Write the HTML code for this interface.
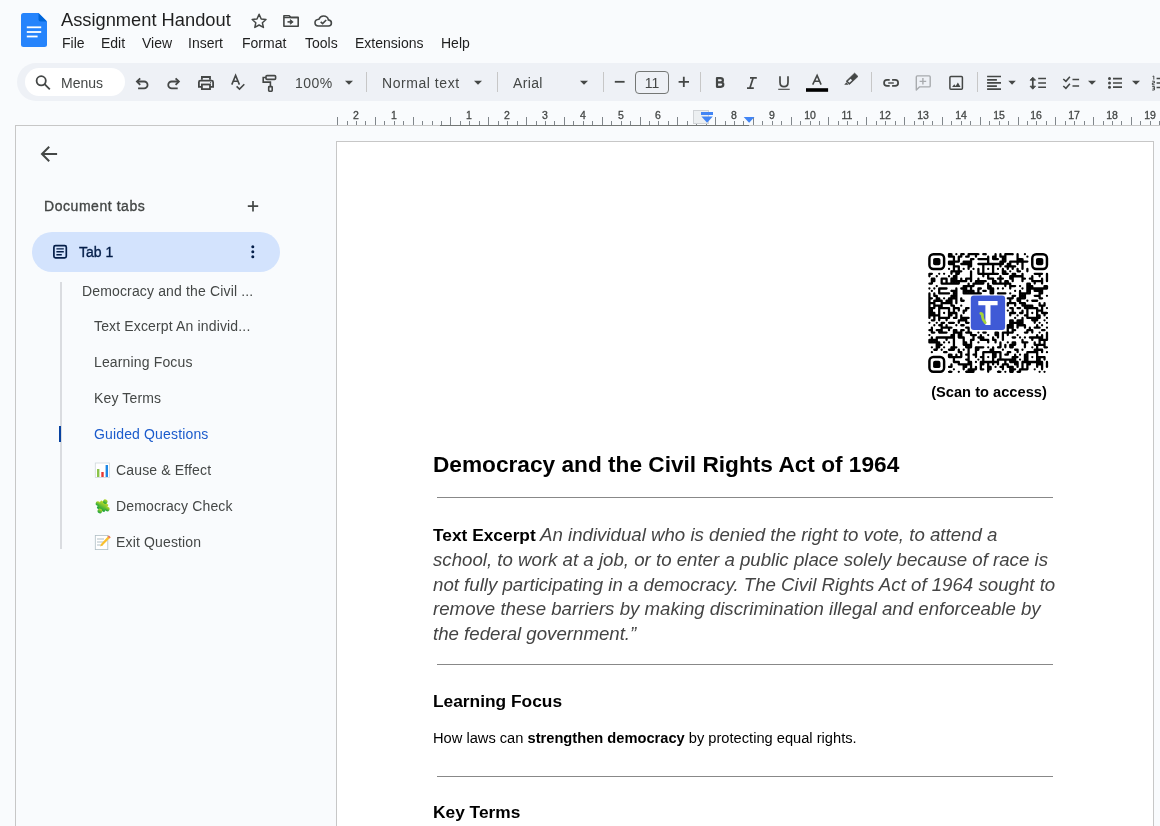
<!DOCTYPE html><html><head><meta charset="utf-8"><style>
*{box-sizing:border-box;margin:0;padding:0}
html,body{width:1160px;height:826px;overflow:hidden;background:#f9fbfd;font-family:"Liberation Sans",sans-serif;position:relative}
.t{position:absolute;white-space:nowrap;will-change:transform}
.a{position:absolute}
svg{position:absolute;overflow:visible}
.ic{fill:none;stroke:#444746;stroke-width:1.8}
</style></head><body><svg style="left:21px;top:13px" width="26" height="34" viewBox="0 0 26 34">
<path d="M2.5 0H17.5L26 8.5V31.5Q26 34 23.5 34H2.5Q0 34 0 31.5V2.5Q0 0 2.5 0Z" fill="#2684fc"/>
<path d="M17.5 0L26 8.5H19.5Q17.5 8.5 17.5 6.5Z" fill="#0066da"/>
<rect x="5.8" y="13.4" width="14.4" height="1.8" fill="#fff"/>
<rect x="5.8" y="18.1" width="14.4" height="1.8" fill="#fff"/>
<rect x="5.8" y="22.6" width="10.8" height="1.8" fill="#fff"/>
</svg><div class="t " style="left:61.3px;top:11.01px;font-size:18.3px;line-height:18.3px;color:#1f1f1f;">Assignment Handout</div>
<div class="t " style="left:62px;top:35.75px;font-size:14px;line-height:14px;color:#1f1f1f;">File</div>
<div class="t " style="left:101px;top:35.75px;font-size:14px;line-height:14px;color:#1f1f1f;">Edit</div>
<div class="t " style="left:142px;top:35.75px;font-size:14px;line-height:14px;color:#1f1f1f;">View</div>
<div class="t " style="left:188px;top:35.75px;font-size:14px;line-height:14px;color:#1f1f1f;">Insert</div>
<div class="t " style="left:242px;top:35.75px;font-size:14px;line-height:14px;color:#1f1f1f;">Format</div>
<div class="t " style="left:305px;top:35.75px;font-size:14px;line-height:14px;color:#1f1f1f;">Tools</div>
<div class="t " style="left:355px;top:35.75px;font-size:14px;line-height:14px;color:#1f1f1f;">Extensions</div>
<div class="t " style="left:441px;top:35.75px;font-size:14px;line-height:14px;color:#1f1f1f;">Help</div>
<div class="a" style="left:17px;top:63px;width:1200px;height:38px;border-radius:19px;background:#eef1f6"></div><div class="a" style="left:25px;top:68px;width:100px;height:28px;border-radius:14px;background:#fff"></div><div class="t " style="left:61px;top:75.55px;font-size:14px;line-height:14px;color:#444746;">Menus</div>
<div class="t " style="left:294.6px;top:75.55px;font-size:14px;line-height:14px;color:#444746;letter-spacing:0.5px;">100%</div>
<div class="t " style="left:381.6px;top:75.55px;font-size:14px;line-height:14px;color:#444746;letter-spacing:0.55px;">Normal text</div>
<div class="t " style="left:513px;top:75.55px;font-size:14px;line-height:14px;color:#444746;letter-spacing:0.35px;">Arial</div>
<div class="a" style="left:635px;top:70.5px;width:34px;height:23px;border:1px solid #747775;border-radius:4px"></div><div class="t" style="left:552px;width:200px;text-align:center;top:75.55px;font-size:14px;line-height:14px;color:#444746;">11</div>
<div class="a" style="left:366.0px;top:72px;width:1px;height:20px;background:#c7c7c7"></div><div class="a" style="left:496.5px;top:72px;width:1px;height:20px;background:#c7c7c7"></div><div class="a" style="left:603.0px;top:72px;width:1px;height:20px;background:#c7c7c7"></div><div class="a" style="left:700.0px;top:72px;width:1px;height:20px;background:#c7c7c7"></div><div class="a" style="left:871.0px;top:72px;width:1px;height:20px;background:#c7c7c7"></div><div class="a" style="left:976.5px;top:72px;width:1px;height:20px;background:#c7c7c7"></div><div class="a" style="left:15px;top:125px;width:1145px;height:1px;background:#c7c7c7"></div><div class="a" style="left:440px;top:125px;width:309px;height:1px;background:#747775"></div><div class="a" style="left:15px;top:125px;width:1px;height:701px;background:#c7c7c7"></div><div class="a" style="left:337px;top:117px;width:1px;height:8px;background:#80868b"></div><div class="a" style="left:347px;top:121px;width:1px;height:4px;background:#80868b"></div><div class="a" style="left:356px;top:121px;width:1px;height:4px;background:#80868b"></div><div class="a" style="left:365px;top:121px;width:1px;height:4px;background:#80868b"></div><div class="a" style="left:375px;top:117px;width:1px;height:8px;background:#80868b"></div><div class="a" style="left:384px;top:121px;width:1px;height:4px;background:#80868b"></div><div class="a" style="left:394px;top:121px;width:1px;height:4px;background:#80868b"></div><div class="a" style="left:403px;top:121px;width:1px;height:4px;background:#80868b"></div><div class="a" style="left:413px;top:117px;width:1px;height:8px;background:#80868b"></div><div class="a" style="left:422px;top:121px;width:1px;height:4px;background:#80868b"></div><div class="a" style="left:432px;top:121px;width:1px;height:4px;background:#80868b"></div><div class="a" style="left:441px;top:121px;width:1px;height:4px;background:#80868b"></div><div class="a" style="left:450px;top:117px;width:1px;height:8px;background:#80868b"></div><div class="a" style="left:460px;top:121px;width:1px;height:4px;background:#80868b"></div><div class="a" style="left:469px;top:121px;width:1px;height:4px;background:#80868b"></div><div class="a" style="left:479px;top:121px;width:1px;height:4px;background:#80868b"></div><div class="a" style="left:488px;top:117px;width:1px;height:8px;background:#80868b"></div><div class="a" style="left:498px;top:121px;width:1px;height:4px;background:#80868b"></div><div class="a" style="left:507px;top:121px;width:1px;height:4px;background:#80868b"></div><div class="a" style="left:517px;top:121px;width:1px;height:4px;background:#80868b"></div><div class="a" style="left:526px;top:117px;width:1px;height:8px;background:#80868b"></div><div class="a" style="left:536px;top:121px;width:1px;height:4px;background:#80868b"></div><div class="a" style="left:545px;top:121px;width:1px;height:4px;background:#80868b"></div><div class="a" style="left:554px;top:121px;width:1px;height:4px;background:#80868b"></div><div class="a" style="left:564px;top:117px;width:1px;height:8px;background:#80868b"></div><div class="a" style="left:573px;top:121px;width:1px;height:4px;background:#80868b"></div><div class="a" style="left:583px;top:121px;width:1px;height:4px;background:#80868b"></div><div class="a" style="left:592px;top:121px;width:1px;height:4px;background:#80868b"></div><div class="a" style="left:602px;top:117px;width:1px;height:8px;background:#80868b"></div><div class="a" style="left:611px;top:121px;width:1px;height:4px;background:#80868b"></div><div class="a" style="left:621px;top:121px;width:1px;height:4px;background:#80868b"></div><div class="a" style="left:630px;top:121px;width:1px;height:4px;background:#80868b"></div><div class="a" style="left:640px;top:117px;width:1px;height:8px;background:#80868b"></div><div class="a" style="left:649px;top:121px;width:1px;height:4px;background:#80868b"></div><div class="a" style="left:658px;top:121px;width:1px;height:4px;background:#80868b"></div><div class="a" style="left:668px;top:121px;width:1px;height:4px;background:#80868b"></div><div class="a" style="left:677px;top:117px;width:1px;height:8px;background:#80868b"></div><div class="a" style="left:687px;top:121px;width:1px;height:4px;background:#80868b"></div><div class="a" style="left:696px;top:121px;width:1px;height:4px;background:#80868b"></div><div class="a" style="left:706px;top:121px;width:1px;height:4px;background:#80868b"></div><div class="a" style="left:715px;top:117px;width:1px;height:8px;background:#80868b"></div><div class="a" style="left:725px;top:121px;width:1px;height:4px;background:#80868b"></div><div class="a" style="left:734px;top:121px;width:1px;height:4px;background:#80868b"></div><div class="a" style="left:743px;top:121px;width:1px;height:4px;background:#80868b"></div><div class="a" style="left:753px;top:117px;width:1px;height:8px;background:#80868b"></div><div class="a" style="left:762px;top:121px;width:1px;height:4px;background:#80868b"></div><div class="a" style="left:772px;top:121px;width:1px;height:4px;background:#80868b"></div><div class="a" style="left:781px;top:121px;width:1px;height:4px;background:#80868b"></div><div class="a" style="left:791px;top:117px;width:1px;height:8px;background:#80868b"></div><div class="a" style="left:800px;top:121px;width:1px;height:4px;background:#80868b"></div><div class="a" style="left:810px;top:121px;width:1px;height:4px;background:#80868b"></div><div class="a" style="left:819px;top:121px;width:1px;height:4px;background:#80868b"></div><div class="a" style="left:828px;top:117px;width:1px;height:8px;background:#80868b"></div><div class="a" style="left:838px;top:121px;width:1px;height:4px;background:#80868b"></div><div class="a" style="left:847px;top:121px;width:1px;height:4px;background:#80868b"></div><div class="a" style="left:857px;top:121px;width:1px;height:4px;background:#80868b"></div><div class="a" style="left:866px;top:117px;width:1px;height:8px;background:#80868b"></div><div class="a" style="left:876px;top:121px;width:1px;height:4px;background:#80868b"></div><div class="a" style="left:885px;top:121px;width:1px;height:4px;background:#80868b"></div><div class="a" style="left:895px;top:121px;width:1px;height:4px;background:#80868b"></div><div class="a" style="left:904px;top:117px;width:1px;height:8px;background:#80868b"></div><div class="a" style="left:914px;top:121px;width:1px;height:4px;background:#80868b"></div><div class="a" style="left:923px;top:121px;width:1px;height:4px;background:#80868b"></div><div class="a" style="left:932px;top:121px;width:1px;height:4px;background:#80868b"></div><div class="a" style="left:942px;top:117px;width:1px;height:8px;background:#80868b"></div><div class="a" style="left:951px;top:121px;width:1px;height:4px;background:#80868b"></div><div class="a" style="left:961px;top:121px;width:1px;height:4px;background:#80868b"></div><div class="a" style="left:970px;top:121px;width:1px;height:4px;background:#80868b"></div><div class="a" style="left:980px;top:117px;width:1px;height:8px;background:#80868b"></div><div class="a" style="left:989px;top:121px;width:1px;height:4px;background:#80868b"></div><div class="a" style="left:999px;top:121px;width:1px;height:4px;background:#80868b"></div><div class="a" style="left:1008px;top:121px;width:1px;height:4px;background:#80868b"></div><div class="a" style="left:1018px;top:117px;width:1px;height:8px;background:#80868b"></div><div class="a" style="left:1027px;top:121px;width:1px;height:4px;background:#80868b"></div><div class="a" style="left:1036px;top:121px;width:1px;height:4px;background:#80868b"></div><div class="a" style="left:1046px;top:121px;width:1px;height:4px;background:#80868b"></div><div class="a" style="left:1055px;top:117px;width:1px;height:8px;background:#80868b"></div><div class="a" style="left:1065px;top:121px;width:1px;height:4px;background:#80868b"></div><div class="a" style="left:1074px;top:121px;width:1px;height:4px;background:#80868b"></div><div class="a" style="left:1084px;top:121px;width:1px;height:4px;background:#80868b"></div><div class="a" style="left:1093px;top:117px;width:1px;height:8px;background:#80868b"></div><div class="a" style="left:1103px;top:121px;width:1px;height:4px;background:#80868b"></div><div class="a" style="left:1112px;top:121px;width:1px;height:4px;background:#80868b"></div><div class="a" style="left:1121px;top:121px;width:1px;height:4px;background:#80868b"></div><div class="a" style="left:1131px;top:117px;width:1px;height:8px;background:#80868b"></div><div class="a" style="left:1140px;top:121px;width:1px;height:4px;background:#80868b"></div><div class="a" style="left:1150px;top:121px;width:1px;height:4px;background:#80868b"></div><div class="a" style="left:1159px;top:121px;width:1px;height:4px;background:#80868b"></div><div class="t" style="left:256.0px;width:200px;text-align:center;top:110.11px;font-size:10.5px;line-height:10.5px;color:#444746;-webkit-text-stroke:0.3px #444746;">2</div>
<div class="t" style="left:293.8px;width:200px;text-align:center;top:110.11px;font-size:10.5px;line-height:10.5px;color:#444746;-webkit-text-stroke:0.3px #444746;">1</div>
<div class="t" style="left:369.40000000000003px;width:200px;text-align:center;top:110.11px;font-size:10.5px;line-height:10.5px;color:#444746;-webkit-text-stroke:0.3px #444746;">1</div>
<div class="t" style="left:407.20000000000005px;width:200px;text-align:center;top:110.11px;font-size:10.5px;line-height:10.5px;color:#444746;-webkit-text-stroke:0.3px #444746;">2</div>
<div class="t" style="left:445.0px;width:200px;text-align:center;top:110.11px;font-size:10.5px;line-height:10.5px;color:#444746;-webkit-text-stroke:0.3px #444746;">3</div>
<div class="t" style="left:482.79999999999995px;width:200px;text-align:center;top:110.11px;font-size:10.5px;line-height:10.5px;color:#444746;-webkit-text-stroke:0.3px #444746;">4</div>
<div class="t" style="left:520.6px;width:200px;text-align:center;top:110.11px;font-size:10.5px;line-height:10.5px;color:#444746;-webkit-text-stroke:0.3px #444746;">5</div>
<div class="t" style="left:558.4px;width:200px;text-align:center;top:110.11px;font-size:10.5px;line-height:10.5px;color:#444746;-webkit-text-stroke:0.3px #444746;">6</div>
<div class="t" style="left:596.2px;width:200px;text-align:center;top:110.11px;font-size:10.5px;line-height:10.5px;color:#444746;-webkit-text-stroke:0.3px #444746;">7</div>
<div class="t" style="left:634.0px;width:200px;text-align:center;top:110.11px;font-size:10.5px;line-height:10.5px;color:#444746;-webkit-text-stroke:0.3px #444746;">8</div>
<div class="t" style="left:671.8px;width:200px;text-align:center;top:110.11px;font-size:10.5px;line-height:10.5px;color:#444746;-webkit-text-stroke:0.3px #444746;">9</div>
<div class="t" style="left:709.6px;width:200px;text-align:center;top:110.11px;font-size:10.5px;line-height:10.5px;color:#444746;-webkit-text-stroke:0.3px #444746;">10</div>
<div class="t" style="left:747.4px;width:200px;text-align:center;top:110.11px;font-size:10.5px;line-height:10.5px;color:#444746;-webkit-text-stroke:0.3px #444746;">11</div>
<div class="t" style="left:785.2px;width:200px;text-align:center;top:110.11px;font-size:10.5px;line-height:10.5px;color:#444746;-webkit-text-stroke:0.3px #444746;">12</div>
<div class="t" style="left:823.0px;width:200px;text-align:center;top:110.11px;font-size:10.5px;line-height:10.5px;color:#444746;-webkit-text-stroke:0.3px #444746;">13</div>
<div class="t" style="left:860.8px;width:200px;text-align:center;top:110.11px;font-size:10.5px;line-height:10.5px;color:#444746;-webkit-text-stroke:0.3px #444746;">14</div>
<div class="t" style="left:898.6px;width:200px;text-align:center;top:110.11px;font-size:10.5px;line-height:10.5px;color:#444746;-webkit-text-stroke:0.3px #444746;">15</div>
<div class="t" style="left:936.4000000000001px;width:200px;text-align:center;top:110.11px;font-size:10.5px;line-height:10.5px;color:#444746;-webkit-text-stroke:0.3px #444746;">16</div>
<div class="t" style="left:974.1999999999998px;width:200px;text-align:center;top:110.11px;font-size:10.5px;line-height:10.5px;color:#444746;-webkit-text-stroke:0.3px #444746;">17</div>
<div class="t" style="left:1012.0px;width:200px;text-align:center;top:110.11px;font-size:10.5px;line-height:10.5px;color:#444746;-webkit-text-stroke:0.3px #444746;">18</div>
<div class="t" style="left:1049.8px;width:200px;text-align:center;top:110.11px;font-size:10.5px;line-height:10.5px;color:#444746;-webkit-text-stroke:0.3px #444746;">19</div>
<div class="a" style="left:693px;top:110px;width:16px;height:14px;background:#eceff1;border:1px solid #d0d3d6"></div><div class="a" style="left:701.4px;top:112px;width:11.4px;height:3.4px;background:#4285f4"></div><svg style="left:0;top:0" width="1160" height="826"><path d="M701.4 116.6H712.8L707.1 122.8Z" fill="#4285f4"/><path d="M743.7 117H754.5L749.1 122.8Z" fill="#4285f4"/></svg><div class="t " style="left:44.4px;top:199.45px;font-size:14px;line-height:14px;color:#444746;-webkit-text-stroke:0.35px #444746;letter-spacing:0.55px;">Document tabs</div>
<div class="a" style="left:32px;top:232px;width:248px;height:40px;border-radius:20px;background:#d3e3fd"></div><div class="t " style="left:79.4px;top:245.15px;font-size:14px;line-height:14px;color:#041e49;-webkit-text-stroke:0.35px #041e49;">Tab 1</div>
<div class="a" style="left:60px;top:282px;width:1.5px;height:267px;background:#dadce0"></div><div class="a" style="left:59px;top:426px;width:2px;height:16px;background:#0842a0"></div><div class="t " style="left:82.1px;top:283.65px;font-size:14px;line-height:14px;color:#444746;letter-spacing:0.15px;">Democracy and the Civil ...</div>
<div class="t " style="left:94.4px;top:319.45px;font-size:14px;line-height:14px;color:#444746;letter-spacing:0.15px;">Text Excerpt An individ...</div>
<div class="t " style="left:94.4px;top:355.15px;font-size:14px;line-height:14px;color:#444746;letter-spacing:0.15px;">Learning Focus</div>
<div class="t " style="left:94.4px;top:390.95px;font-size:14px;line-height:14px;color:#444746;letter-spacing:0.15px;">Key Terms</div>
<div class="t " style="left:94.4px;top:426.65px;font-size:14px;line-height:14px;color:#1b5bcc;letter-spacing:0.15px;">Guided Questions</div>
<div class="t " style="left:115.6px;top:462.95px;font-size:14px;line-height:14px;color:#444746;letter-spacing:0.15px;">Cause &amp; Effect</div>
<div class="t " style="left:115.6px;top:498.85px;font-size:14px;line-height:14px;color:#444746;letter-spacing:0.15px;">Democracy Check</div>
<div class="t " style="left:115.6px;top:534.65px;font-size:14px;line-height:14px;color:#444746;letter-spacing:0.15px;">Exit Question</div>
<div class="a" style="left:336px;top:141px;width:818px;height:700px;background:#fff;border:1px solid #c7c7c7"></div><div class="t " style="left:433.4px;top:452.81px;font-size:22.67px;line-height:22.67px;color:#000;font-weight:bold;">Democracy and the Civil Rights Act of 1964</div>
<div class="a" style="left:437px;top:497px;width:616px;height:1px;background:#888"></div><div class="t " style="left:433.4px;top:527.03px;font-size:17.33px;line-height:17.33px;color:#000;font-weight:bold;">Text Excerpt</div>
<div class="t " style="left:540.4px;top:525.90px;font-size:18.67px;line-height:18.67px;color:#444;font-style:italic;">An individual who is denied the right to vote, to attend a</div>
<div class="t " style="left:433.4px;top:550.50px;font-size:18.67px;line-height:18.67px;color:#444;font-style:italic;">school, to work at a job, or to enter a public place solely because of race is</div>
<div class="t " style="left:433.4px;top:576.20px;font-size:18.67px;line-height:18.67px;color:#444;font-style:italic;">not fully participating in a democracy. The Civil Rights Act of 1964 sought to</div>
<div class="t " style="left:433.4px;top:599.90px;font-size:18.67px;line-height:18.67px;color:#444;font-style:italic;">remove these barriers by making discrimination illegal and enforceable by</div>
<div class="t " style="left:433.4px;top:625.00px;font-size:18.67px;line-height:18.67px;color:#444;font-style:italic;">the federal government.”</div>
<div class="a" style="left:437px;top:663.5px;width:616px;height:1px;background:#888"></div><div class="t " style="left:433.4px;top:692.53px;font-size:17.33px;line-height:17.33px;color:#000;font-weight:bold;">Learning Focus</div>
<div class="t " style="left:433.4px;top:731.38px;font-size:14.67px;line-height:14.67px;color:#000;">How laws can <b>strengthen democracy</b> by protecting equal rights.</div>
<div class="a" style="left:437px;top:776px;width:616px;height:1px;background:#888"></div><div class="t " style="left:433.4px;top:804.43px;font-size:17.33px;line-height:17.33px;color:#000;font-weight:bold;">Key Terms</div>
<div class="t" style="left:889px;width:200px;text-align:center;top:385.38px;font-size:14.67px;line-height:14.67px;color:#000;font-weight:bold;">(Scan to access)</div>
<svg style="left:0;top:0" width="1160" height="826"><path d="M947.87 254.22a1.15 1.15 0 1 1 2.30 0a1.15 1.15 0 1 1 -2.30 0zM949.02 253.07h2.45v2.30h-2.45zM950.17 254.22v2.45h-2.30v-2.45zM950.31 254.22a1.15 1.15 0 1 1 2.30 0a1.15 1.15 0 1 1 -2.30 0zM952.62 254.22v2.45h-2.30v-2.45zM955.21 254.22a1.15 1.15 0 1 1 2.30 0a1.15 1.15 0 1 1 -2.30 0zM960.11 254.22a1.15 1.15 0 1 1 2.30 0a1.15 1.15 0 1 1 -2.30 0zM961.26 253.07h2.45v2.30h-2.45zM962.41 254.22v2.45h-2.30v-2.45zM962.56 254.22a1.15 1.15 0 1 1 2.30 0a1.15 1.15 0 1 1 -2.30 0zM967.46 254.22a1.15 1.15 0 1 1 2.30 0a1.15 1.15 0 1 1 -2.30 0zM968.61 253.07h2.45v2.30h-2.45zM969.76 254.22v2.45h-2.30v-2.45zM969.91 254.22a1.15 1.15 0 1 1 2.30 0a1.15 1.15 0 1 1 -2.30 0zM971.06 253.07h2.45v2.30h-2.45zM972.36 254.22a1.15 1.15 0 1 1 2.30 0a1.15 1.15 0 1 1 -2.30 0zM973.51 253.07h2.45v2.30h-2.45zM974.80 254.22a1.15 1.15 0 1 1 2.30 0a1.15 1.15 0 1 1 -2.30 0zM975.96 253.07h2.45v2.30h-2.45zM977.11 254.22v2.45h-2.30v-2.45zM977.25 254.22a1.15 1.15 0 1 1 2.30 0a1.15 1.15 0 1 1 -2.30 0zM982.15 254.22a1.15 1.15 0 1 1 2.30 0a1.15 1.15 0 1 1 -2.30 0zM983.30 253.07h2.45v2.30h-2.45zM984.60 254.22a1.15 1.15 0 1 1 2.30 0a1.15 1.15 0 1 1 -2.30 0zM994.40 254.22a1.15 1.15 0 1 1 2.30 0a1.15 1.15 0 1 1 -2.30 0zM996.70 254.22v2.45h-2.30v-2.45zM999.29 254.22a1.15 1.15 0 1 1 2.30 0a1.15 1.15 0 1 1 -2.30 0zM1001.60 254.22v2.45h-2.30v-2.45zM1004.19 254.22a1.15 1.15 0 1 1 2.30 0a1.15 1.15 0 1 1 -2.30 0zM1005.34 253.07h2.45v2.30h-2.45zM1006.49 254.22v2.45h-2.30v-2.45zM1006.64 254.22a1.15 1.15 0 1 1 2.30 0a1.15 1.15 0 1 1 -2.30 0zM1007.79 253.07h2.45v2.30h-2.45zM1009.09 254.22a1.15 1.15 0 1 1 2.30 0a1.15 1.15 0 1 1 -2.30 0zM1010.24 253.07h2.45v2.30h-2.45zM1011.54 254.22a1.15 1.15 0 1 1 2.30 0a1.15 1.15 0 1 1 -2.30 0zM1016.44 254.22a1.15 1.15 0 1 1 2.30 0a1.15 1.15 0 1 1 -2.30 0zM1018.74 254.22v2.45h-2.30v-2.45zM1023.78 254.22a1.15 1.15 0 1 1 2.30 0a1.15 1.15 0 1 1 -2.30 0zM947.87 256.67a1.15 1.15 0 1 1 2.30 0a1.15 1.15 0 1 1 -2.30 0zM949.02 255.52h2.45v2.30h-2.45zM950.31 256.67a1.15 1.15 0 1 1 2.30 0a1.15 1.15 0 1 1 -2.30 0zM951.47 255.52h2.45v2.30h-2.45zM952.76 256.67a1.15 1.15 0 1 1 2.30 0a1.15 1.15 0 1 1 -2.30 0zM955.07 256.67v2.45h-2.30v-2.45zM957.66 256.67a1.15 1.15 0 1 1 2.30 0a1.15 1.15 0 1 1 -2.30 0zM958.81 255.52h2.45v2.30h-2.45zM959.96 256.67v2.45h-2.30v-2.45zM960.11 256.67a1.15 1.15 0 1 1 2.30 0a1.15 1.15 0 1 1 -2.30 0zM965.01 256.67a1.15 1.15 0 1 1 2.30 0a1.15 1.15 0 1 1 -2.30 0zM966.16 255.52h2.45v2.30h-2.45zM967.46 256.67a1.15 1.15 0 1 1 2.30 0a1.15 1.15 0 1 1 -2.30 0zM974.80 256.67a1.15 1.15 0 1 1 2.30 0a1.15 1.15 0 1 1 -2.30 0zM987.05 256.67a1.15 1.15 0 1 1 2.30 0a1.15 1.15 0 1 1 -2.30 0zM989.35 256.67v2.45h-2.30v-2.45zM991.95 256.67a1.15 1.15 0 1 1 2.30 0a1.15 1.15 0 1 1 -2.30 0zM993.10 255.52h2.45v2.30h-2.45zM994.25 256.67v2.45h-2.30v-2.45zM994.40 256.67a1.15 1.15 0 1 1 2.30 0a1.15 1.15 0 1 1 -2.30 0zM996.70 256.67v2.45h-2.30v-2.45zM999.29 256.67a1.15 1.15 0 1 1 2.30 0a1.15 1.15 0 1 1 -2.30 0zM1000.44 255.52h2.45v2.30h-2.45zM1001.74 256.67a1.15 1.15 0 1 1 2.30 0a1.15 1.15 0 1 1 -2.30 0zM1002.89 255.52h2.45v2.30h-2.45zM1004.04 256.67v2.45h-2.30v-2.45zM1004.19 256.67a1.15 1.15 0 1 1 2.30 0a1.15 1.15 0 1 1 -2.30 0zM1006.49 256.67v2.45h-2.30v-2.45zM1016.44 256.67a1.15 1.15 0 1 1 2.30 0a1.15 1.15 0 1 1 -2.30 0zM1018.74 256.67v2.45h-2.30v-2.45zM1026.23 256.67a1.15 1.15 0 1 1 2.30 0a1.15 1.15 0 1 1 -2.30 0zM952.76 259.12a1.15 1.15 0 1 1 2.30 0a1.15 1.15 0 1 1 -2.30 0zM955.07 259.12v2.45h-2.30v-2.45zM957.66 259.12a1.15 1.15 0 1 1 2.30 0a1.15 1.15 0 1 1 -2.30 0zM959.96 259.12v2.45h-2.30v-2.45zM969.91 259.12a1.15 1.15 0 1 1 2.30 0a1.15 1.15 0 1 1 -2.30 0zM971.06 257.97h2.45v2.30h-2.45zM972.21 259.12v2.45h-2.30v-2.45zM972.36 259.12a1.15 1.15 0 1 1 2.30 0a1.15 1.15 0 1 1 -2.30 0zM977.25 259.12a1.15 1.15 0 1 1 2.30 0a1.15 1.15 0 1 1 -2.30 0zM978.40 257.97h2.45v2.30h-2.45zM979.70 259.12a1.15 1.15 0 1 1 2.30 0a1.15 1.15 0 1 1 -2.30 0zM980.85 257.97h2.45v2.30h-2.45zM982.15 259.12a1.15 1.15 0 1 1 2.30 0a1.15 1.15 0 1 1 -2.30 0zM983.30 257.97h2.45v2.30h-2.45zM984.60 259.12a1.15 1.15 0 1 1 2.30 0a1.15 1.15 0 1 1 -2.30 0zM985.75 257.97h2.45v2.30h-2.45zM987.05 259.12a1.15 1.15 0 1 1 2.30 0a1.15 1.15 0 1 1 -2.30 0zM989.35 259.12v2.45h-2.30v-2.45zM991.95 259.12a1.15 1.15 0 1 1 2.30 0a1.15 1.15 0 1 1 -2.30 0zM993.10 257.97h2.45v2.30h-2.45zM994.40 259.12a1.15 1.15 0 1 1 2.30 0a1.15 1.15 0 1 1 -2.30 0zM995.55 257.97h2.45v2.30h-2.45zM996.84 259.12a1.15 1.15 0 1 1 2.30 0a1.15 1.15 0 1 1 -2.30 0zM1001.74 259.12a1.15 1.15 0 1 1 2.30 0a1.15 1.15 0 1 1 -2.30 0zM1002.89 257.97h2.45v2.30h-2.45zM1004.04 259.12v2.45h-2.30v-2.45zM1004.19 259.12a1.15 1.15 0 1 1 2.30 0a1.15 1.15 0 1 1 -2.30 0zM1006.49 259.12v2.45h-2.30v-2.45zM1016.44 259.12a1.15 1.15 0 1 1 2.30 0a1.15 1.15 0 1 1 -2.30 0zM1017.59 257.97h2.45v2.30h-2.45zM1018.74 259.12v2.45h-2.30v-2.45zM1018.89 259.12a1.15 1.15 0 1 1 2.30 0a1.15 1.15 0 1 1 -2.30 0zM1020.04 257.97h2.45v2.30h-2.45zM1021.19 259.12v2.45h-2.30v-2.45zM1021.33 259.12a1.15 1.15 0 1 1 2.30 0a1.15 1.15 0 1 1 -2.30 0zM1023.64 259.12v2.45h-2.30v-2.45zM947.87 261.57a1.15 1.15 0 1 1 2.30 0a1.15 1.15 0 1 1 -2.30 0zM949.02 260.42h2.45v2.30h-2.45zM950.17 261.57v2.45h-2.30v-2.45zM950.31 261.57a1.15 1.15 0 1 1 2.30 0a1.15 1.15 0 1 1 -2.30 0zM951.47 260.42h2.45v2.30h-2.45zM952.62 261.57v2.45h-2.30v-2.45zM952.76 261.57a1.15 1.15 0 1 1 2.30 0a1.15 1.15 0 1 1 -2.30 0zM953.91 260.42h2.45v2.30h-2.45zM955.07 261.57v2.45h-2.30v-2.45zM955.21 261.57a1.15 1.15 0 1 1 2.30 0a1.15 1.15 0 1 1 -2.30 0zM956.36 260.42h2.45v2.30h-2.45zM957.66 261.57a1.15 1.15 0 1 1 2.30 0a1.15 1.15 0 1 1 -2.30 0zM962.56 261.57a1.15 1.15 0 1 1 2.30 0a1.15 1.15 0 1 1 -2.30 0zM963.71 260.42h2.45v2.30h-2.45zM964.86 261.57v2.45h-2.30v-2.45zM965.01 261.57a1.15 1.15 0 1 1 2.30 0a1.15 1.15 0 1 1 -2.30 0zM966.16 260.42h2.45v2.30h-2.45zM967.31 261.57v2.45h-2.30v-2.45zM967.46 261.57a1.15 1.15 0 1 1 2.30 0a1.15 1.15 0 1 1 -2.30 0zM968.61 260.42h2.45v2.30h-2.45zM969.76 261.57v2.45h-2.30v-2.45zM969.91 261.57a1.15 1.15 0 1 1 2.30 0a1.15 1.15 0 1 1 -2.30 0zM972.21 261.57v2.45h-2.30v-2.45zM987.05 261.57a1.15 1.15 0 1 1 2.30 0a1.15 1.15 0 1 1 -2.30 0zM989.35 261.57v2.45h-2.30v-2.45zM999.29 261.57a1.15 1.15 0 1 1 2.30 0a1.15 1.15 0 1 1 -2.30 0zM1000.44 260.42h2.45v2.30h-2.45zM1001.60 261.57v2.45h-2.30v-2.45zM1001.74 261.57a1.15 1.15 0 1 1 2.30 0a1.15 1.15 0 1 1 -2.30 0zM1002.89 260.42h2.45v2.30h-2.45zM1004.04 261.57v2.45h-2.30v-2.45zM1004.19 261.57a1.15 1.15 0 1 1 2.30 0a1.15 1.15 0 1 1 -2.30 0zM1009.09 261.57a1.15 1.15 0 1 1 2.30 0a1.15 1.15 0 1 1 -2.30 0zM1010.24 260.42h2.45v2.30h-2.45zM1011.39 261.57v2.45h-2.30v-2.45zM1011.54 261.57a1.15 1.15 0 1 1 2.30 0a1.15 1.15 0 1 1 -2.30 0zM1012.69 260.42h2.45v2.30h-2.45zM1013.99 261.57a1.15 1.15 0 1 1 2.30 0a1.15 1.15 0 1 1 -2.30 0zM1015.14 260.42h2.45v2.30h-2.45zM1016.44 261.57a1.15 1.15 0 1 1 2.30 0a1.15 1.15 0 1 1 -2.30 0zM1017.59 260.42h2.45v2.30h-2.45zM1018.74 261.57v2.45h-2.30v-2.45zM1018.89 261.57a1.15 1.15 0 1 1 2.30 0a1.15 1.15 0 1 1 -2.30 0zM1020.04 260.42h2.45v2.30h-2.45zM1021.33 261.57a1.15 1.15 0 1 1 2.30 0a1.15 1.15 0 1 1 -2.30 0zM1022.49 260.42h2.45v2.30h-2.45zM1023.64 261.57v2.45h-2.30v-2.45zM1023.78 261.57a1.15 1.15 0 1 1 2.30 0a1.15 1.15 0 1 1 -2.30 0zM1024.93 260.42h2.45v2.30h-2.45zM1026.23 261.57a1.15 1.15 0 1 1 2.30 0a1.15 1.15 0 1 1 -2.30 0zM947.87 264.02a1.15 1.15 0 1 1 2.30 0a1.15 1.15 0 1 1 -2.30 0zM949.02 262.87h2.45v2.30h-2.45zM950.31 264.02a1.15 1.15 0 1 1 2.30 0a1.15 1.15 0 1 1 -2.30 0zM951.47 262.87h2.45v2.30h-2.45zM952.76 264.02a1.15 1.15 0 1 1 2.30 0a1.15 1.15 0 1 1 -2.30 0zM955.07 264.02v2.45h-2.30v-2.45zM960.11 264.02a1.15 1.15 0 1 1 2.30 0a1.15 1.15 0 1 1 -2.30 0zM961.26 262.87h2.45v2.30h-2.45zM962.56 264.02a1.15 1.15 0 1 1 2.30 0a1.15 1.15 0 1 1 -2.30 0zM963.71 262.87h2.45v2.30h-2.45zM965.01 264.02a1.15 1.15 0 1 1 2.30 0a1.15 1.15 0 1 1 -2.30 0zM966.16 262.87h2.45v2.30h-2.45zM967.46 264.02a1.15 1.15 0 1 1 2.30 0a1.15 1.15 0 1 1 -2.30 0zM968.61 262.87h2.45v2.30h-2.45zM969.76 264.02v2.45h-2.30v-2.45zM969.91 264.02a1.15 1.15 0 1 1 2.30 0a1.15 1.15 0 1 1 -2.30 0zM972.21 264.02v2.45h-2.30v-2.45zM977.25 264.02a1.15 1.15 0 1 1 2.30 0a1.15 1.15 0 1 1 -2.30 0zM978.40 262.87h2.45v2.30h-2.45zM979.70 264.02a1.15 1.15 0 1 1 2.30 0a1.15 1.15 0 1 1 -2.30 0zM980.85 262.87h2.45v2.30h-2.45zM982.15 264.02a1.15 1.15 0 1 1 2.30 0a1.15 1.15 0 1 1 -2.30 0zM983.30 262.87h2.45v2.30h-2.45zM984.45 264.02v2.45h-2.30v-2.45zM984.60 264.02a1.15 1.15 0 1 1 2.30 0a1.15 1.15 0 1 1 -2.30 0zM985.75 262.87h2.45v2.30h-2.45zM987.05 264.02a1.15 1.15 0 1 1 2.30 0a1.15 1.15 0 1 1 -2.30 0zM988.20 262.87h2.45v2.30h-2.45zM989.50 264.02a1.15 1.15 0 1 1 2.30 0a1.15 1.15 0 1 1 -2.30 0zM990.65 262.87h2.45v2.30h-2.45zM991.95 264.02a1.15 1.15 0 1 1 2.30 0a1.15 1.15 0 1 1 -2.30 0zM993.10 262.87h2.45v2.30h-2.45zM994.25 264.02v2.45h-2.30v-2.45zM994.40 264.02a1.15 1.15 0 1 1 2.30 0a1.15 1.15 0 1 1 -2.30 0zM995.55 262.87h2.45v2.30h-2.45zM996.84 264.02a1.15 1.15 0 1 1 2.30 0a1.15 1.15 0 1 1 -2.30 0zM998.00 262.87h2.45v2.30h-2.45zM999.29 264.02a1.15 1.15 0 1 1 2.30 0a1.15 1.15 0 1 1 -2.30 0zM1000.44 262.87h2.45v2.30h-2.45zM1001.60 264.02v2.45h-2.30v-2.45zM1001.74 264.02a1.15 1.15 0 1 1 2.30 0a1.15 1.15 0 1 1 -2.30 0zM1006.64 264.02a1.15 1.15 0 1 1 2.30 0a1.15 1.15 0 1 1 -2.30 0zM1007.79 262.87h2.45v2.30h-2.45zM1008.94 264.02v2.45h-2.30v-2.45zM1009.09 264.02a1.15 1.15 0 1 1 2.30 0a1.15 1.15 0 1 1 -2.30 0zM1011.39 264.02v2.45h-2.30v-2.45zM1016.44 264.02a1.15 1.15 0 1 1 2.30 0a1.15 1.15 0 1 1 -2.30 0zM1021.33 264.02a1.15 1.15 0 1 1 2.30 0a1.15 1.15 0 1 1 -2.30 0zM1023.64 264.02v2.45h-2.30v-2.45zM952.76 266.47a1.15 1.15 0 1 1 2.30 0a1.15 1.15 0 1 1 -2.30 0zM953.91 265.32h2.45v2.30h-2.45zM955.07 266.47v2.45h-2.30v-2.45zM955.21 266.47a1.15 1.15 0 1 1 2.30 0a1.15 1.15 0 1 1 -2.30 0zM956.36 265.32h2.45v2.30h-2.45zM957.66 266.47a1.15 1.15 0 1 1 2.30 0a1.15 1.15 0 1 1 -2.30 0zM959.96 266.47v2.45h-2.30v-2.45zM967.46 266.47a1.15 1.15 0 1 1 2.30 0a1.15 1.15 0 1 1 -2.30 0zM968.61 265.32h2.45v2.30h-2.45zM969.76 266.47v2.45h-2.30v-2.45zM969.91 266.47a1.15 1.15 0 1 1 2.30 0a1.15 1.15 0 1 1 -2.30 0zM982.15 266.47a1.15 1.15 0 1 1 2.30 0a1.15 1.15 0 1 1 -2.30 0zM984.45 266.47v2.45h-2.30v-2.45zM991.95 266.47a1.15 1.15 0 1 1 2.30 0a1.15 1.15 0 1 1 -2.30 0zM994.25 266.47v2.45h-2.30v-2.45zM999.29 266.47a1.15 1.15 0 1 1 2.30 0a1.15 1.15 0 1 1 -2.30 0zM1004.19 266.47a1.15 1.15 0 1 1 2.30 0a1.15 1.15 0 1 1 -2.30 0zM1005.34 265.32h2.45v2.30h-2.45zM1006.64 266.47a1.15 1.15 0 1 1 2.30 0a1.15 1.15 0 1 1 -2.30 0zM1007.79 265.32h2.45v2.30h-2.45zM1008.94 266.47v2.45h-2.30v-2.45zM1009.09 266.47a1.15 1.15 0 1 1 2.30 0a1.15 1.15 0 1 1 -2.30 0zM1010.24 265.32h2.45v2.30h-2.45zM1011.54 266.47a1.15 1.15 0 1 1 2.30 0a1.15 1.15 0 1 1 -2.30 0zM1012.69 265.32h2.45v2.30h-2.45zM1013.84 266.47v2.45h-2.30v-2.45zM1013.99 266.47a1.15 1.15 0 1 1 2.30 0a1.15 1.15 0 1 1 -2.30 0zM1021.33 266.47a1.15 1.15 0 1 1 2.30 0a1.15 1.15 0 1 1 -2.30 0zM1023.64 266.47v2.45h-2.30v-2.45zM947.87 268.92a1.15 1.15 0 1 1 2.30 0a1.15 1.15 0 1 1 -2.30 0zM952.76 268.92a1.15 1.15 0 1 1 2.30 0a1.15 1.15 0 1 1 -2.30 0zM955.07 268.92v2.45h-2.30v-2.45zM957.66 268.92a1.15 1.15 0 1 1 2.30 0a1.15 1.15 0 1 1 -2.30 0zM959.96 268.92v2.45h-2.30v-2.45zM962.56 268.92a1.15 1.15 0 1 1 2.30 0a1.15 1.15 0 1 1 -2.30 0zM967.46 268.92a1.15 1.15 0 1 1 2.30 0a1.15 1.15 0 1 1 -2.30 0zM972.36 268.92a1.15 1.15 0 1 1 2.30 0a1.15 1.15 0 1 1 -2.30 0zM977.25 268.92a1.15 1.15 0 1 1 2.30 0a1.15 1.15 0 1 1 -2.30 0zM979.56 268.92v2.45h-2.30v-2.45zM982.15 268.92a1.15 1.15 0 1 1 2.30 0a1.15 1.15 0 1 1 -2.30 0zM984.45 268.92v2.45h-2.30v-2.45zM987.05 268.92a1.15 1.15 0 1 1 2.30 0a1.15 1.15 0 1 1 -2.30 0zM991.95 268.92a1.15 1.15 0 1 1 2.30 0a1.15 1.15 0 1 1 -2.30 0zM994.25 268.92v2.45h-2.30v-2.45zM996.84 268.92a1.15 1.15 0 1 1 2.30 0a1.15 1.15 0 1 1 -2.30 0zM1001.74 268.92a1.15 1.15 0 1 1 2.30 0a1.15 1.15 0 1 1 -2.30 0zM1004.04 268.92v2.45h-2.30v-2.45zM1006.64 268.92a1.15 1.15 0 1 1 2.30 0a1.15 1.15 0 1 1 -2.30 0zM1011.54 268.92a1.15 1.15 0 1 1 2.30 0a1.15 1.15 0 1 1 -2.30 0zM1016.44 268.92a1.15 1.15 0 1 1 2.30 0a1.15 1.15 0 1 1 -2.30 0zM1018.74 268.92v2.45h-2.30v-2.45zM1021.33 268.92a1.15 1.15 0 1 1 2.30 0a1.15 1.15 0 1 1 -2.30 0zM1026.23 268.92a1.15 1.15 0 1 1 2.30 0a1.15 1.15 0 1 1 -2.30 0zM1028.53 268.92v2.45h-2.30v-2.45zM950.31 271.37a1.15 1.15 0 1 1 2.30 0a1.15 1.15 0 1 1 -2.30 0zM951.47 270.22h2.45v2.30h-2.45zM952.62 271.37v2.45h-2.30v-2.45zM952.76 271.37a1.15 1.15 0 1 1 2.30 0a1.15 1.15 0 1 1 -2.30 0zM953.91 270.22h2.45v2.30h-2.45zM955.21 271.37a1.15 1.15 0 1 1 2.30 0a1.15 1.15 0 1 1 -2.30 0zM956.36 270.22h2.45v2.30h-2.45zM957.51 271.37v2.45h-2.30v-2.45zM957.66 271.37a1.15 1.15 0 1 1 2.30 0a1.15 1.15 0 1 1 -2.30 0zM958.81 270.22h2.45v2.30h-2.45zM959.96 271.37v2.45h-2.30v-2.45zM960.11 271.37a1.15 1.15 0 1 1 2.30 0a1.15 1.15 0 1 1 -2.30 0zM969.91 271.37a1.15 1.15 0 1 1 2.30 0a1.15 1.15 0 1 1 -2.30 0zM972.21 271.37v2.45h-2.30v-2.45zM977.25 271.37a1.15 1.15 0 1 1 2.30 0a1.15 1.15 0 1 1 -2.30 0zM979.56 271.37v2.45h-2.30v-2.45zM982.15 271.37a1.15 1.15 0 1 1 2.30 0a1.15 1.15 0 1 1 -2.30 0zM984.45 271.37v2.45h-2.30v-2.45zM991.95 271.37a1.15 1.15 0 1 1 2.30 0a1.15 1.15 0 1 1 -2.30 0zM994.25 271.37v2.45h-2.30v-2.45zM1001.74 271.37a1.15 1.15 0 1 1 2.30 0a1.15 1.15 0 1 1 -2.30 0zM1002.89 270.22h2.45v2.30h-2.45zM1004.04 271.37v2.45h-2.30v-2.45zM1004.19 271.37a1.15 1.15 0 1 1 2.30 0a1.15 1.15 0 1 1 -2.30 0zM1006.49 271.37v2.45h-2.30v-2.45zM1009.09 271.37a1.15 1.15 0 1 1 2.30 0a1.15 1.15 0 1 1 -2.30 0zM1016.44 271.37a1.15 1.15 0 1 1 2.30 0a1.15 1.15 0 1 1 -2.30 0zM1017.59 270.22h2.45v2.30h-2.45zM1018.89 271.37a1.15 1.15 0 1 1 2.30 0a1.15 1.15 0 1 1 -2.30 0zM1026.23 271.37a1.15 1.15 0 1 1 2.30 0a1.15 1.15 0 1 1 -2.30 0zM928.27 273.82a1.15 1.15 0 1 1 2.30 0a1.15 1.15 0 1 1 -2.30 0zM929.42 272.67h2.45v2.30h-2.45zM930.58 273.82v2.45h-2.30v-2.45zM930.72 273.82a1.15 1.15 0 1 1 2.30 0a1.15 1.15 0 1 1 -2.30 0zM938.07 273.82a1.15 1.15 0 1 1 2.30 0a1.15 1.15 0 1 1 -2.30 0zM942.97 273.82a1.15 1.15 0 1 1 2.30 0a1.15 1.15 0 1 1 -2.30 0zM950.31 273.82a1.15 1.15 0 1 1 2.30 0a1.15 1.15 0 1 1 -2.30 0zM955.21 273.82a1.15 1.15 0 1 1 2.30 0a1.15 1.15 0 1 1 -2.30 0zM956.36 272.67h2.45v2.30h-2.45zM957.51 273.82v2.45h-2.30v-2.45zM957.66 273.82a1.15 1.15 0 1 1 2.30 0a1.15 1.15 0 1 1 -2.30 0zM969.91 273.82a1.15 1.15 0 1 1 2.30 0a1.15 1.15 0 1 1 -2.30 0zM972.21 273.82v2.45h-2.30v-2.45zM977.25 273.82a1.15 1.15 0 1 1 2.30 0a1.15 1.15 0 1 1 -2.30 0zM978.40 272.67h2.45v2.30h-2.45zM979.70 273.82a1.15 1.15 0 1 1 2.30 0a1.15 1.15 0 1 1 -2.30 0zM980.85 272.67h2.45v2.30h-2.45zM982.15 273.82a1.15 1.15 0 1 1 2.30 0a1.15 1.15 0 1 1 -2.30 0zM983.30 272.67h2.45v2.30h-2.45zM984.45 273.82v2.45h-2.30v-2.45zM984.60 273.82a1.15 1.15 0 1 1 2.30 0a1.15 1.15 0 1 1 -2.30 0zM985.75 272.67h2.45v2.30h-2.45zM987.05 273.82a1.15 1.15 0 1 1 2.30 0a1.15 1.15 0 1 1 -2.30 0zM988.20 272.67h2.45v2.30h-2.45zM989.35 273.82v2.45h-2.30v-2.45zM989.50 273.82a1.15 1.15 0 1 1 2.30 0a1.15 1.15 0 1 1 -2.30 0zM990.65 272.67h2.45v2.30h-2.45zM991.95 273.82a1.15 1.15 0 1 1 2.30 0a1.15 1.15 0 1 1 -2.30 0zM993.10 272.67h2.45v2.30h-2.45zM994.40 273.82a1.15 1.15 0 1 1 2.30 0a1.15 1.15 0 1 1 -2.30 0zM995.55 272.67h2.45v2.30h-2.45zM996.84 273.82a1.15 1.15 0 1 1 2.30 0a1.15 1.15 0 1 1 -2.30 0zM1001.74 273.82a1.15 1.15 0 1 1 2.30 0a1.15 1.15 0 1 1 -2.30 0zM1002.89 272.67h2.45v2.30h-2.45zM1004.19 273.82a1.15 1.15 0 1 1 2.30 0a1.15 1.15 0 1 1 -2.30 0zM1005.34 272.67h2.45v2.30h-2.45zM1006.64 273.82a1.15 1.15 0 1 1 2.30 0a1.15 1.15 0 1 1 -2.30 0zM1011.54 273.82a1.15 1.15 0 1 1 2.30 0a1.15 1.15 0 1 1 -2.30 0zM1012.69 272.67h2.45v2.30h-2.45zM1013.84 273.82v2.45h-2.30v-2.45zM1013.99 273.82a1.15 1.15 0 1 1 2.30 0a1.15 1.15 0 1 1 -2.30 0zM1016.29 273.82v2.45h-2.30v-2.45zM1021.33 273.82a1.15 1.15 0 1 1 2.30 0a1.15 1.15 0 1 1 -2.30 0zM1023.64 273.82v2.45h-2.30v-2.45zM1033.58 273.82a1.15 1.15 0 1 1 2.30 0a1.15 1.15 0 1 1 -2.30 0zM1034.73 272.67h2.45v2.30h-2.45zM1036.03 273.82a1.15 1.15 0 1 1 2.30 0a1.15 1.15 0 1 1 -2.30 0zM1037.18 272.67h2.45v2.30h-2.45zM1038.48 273.82a1.15 1.15 0 1 1 2.30 0a1.15 1.15 0 1 1 -2.30 0zM1039.63 272.67h2.45v2.30h-2.45zM1040.78 273.82v2.45h-2.30v-2.45zM1040.93 273.82a1.15 1.15 0 1 1 2.30 0a1.15 1.15 0 1 1 -2.30 0zM1045.82 273.82a1.15 1.15 0 1 1 2.30 0a1.15 1.15 0 1 1 -2.30 0zM1048.13 273.82v2.45h-2.30v-2.45zM928.27 276.27a1.15 1.15 0 1 1 2.30 0a1.15 1.15 0 1 1 -2.30 0zM935.62 276.27a1.15 1.15 0 1 1 2.30 0a1.15 1.15 0 1 1 -2.30 0zM947.87 276.27a1.15 1.15 0 1 1 2.30 0a1.15 1.15 0 1 1 -2.30 0zM952.76 276.27a1.15 1.15 0 1 1 2.30 0a1.15 1.15 0 1 1 -2.30 0zM953.91 275.11h2.45v2.30h-2.45zM955.07 276.27v2.45h-2.30v-2.45zM955.21 276.27a1.15 1.15 0 1 1 2.30 0a1.15 1.15 0 1 1 -2.30 0zM957.51 276.27v2.45h-2.30v-2.45zM969.91 276.27a1.15 1.15 0 1 1 2.30 0a1.15 1.15 0 1 1 -2.30 0zM972.21 276.27v2.45h-2.30v-2.45zM982.15 276.27a1.15 1.15 0 1 1 2.30 0a1.15 1.15 0 1 1 -2.30 0zM987.05 276.27a1.15 1.15 0 1 1 2.30 0a1.15 1.15 0 1 1 -2.30 0zM989.35 276.27v2.45h-2.30v-2.45zM999.29 276.27a1.15 1.15 0 1 1 2.30 0a1.15 1.15 0 1 1 -2.30 0zM1001.60 276.27v2.45h-2.30v-2.45zM1009.09 276.27a1.15 1.15 0 1 1 2.30 0a1.15 1.15 0 1 1 -2.30 0zM1010.24 275.11h2.45v2.30h-2.45zM1011.39 276.27v2.45h-2.30v-2.45zM1011.54 276.27a1.15 1.15 0 1 1 2.30 0a1.15 1.15 0 1 1 -2.30 0zM1012.69 275.11h2.45v2.30h-2.45zM1013.84 276.27v2.45h-2.30v-2.45zM1013.99 276.27a1.15 1.15 0 1 1 2.30 0a1.15 1.15 0 1 1 -2.30 0zM1015.14 275.11h2.45v2.30h-2.45zM1016.44 276.27a1.15 1.15 0 1 1 2.30 0a1.15 1.15 0 1 1 -2.30 0zM1017.59 275.11h2.45v2.30h-2.45zM1018.89 276.27a1.15 1.15 0 1 1 2.30 0a1.15 1.15 0 1 1 -2.30 0zM1020.04 275.11h2.45v2.30h-2.45zM1021.33 276.27a1.15 1.15 0 1 1 2.30 0a1.15 1.15 0 1 1 -2.30 0zM1023.64 276.27v2.45h-2.30v-2.45zM1031.13 276.27a1.15 1.15 0 1 1 2.30 0a1.15 1.15 0 1 1 -2.30 0zM1033.43 276.27v2.45h-2.30v-2.45zM1038.48 276.27a1.15 1.15 0 1 1 2.30 0a1.15 1.15 0 1 1 -2.30 0zM1045.82 276.27a1.15 1.15 0 1 1 2.30 0a1.15 1.15 0 1 1 -2.30 0zM1048.13 276.27v2.45h-2.30v-2.45zM930.72 278.71a1.15 1.15 0 1 1 2.30 0a1.15 1.15 0 1 1 -2.30 0zM931.87 277.56h2.45v2.30h-2.45zM933.02 278.71v2.45h-2.30v-2.45zM933.17 278.71a1.15 1.15 0 1 1 2.30 0a1.15 1.15 0 1 1 -2.30 0zM935.47 278.71v2.45h-2.30v-2.45zM940.52 278.71a1.15 1.15 0 1 1 2.30 0a1.15 1.15 0 1 1 -2.30 0zM941.67 277.56h2.45v2.30h-2.45zM942.82 278.71v2.45h-2.30v-2.45zM942.97 278.71a1.15 1.15 0 1 1 2.30 0a1.15 1.15 0 1 1 -2.30 0zM944.12 277.56h2.45v2.30h-2.45zM945.42 278.71a1.15 1.15 0 1 1 2.30 0a1.15 1.15 0 1 1 -2.30 0zM947.72 278.71v2.45h-2.30v-2.45zM950.31 278.71a1.15 1.15 0 1 1 2.30 0a1.15 1.15 0 1 1 -2.30 0zM951.47 277.56h2.45v2.30h-2.45zM952.62 278.71v2.45h-2.30v-2.45zM952.76 278.71a1.15 1.15 0 1 1 2.30 0a1.15 1.15 0 1 1 -2.30 0zM953.91 277.56h2.45v2.30h-2.45zM955.07 278.71v2.45h-2.30v-2.45zM955.21 278.71a1.15 1.15 0 1 1 2.30 0a1.15 1.15 0 1 1 -2.30 0zM957.51 278.71v2.45h-2.30v-2.45zM960.11 278.71a1.15 1.15 0 1 1 2.30 0a1.15 1.15 0 1 1 -2.30 0zM962.41 278.71v2.45h-2.30v-2.45zM965.01 278.71a1.15 1.15 0 1 1 2.30 0a1.15 1.15 0 1 1 -2.30 0zM966.16 277.56h2.45v2.30h-2.45zM967.31 278.71v2.45h-2.30v-2.45zM967.46 278.71a1.15 1.15 0 1 1 2.30 0a1.15 1.15 0 1 1 -2.30 0zM968.61 277.56h2.45v2.30h-2.45zM969.91 278.71a1.15 1.15 0 1 1 2.30 0a1.15 1.15 0 1 1 -2.30 0zM972.21 278.71v2.45h-2.30v-2.45zM977.25 278.71a1.15 1.15 0 1 1 2.30 0a1.15 1.15 0 1 1 -2.30 0zM979.56 278.71v2.45h-2.30v-2.45zM987.05 278.71a1.15 1.15 0 1 1 2.30 0a1.15 1.15 0 1 1 -2.30 0zM988.20 277.56h2.45v2.30h-2.45zM989.50 278.71a1.15 1.15 0 1 1 2.30 0a1.15 1.15 0 1 1 -2.30 0zM990.65 277.56h2.45v2.30h-2.45zM991.95 278.71a1.15 1.15 0 1 1 2.30 0a1.15 1.15 0 1 1 -2.30 0zM994.25 278.71v2.45h-2.30v-2.45zM996.84 278.71a1.15 1.15 0 1 1 2.30 0a1.15 1.15 0 1 1 -2.30 0zM998.00 277.56h2.45v2.30h-2.45zM999.29 278.71a1.15 1.15 0 1 1 2.30 0a1.15 1.15 0 1 1 -2.30 0zM1000.44 277.56h2.45v2.30h-2.45zM1001.60 278.71v2.45h-2.30v-2.45zM1001.74 278.71a1.15 1.15 0 1 1 2.30 0a1.15 1.15 0 1 1 -2.30 0zM1009.09 278.71a1.15 1.15 0 1 1 2.30 0a1.15 1.15 0 1 1 -2.30 0zM1010.24 277.56h2.45v2.30h-2.45zM1011.54 278.71a1.15 1.15 0 1 1 2.30 0a1.15 1.15 0 1 1 -2.30 0zM1013.84 278.71v2.45h-2.30v-2.45zM1021.33 278.71a1.15 1.15 0 1 1 2.30 0a1.15 1.15 0 1 1 -2.30 0zM1022.49 277.56h2.45v2.30h-2.45zM1023.64 278.71v2.45h-2.30v-2.45zM1023.78 278.71a1.15 1.15 0 1 1 2.30 0a1.15 1.15 0 1 1 -2.30 0zM1028.68 278.71a1.15 1.15 0 1 1 2.30 0a1.15 1.15 0 1 1 -2.30 0zM1029.83 277.56h2.45v2.30h-2.45zM1031.13 278.71a1.15 1.15 0 1 1 2.30 0a1.15 1.15 0 1 1 -2.30 0zM1033.43 278.71v2.45h-2.30v-2.45zM1040.93 278.71a1.15 1.15 0 1 1 2.30 0a1.15 1.15 0 1 1 -2.30 0zM1043.23 278.71v2.45h-2.30v-2.45zM1045.82 278.71a1.15 1.15 0 1 1 2.30 0a1.15 1.15 0 1 1 -2.30 0zM1048.13 278.71v2.45h-2.30v-2.45zM930.72 281.16a1.15 1.15 0 1 1 2.30 0a1.15 1.15 0 1 1 -2.30 0zM931.87 280.01h2.45v2.30h-2.45zM933.02 281.16v2.45h-2.30v-2.45zM933.17 281.16a1.15 1.15 0 1 1 2.30 0a1.15 1.15 0 1 1 -2.30 0zM940.52 281.16a1.15 1.15 0 1 1 2.30 0a1.15 1.15 0 1 1 -2.30 0zM942.82 281.16v2.45h-2.30v-2.45zM945.42 281.16a1.15 1.15 0 1 1 2.30 0a1.15 1.15 0 1 1 -2.30 0zM947.72 281.16v2.45h-2.30v-2.45zM950.31 281.16a1.15 1.15 0 1 1 2.30 0a1.15 1.15 0 1 1 -2.30 0zM951.47 280.01h2.45v2.30h-2.45zM952.62 281.16v2.45h-2.30v-2.45zM952.76 281.16a1.15 1.15 0 1 1 2.30 0a1.15 1.15 0 1 1 -2.30 0zM953.91 280.01h2.45v2.30h-2.45zM955.07 281.16v2.45h-2.30v-2.45zM955.21 281.16a1.15 1.15 0 1 1 2.30 0a1.15 1.15 0 1 1 -2.30 0zM956.36 280.01h2.45v2.30h-2.45zM957.51 281.16v2.45h-2.30v-2.45zM957.66 281.16a1.15 1.15 0 1 1 2.30 0a1.15 1.15 0 1 1 -2.30 0zM958.81 280.01h2.45v2.30h-2.45zM959.96 281.16v2.45h-2.30v-2.45zM960.11 281.16a1.15 1.15 0 1 1 2.30 0a1.15 1.15 0 1 1 -2.30 0zM961.26 280.01h2.45v2.30h-2.45zM962.56 281.16a1.15 1.15 0 1 1 2.30 0a1.15 1.15 0 1 1 -2.30 0zM963.71 280.01h2.45v2.30h-2.45zM965.01 281.16a1.15 1.15 0 1 1 2.30 0a1.15 1.15 0 1 1 -2.30 0zM969.91 281.16a1.15 1.15 0 1 1 2.30 0a1.15 1.15 0 1 1 -2.30 0zM974.80 281.16a1.15 1.15 0 1 1 2.30 0a1.15 1.15 0 1 1 -2.30 0zM975.96 280.01h2.45v2.30h-2.45zM977.11 281.16v2.45h-2.30v-2.45zM977.25 281.16a1.15 1.15 0 1 1 2.30 0a1.15 1.15 0 1 1 -2.30 0zM978.40 280.01h2.45v2.30h-2.45zM979.56 281.16v2.45h-2.30v-2.45zM979.70 281.16a1.15 1.15 0 1 1 2.30 0a1.15 1.15 0 1 1 -2.30 0zM980.85 280.01h2.45v2.30h-2.45zM982.00 281.16v2.45h-2.30v-2.45zM982.15 281.16a1.15 1.15 0 1 1 2.30 0a1.15 1.15 0 1 1 -2.30 0zM983.30 280.01h2.45v2.30h-2.45zM984.45 281.16v2.45h-2.30v-2.45zM984.60 281.16a1.15 1.15 0 1 1 2.30 0a1.15 1.15 0 1 1 -2.30 0zM991.95 281.16a1.15 1.15 0 1 1 2.30 0a1.15 1.15 0 1 1 -2.30 0zM993.10 280.01h2.45v2.30h-2.45zM994.25 281.16v2.45h-2.30v-2.45zM994.40 281.16a1.15 1.15 0 1 1 2.30 0a1.15 1.15 0 1 1 -2.30 0zM996.70 281.16v2.45h-2.30v-2.45zM999.29 281.16a1.15 1.15 0 1 1 2.30 0a1.15 1.15 0 1 1 -2.30 0zM1001.60 281.16v2.45h-2.30v-2.45zM1004.19 281.16a1.15 1.15 0 1 1 2.30 0a1.15 1.15 0 1 1 -2.30 0zM1005.34 280.01h2.45v2.30h-2.45zM1006.49 281.16v2.45h-2.30v-2.45zM1006.64 281.16a1.15 1.15 0 1 1 2.30 0a1.15 1.15 0 1 1 -2.30 0zM1008.94 281.16v2.45h-2.30v-2.45zM1011.54 281.16a1.15 1.15 0 1 1 2.30 0a1.15 1.15 0 1 1 -2.30 0zM1021.33 281.16a1.15 1.15 0 1 1 2.30 0a1.15 1.15 0 1 1 -2.30 0zM1031.13 281.16a1.15 1.15 0 1 1 2.30 0a1.15 1.15 0 1 1 -2.30 0zM1032.28 280.01h2.45v2.30h-2.45zM1033.58 281.16a1.15 1.15 0 1 1 2.30 0a1.15 1.15 0 1 1 -2.30 0zM1034.73 280.01h2.45v2.30h-2.45zM1035.88 281.16v2.45h-2.30v-2.45zM1036.03 281.16a1.15 1.15 0 1 1 2.30 0a1.15 1.15 0 1 1 -2.30 0zM1037.18 280.01h2.45v2.30h-2.45zM1038.48 281.16a1.15 1.15 0 1 1 2.30 0a1.15 1.15 0 1 1 -2.30 0zM1039.63 280.01h2.45v2.30h-2.45zM1040.93 281.16a1.15 1.15 0 1 1 2.30 0a1.15 1.15 0 1 1 -2.30 0zM1043.23 281.16v2.45h-2.30v-2.45zM1045.82 281.16a1.15 1.15 0 1 1 2.30 0a1.15 1.15 0 1 1 -2.30 0zM928.27 283.61a1.15 1.15 0 1 1 2.30 0a1.15 1.15 0 1 1 -2.30 0zM929.42 282.46h2.45v2.30h-2.45zM930.72 283.61a1.15 1.15 0 1 1 2.30 0a1.15 1.15 0 1 1 -2.30 0zM940.52 283.61a1.15 1.15 0 1 1 2.30 0a1.15 1.15 0 1 1 -2.30 0zM941.67 282.46h2.45v2.30h-2.45zM942.97 283.61a1.15 1.15 0 1 1 2.30 0a1.15 1.15 0 1 1 -2.30 0zM944.12 282.46h2.45v2.30h-2.45zM945.42 283.61a1.15 1.15 0 1 1 2.30 0a1.15 1.15 0 1 1 -2.30 0zM946.57 282.46h2.45v2.30h-2.45zM947.87 283.61a1.15 1.15 0 1 1 2.30 0a1.15 1.15 0 1 1 -2.30 0zM949.02 282.46h2.45v2.30h-2.45zM950.31 283.61a1.15 1.15 0 1 1 2.30 0a1.15 1.15 0 1 1 -2.30 0zM951.47 282.46h2.45v2.30h-2.45zM952.76 283.61a1.15 1.15 0 1 1 2.30 0a1.15 1.15 0 1 1 -2.30 0zM953.91 282.46h2.45v2.30h-2.45zM955.21 283.61a1.15 1.15 0 1 1 2.30 0a1.15 1.15 0 1 1 -2.30 0zM956.36 282.46h2.45v2.30h-2.45zM957.66 283.61a1.15 1.15 0 1 1 2.30 0a1.15 1.15 0 1 1 -2.30 0zM967.46 283.61a1.15 1.15 0 1 1 2.30 0a1.15 1.15 0 1 1 -2.30 0zM969.76 283.61v2.45h-2.30v-2.45zM972.36 283.61a1.15 1.15 0 1 1 2.30 0a1.15 1.15 0 1 1 -2.30 0zM973.51 282.46h2.45v2.30h-2.45zM974.66 283.61v2.45h-2.30v-2.45zM974.80 283.61a1.15 1.15 0 1 1 2.30 0a1.15 1.15 0 1 1 -2.30 0zM975.96 282.46h2.45v2.30h-2.45zM977.25 283.61a1.15 1.15 0 1 1 2.30 0a1.15 1.15 0 1 1 -2.30 0zM978.40 282.46h2.45v2.30h-2.45zM979.70 283.61a1.15 1.15 0 1 1 2.30 0a1.15 1.15 0 1 1 -2.30 0zM980.85 282.46h2.45v2.30h-2.45zM982.15 283.61a1.15 1.15 0 1 1 2.30 0a1.15 1.15 0 1 1 -2.30 0zM987.05 283.61a1.15 1.15 0 1 1 2.30 0a1.15 1.15 0 1 1 -2.30 0zM989.35 283.61v2.45h-2.30v-2.45zM991.95 283.61a1.15 1.15 0 1 1 2.30 0a1.15 1.15 0 1 1 -2.30 0zM993.10 282.46h2.45v2.30h-2.45zM994.40 283.61a1.15 1.15 0 1 1 2.30 0a1.15 1.15 0 1 1 -2.30 0zM995.55 282.46h2.45v2.30h-2.45zM996.84 283.61a1.15 1.15 0 1 1 2.30 0a1.15 1.15 0 1 1 -2.30 0zM998.00 282.46h2.45v2.30h-2.45zM999.29 283.61a1.15 1.15 0 1 1 2.30 0a1.15 1.15 0 1 1 -2.30 0zM1000.44 282.46h2.45v2.30h-2.45zM1001.74 283.61a1.15 1.15 0 1 1 2.30 0a1.15 1.15 0 1 1 -2.30 0zM1002.89 282.46h2.45v2.30h-2.45zM1004.19 283.61a1.15 1.15 0 1 1 2.30 0a1.15 1.15 0 1 1 -2.30 0zM1005.34 282.46h2.45v2.30h-2.45zM1006.49 283.61v2.45h-2.30v-2.45zM1006.64 283.61a1.15 1.15 0 1 1 2.30 0a1.15 1.15 0 1 1 -2.30 0zM1007.79 282.46h2.45v2.30h-2.45zM1009.09 283.61a1.15 1.15 0 1 1 2.30 0a1.15 1.15 0 1 1 -2.30 0zM1011.39 283.61v2.45h-2.30v-2.45zM1026.23 283.61a1.15 1.15 0 1 1 2.30 0a1.15 1.15 0 1 1 -2.30 0zM1027.38 282.46h2.45v2.30h-2.45zM1028.53 283.61v2.45h-2.30v-2.45zM1028.68 283.61a1.15 1.15 0 1 1 2.30 0a1.15 1.15 0 1 1 -2.30 0zM1030.98 283.61v2.45h-2.30v-2.45zM1033.58 283.61a1.15 1.15 0 1 1 2.30 0a1.15 1.15 0 1 1 -2.30 0zM1040.93 283.61a1.15 1.15 0 1 1 2.30 0a1.15 1.15 0 1 1 -2.30 0zM935.62 286.06a1.15 1.15 0 1 1 2.30 0a1.15 1.15 0 1 1 -2.30 0zM962.56 286.06a1.15 1.15 0 1 1 2.30 0a1.15 1.15 0 1 1 -2.30 0zM963.71 284.91h2.45v2.30h-2.45zM964.86 286.06v2.45h-2.30v-2.45zM965.01 286.06a1.15 1.15 0 1 1 2.30 0a1.15 1.15 0 1 1 -2.30 0zM966.16 284.91h2.45v2.30h-2.45zM967.31 286.06v2.45h-2.30v-2.45zM967.46 286.06a1.15 1.15 0 1 1 2.30 0a1.15 1.15 0 1 1 -2.30 0zM968.61 284.91h2.45v2.30h-2.45zM969.91 286.06a1.15 1.15 0 1 1 2.30 0a1.15 1.15 0 1 1 -2.30 0zM971.06 284.91h2.45v2.30h-2.45zM972.21 286.06v2.45h-2.30v-2.45zM972.36 286.06a1.15 1.15 0 1 1 2.30 0a1.15 1.15 0 1 1 -2.30 0zM987.05 286.06a1.15 1.15 0 1 1 2.30 0a1.15 1.15 0 1 1 -2.30 0zM988.20 284.91h2.45v2.30h-2.45zM989.35 286.06v2.45h-2.30v-2.45zM989.50 286.06a1.15 1.15 0 1 1 2.30 0a1.15 1.15 0 1 1 -2.30 0zM991.80 286.06v2.45h-2.30v-2.45zM1004.19 286.06a1.15 1.15 0 1 1 2.30 0a1.15 1.15 0 1 1 -2.30 0zM1009.09 286.06a1.15 1.15 0 1 1 2.30 0a1.15 1.15 0 1 1 -2.30 0zM1010.24 284.91h2.45v2.30h-2.45zM1011.39 286.06v2.45h-2.30v-2.45zM1011.54 286.06a1.15 1.15 0 1 1 2.30 0a1.15 1.15 0 1 1 -2.30 0zM1012.69 284.91h2.45v2.30h-2.45zM1013.99 286.06a1.15 1.15 0 1 1 2.30 0a1.15 1.15 0 1 1 -2.30 0zM1018.89 286.06a1.15 1.15 0 1 1 2.30 0a1.15 1.15 0 1 1 -2.30 0zM1026.23 286.06a1.15 1.15 0 1 1 2.30 0a1.15 1.15 0 1 1 -2.30 0zM1027.38 284.91h2.45v2.30h-2.45zM1028.53 286.06v2.45h-2.30v-2.45zM1028.68 286.06a1.15 1.15 0 1 1 2.30 0a1.15 1.15 0 1 1 -2.30 0zM1029.83 284.91h2.45v2.30h-2.45zM1030.98 286.06v2.45h-2.30v-2.45zM1031.13 286.06a1.15 1.15 0 1 1 2.30 0a1.15 1.15 0 1 1 -2.30 0zM1033.43 286.06v2.45h-2.30v-2.45zM1043.38 286.06a1.15 1.15 0 1 1 2.30 0a1.15 1.15 0 1 1 -2.30 0zM1044.53 284.91h2.45v2.30h-2.45zM1045.68 286.06v2.45h-2.30v-2.45zM1045.82 286.06a1.15 1.15 0 1 1 2.30 0a1.15 1.15 0 1 1 -2.30 0zM1048.13 286.06v2.45h-2.30v-2.45zM928.27 288.51a1.15 1.15 0 1 1 2.30 0a1.15 1.15 0 1 1 -2.30 0zM933.17 288.51a1.15 1.15 0 1 1 2.30 0a1.15 1.15 0 1 1 -2.30 0zM938.07 288.51a1.15 1.15 0 1 1 2.30 0a1.15 1.15 0 1 1 -2.30 0zM939.22 287.36h2.45v2.30h-2.45zM940.37 288.51v2.45h-2.30v-2.45zM940.52 288.51a1.15 1.15 0 1 1 2.30 0a1.15 1.15 0 1 1 -2.30 0zM941.67 287.36h2.45v2.30h-2.45zM942.97 288.51a1.15 1.15 0 1 1 2.30 0a1.15 1.15 0 1 1 -2.30 0zM944.12 287.36h2.45v2.30h-2.45zM945.42 288.51a1.15 1.15 0 1 1 2.30 0a1.15 1.15 0 1 1 -2.30 0zM955.21 288.51a1.15 1.15 0 1 1 2.30 0a1.15 1.15 0 1 1 -2.30 0zM957.51 288.51v2.45h-2.30v-2.45zM960.11 288.51a1.15 1.15 0 1 1 2.30 0a1.15 1.15 0 1 1 -2.30 0zM961.26 287.36h2.45v2.30h-2.45zM962.56 288.51a1.15 1.15 0 1 1 2.30 0a1.15 1.15 0 1 1 -2.30 0zM963.71 287.36h2.45v2.30h-2.45zM964.86 288.51v2.45h-2.30v-2.45zM965.01 288.51a1.15 1.15 0 1 1 2.30 0a1.15 1.15 0 1 1 -2.30 0zM967.31 288.51v2.45h-2.30v-2.45zM969.91 288.51a1.15 1.15 0 1 1 2.30 0a1.15 1.15 0 1 1 -2.30 0zM972.21 288.51v2.45h-2.30v-2.45zM977.25 288.51a1.15 1.15 0 1 1 2.30 0a1.15 1.15 0 1 1 -2.30 0zM978.40 287.36h2.45v2.30h-2.45zM979.56 288.51v2.45h-2.30v-2.45zM979.70 288.51a1.15 1.15 0 1 1 2.30 0a1.15 1.15 0 1 1 -2.30 0zM987.05 288.51a1.15 1.15 0 1 1 2.30 0a1.15 1.15 0 1 1 -2.30 0zM988.20 287.36h2.45v2.30h-2.45zM989.50 288.51a1.15 1.15 0 1 1 2.30 0a1.15 1.15 0 1 1 -2.30 0zM990.65 287.36h2.45v2.30h-2.45zM991.80 288.51v2.45h-2.30v-2.45zM991.95 288.51a1.15 1.15 0 1 1 2.30 0a1.15 1.15 0 1 1 -2.30 0zM994.25 288.51v2.45h-2.30v-2.45zM996.84 288.51a1.15 1.15 0 1 1 2.30 0a1.15 1.15 0 1 1 -2.30 0zM1001.74 288.51a1.15 1.15 0 1 1 2.30 0a1.15 1.15 0 1 1 -2.30 0zM1009.09 288.51a1.15 1.15 0 1 1 2.30 0a1.15 1.15 0 1 1 -2.30 0zM1021.33 288.51a1.15 1.15 0 1 1 2.30 0a1.15 1.15 0 1 1 -2.30 0zM1026.23 288.51a1.15 1.15 0 1 1 2.30 0a1.15 1.15 0 1 1 -2.30 0zM1027.38 287.36h2.45v2.30h-2.45zM1028.53 288.51v2.45h-2.30v-2.45zM1028.68 288.51a1.15 1.15 0 1 1 2.30 0a1.15 1.15 0 1 1 -2.30 0zM1029.83 287.36h2.45v2.30h-2.45zM1030.98 288.51v2.45h-2.30v-2.45zM1031.13 288.51a1.15 1.15 0 1 1 2.30 0a1.15 1.15 0 1 1 -2.30 0zM1032.28 287.36h2.45v2.30h-2.45zM1033.58 288.51a1.15 1.15 0 1 1 2.30 0a1.15 1.15 0 1 1 -2.30 0zM1034.73 287.36h2.45v2.30h-2.45zM1035.88 288.51v2.45h-2.30v-2.45zM1036.03 288.51a1.15 1.15 0 1 1 2.30 0a1.15 1.15 0 1 1 -2.30 0zM1037.18 287.36h2.45v2.30h-2.45zM1038.33 288.51v2.45h-2.30v-2.45zM1038.48 288.51a1.15 1.15 0 1 1 2.30 0a1.15 1.15 0 1 1 -2.30 0zM1039.63 287.36h2.45v2.30h-2.45zM1040.78 288.51v2.45h-2.30v-2.45zM1040.93 288.51a1.15 1.15 0 1 1 2.30 0a1.15 1.15 0 1 1 -2.30 0zM1042.08 287.36h2.45v2.30h-2.45zM1043.23 288.51v2.45h-2.30v-2.45zM1043.38 288.51a1.15 1.15 0 1 1 2.30 0a1.15 1.15 0 1 1 -2.30 0zM1044.53 287.36h2.45v2.30h-2.45zM1045.82 288.51a1.15 1.15 0 1 1 2.30 0a1.15 1.15 0 1 1 -2.30 0zM930.72 290.96a1.15 1.15 0 1 1 2.30 0a1.15 1.15 0 1 1 -2.30 0zM938.07 290.96a1.15 1.15 0 1 1 2.30 0a1.15 1.15 0 1 1 -2.30 0zM940.37 290.96v2.45h-2.30v-2.45zM950.31 290.96a1.15 1.15 0 1 1 2.30 0a1.15 1.15 0 1 1 -2.30 0zM951.47 289.81h2.45v2.30h-2.45zM952.76 290.96a1.15 1.15 0 1 1 2.30 0a1.15 1.15 0 1 1 -2.30 0zM953.91 289.81h2.45v2.30h-2.45zM955.07 290.96v2.45h-2.30v-2.45zM955.21 290.96a1.15 1.15 0 1 1 2.30 0a1.15 1.15 0 1 1 -2.30 0zM957.51 290.96v2.45h-2.30v-2.45zM962.56 290.96a1.15 1.15 0 1 1 2.30 0a1.15 1.15 0 1 1 -2.30 0zM963.71 289.81h2.45v2.30h-2.45zM964.86 290.96v2.45h-2.30v-2.45zM965.01 290.96a1.15 1.15 0 1 1 2.30 0a1.15 1.15 0 1 1 -2.30 0zM966.16 289.81h2.45v2.30h-2.45zM967.31 290.96v2.45h-2.30v-2.45zM967.46 290.96a1.15 1.15 0 1 1 2.30 0a1.15 1.15 0 1 1 -2.30 0zM968.61 289.81h2.45v2.30h-2.45zM969.76 290.96v2.45h-2.30v-2.45zM969.91 290.96a1.15 1.15 0 1 1 2.30 0a1.15 1.15 0 1 1 -2.30 0zM971.06 289.81h2.45v2.30h-2.45zM972.21 290.96v2.45h-2.30v-2.45zM972.36 290.96a1.15 1.15 0 1 1 2.30 0a1.15 1.15 0 1 1 -2.30 0zM974.66 290.96v2.45h-2.30v-2.45zM977.25 290.96a1.15 1.15 0 1 1 2.30 0a1.15 1.15 0 1 1 -2.30 0zM979.56 290.96v2.45h-2.30v-2.45zM982.15 290.96a1.15 1.15 0 1 1 2.30 0a1.15 1.15 0 1 1 -2.30 0zM983.30 289.81h2.45v2.30h-2.45zM984.60 290.96a1.15 1.15 0 1 1 2.30 0a1.15 1.15 0 1 1 -2.30 0zM989.50 290.96a1.15 1.15 0 1 1 2.30 0a1.15 1.15 0 1 1 -2.30 0zM990.65 289.81h2.45v2.30h-2.45zM991.80 290.96v2.45h-2.30v-2.45zM991.95 290.96a1.15 1.15 0 1 1 2.30 0a1.15 1.15 0 1 1 -2.30 0zM994.25 290.96v2.45h-2.30v-2.45zM1013.99 290.96a1.15 1.15 0 1 1 2.30 0a1.15 1.15 0 1 1 -2.30 0zM1018.89 290.96a1.15 1.15 0 1 1 2.30 0a1.15 1.15 0 1 1 -2.30 0zM1021.19 290.96v2.45h-2.30v-2.45zM1026.23 290.96a1.15 1.15 0 1 1 2.30 0a1.15 1.15 0 1 1 -2.30 0zM1027.38 289.81h2.45v2.30h-2.45zM1028.53 290.96v2.45h-2.30v-2.45zM1028.68 290.96a1.15 1.15 0 1 1 2.30 0a1.15 1.15 0 1 1 -2.30 0zM1030.98 290.96v2.45h-2.30v-2.45zM1033.58 290.96a1.15 1.15 0 1 1 2.30 0a1.15 1.15 0 1 1 -2.30 0zM1034.73 289.81h2.45v2.30h-2.45zM1036.03 290.96a1.15 1.15 0 1 1 2.30 0a1.15 1.15 0 1 1 -2.30 0zM1037.18 289.81h2.45v2.30h-2.45zM1038.48 290.96a1.15 1.15 0 1 1 2.30 0a1.15 1.15 0 1 1 -2.30 0zM1039.63 289.81h2.45v2.30h-2.45zM1040.78 290.96v2.45h-2.30v-2.45zM1040.93 290.96a1.15 1.15 0 1 1 2.30 0a1.15 1.15 0 1 1 -2.30 0zM1043.23 290.96v2.45h-2.30v-2.45zM928.27 293.41a1.15 1.15 0 1 1 2.30 0a1.15 1.15 0 1 1 -2.30 0zM930.58 293.41v2.45h-2.30v-2.45zM933.17 293.41a1.15 1.15 0 1 1 2.30 0a1.15 1.15 0 1 1 -2.30 0zM935.47 293.41v2.45h-2.30v-2.45zM938.07 293.41a1.15 1.15 0 1 1 2.30 0a1.15 1.15 0 1 1 -2.30 0zM939.22 292.26h2.45v2.30h-2.45zM940.52 293.41a1.15 1.15 0 1 1 2.30 0a1.15 1.15 0 1 1 -2.30 0zM941.67 292.26h2.45v2.30h-2.45zM942.97 293.41a1.15 1.15 0 1 1 2.30 0a1.15 1.15 0 1 1 -2.30 0zM944.12 292.26h2.45v2.30h-2.45zM945.42 293.41a1.15 1.15 0 1 1 2.30 0a1.15 1.15 0 1 1 -2.30 0zM946.57 292.26h2.45v2.30h-2.45zM947.87 293.41a1.15 1.15 0 1 1 2.30 0a1.15 1.15 0 1 1 -2.30 0zM952.76 293.41a1.15 1.15 0 1 1 2.30 0a1.15 1.15 0 1 1 -2.30 0zM953.91 292.26h2.45v2.30h-2.45zM955.07 293.41v2.45h-2.30v-2.45zM955.21 293.41a1.15 1.15 0 1 1 2.30 0a1.15 1.15 0 1 1 -2.30 0zM957.51 293.41v2.45h-2.30v-2.45zM962.56 293.41a1.15 1.15 0 1 1 2.30 0a1.15 1.15 0 1 1 -2.30 0zM963.71 292.26h2.45v2.30h-2.45zM965.01 293.41a1.15 1.15 0 1 1 2.30 0a1.15 1.15 0 1 1 -2.30 0zM966.16 292.26h2.45v2.30h-2.45zM967.46 293.41a1.15 1.15 0 1 1 2.30 0a1.15 1.15 0 1 1 -2.30 0zM968.61 292.26h2.45v2.30h-2.45zM969.91 293.41a1.15 1.15 0 1 1 2.30 0a1.15 1.15 0 1 1 -2.30 0zM971.06 292.26h2.45v2.30h-2.45zM972.36 293.41a1.15 1.15 0 1 1 2.30 0a1.15 1.15 0 1 1 -2.30 0zM973.51 292.26h2.45v2.30h-2.45zM974.80 293.41a1.15 1.15 0 1 1 2.30 0a1.15 1.15 0 1 1 -2.30 0zM975.96 292.26h2.45v2.30h-2.45zM977.25 293.41a1.15 1.15 0 1 1 2.30 0a1.15 1.15 0 1 1 -2.30 0zM978.40 292.26h2.45v2.30h-2.45zM979.70 293.41a1.15 1.15 0 1 1 2.30 0a1.15 1.15 0 1 1 -2.30 0zM989.50 293.41a1.15 1.15 0 1 1 2.30 0a1.15 1.15 0 1 1 -2.30 0zM990.65 292.26h2.45v2.30h-2.45zM991.95 293.41a1.15 1.15 0 1 1 2.30 0a1.15 1.15 0 1 1 -2.30 0zM996.84 293.41a1.15 1.15 0 1 1 2.30 0a1.15 1.15 0 1 1 -2.30 0zM998.00 292.26h2.45v2.30h-2.45zM999.29 293.41a1.15 1.15 0 1 1 2.30 0a1.15 1.15 0 1 1 -2.30 0zM1000.44 292.26h2.45v2.30h-2.45zM1001.74 293.41a1.15 1.15 0 1 1 2.30 0a1.15 1.15 0 1 1 -2.30 0zM1002.89 292.26h2.45v2.30h-2.45zM1004.19 293.41a1.15 1.15 0 1 1 2.30 0a1.15 1.15 0 1 1 -2.30 0zM1009.09 293.41a1.15 1.15 0 1 1 2.30 0a1.15 1.15 0 1 1 -2.30 0zM1018.89 293.41a1.15 1.15 0 1 1 2.30 0a1.15 1.15 0 1 1 -2.30 0zM1020.04 292.26h2.45v2.30h-2.45zM1021.19 293.41v2.45h-2.30v-2.45zM1021.33 293.41a1.15 1.15 0 1 1 2.30 0a1.15 1.15 0 1 1 -2.30 0zM1022.49 292.26h2.45v2.30h-2.45zM1023.64 293.41v2.45h-2.30v-2.45zM1023.78 293.41a1.15 1.15 0 1 1 2.30 0a1.15 1.15 0 1 1 -2.30 0zM1024.93 292.26h2.45v2.30h-2.45zM1026.09 293.41v2.45h-2.30v-2.45zM1026.23 293.41a1.15 1.15 0 1 1 2.30 0a1.15 1.15 0 1 1 -2.30 0zM1027.38 292.26h2.45v2.30h-2.45zM1028.68 293.41a1.15 1.15 0 1 1 2.30 0a1.15 1.15 0 1 1 -2.30 0zM1038.48 293.41a1.15 1.15 0 1 1 2.30 0a1.15 1.15 0 1 1 -2.30 0zM1039.63 292.26h2.45v2.30h-2.45zM1040.78 293.41v2.45h-2.30v-2.45zM1040.93 293.41a1.15 1.15 0 1 1 2.30 0a1.15 1.15 0 1 1 -2.30 0zM928.27 295.86a1.15 1.15 0 1 1 2.30 0a1.15 1.15 0 1 1 -2.30 0zM930.58 295.86v2.45h-2.30v-2.45zM933.17 295.86a1.15 1.15 0 1 1 2.30 0a1.15 1.15 0 1 1 -2.30 0zM934.32 294.71h2.45v2.30h-2.45zM935.62 295.86a1.15 1.15 0 1 1 2.30 0a1.15 1.15 0 1 1 -2.30 0zM937.92 295.86v2.45h-2.30v-2.45zM950.31 295.86a1.15 1.15 0 1 1 2.30 0a1.15 1.15 0 1 1 -2.30 0zM951.47 294.71h2.45v2.30h-2.45zM952.62 295.86v2.45h-2.30v-2.45zM952.76 295.86a1.15 1.15 0 1 1 2.30 0a1.15 1.15 0 1 1 -2.30 0zM953.91 294.71h2.45v2.30h-2.45zM955.07 295.86v2.45h-2.30v-2.45zM955.21 295.86a1.15 1.15 0 1 1 2.30 0a1.15 1.15 0 1 1 -2.30 0zM957.51 295.86v2.45h-2.30v-2.45zM1011.54 295.86a1.15 1.15 0 1 1 2.30 0a1.15 1.15 0 1 1 -2.30 0zM1012.69 294.71h2.45v2.30h-2.45zM1013.84 295.86v2.45h-2.30v-2.45zM1013.99 295.86a1.15 1.15 0 1 1 2.30 0a1.15 1.15 0 1 1 -2.30 0zM1018.89 295.86a1.15 1.15 0 1 1 2.30 0a1.15 1.15 0 1 1 -2.30 0zM1020.04 294.71h2.45v2.30h-2.45zM1021.19 295.86v2.45h-2.30v-2.45zM1021.33 295.86a1.15 1.15 0 1 1 2.30 0a1.15 1.15 0 1 1 -2.30 0zM1022.49 294.71h2.45v2.30h-2.45zM1023.64 295.86v2.45h-2.30v-2.45zM1023.78 295.86a1.15 1.15 0 1 1 2.30 0a1.15 1.15 0 1 1 -2.30 0zM1026.09 295.86v2.45h-2.30v-2.45zM1033.58 295.86a1.15 1.15 0 1 1 2.30 0a1.15 1.15 0 1 1 -2.30 0zM1034.73 294.71h2.45v2.30h-2.45zM1036.03 295.86a1.15 1.15 0 1 1 2.30 0a1.15 1.15 0 1 1 -2.30 0zM1037.18 294.71h2.45v2.30h-2.45zM1038.48 295.86a1.15 1.15 0 1 1 2.30 0a1.15 1.15 0 1 1 -2.30 0zM1040.78 295.86v2.45h-2.30v-2.45zM1045.82 295.86a1.15 1.15 0 1 1 2.30 0a1.15 1.15 0 1 1 -2.30 0zM928.27 298.31a1.15 1.15 0 1 1 2.30 0a1.15 1.15 0 1 1 -2.30 0zM929.42 297.16h2.45v2.30h-2.45zM930.58 298.31v2.45h-2.30v-2.45zM930.72 298.31a1.15 1.15 0 1 1 2.30 0a1.15 1.15 0 1 1 -2.30 0zM935.62 298.31a1.15 1.15 0 1 1 2.30 0a1.15 1.15 0 1 1 -2.30 0zM936.77 297.16h2.45v2.30h-2.45zM937.92 298.31v2.45h-2.30v-2.45zM938.07 298.31a1.15 1.15 0 1 1 2.30 0a1.15 1.15 0 1 1 -2.30 0zM940.37 298.31v2.45h-2.30v-2.45zM942.97 298.31a1.15 1.15 0 1 1 2.30 0a1.15 1.15 0 1 1 -2.30 0zM947.87 298.31a1.15 1.15 0 1 1 2.30 0a1.15 1.15 0 1 1 -2.30 0zM949.02 297.16h2.45v2.30h-2.45zM950.17 298.31v2.45h-2.30v-2.45zM950.31 298.31a1.15 1.15 0 1 1 2.30 0a1.15 1.15 0 1 1 -2.30 0zM951.47 297.16h2.45v2.30h-2.45zM952.62 298.31v2.45h-2.30v-2.45zM952.76 298.31a1.15 1.15 0 1 1 2.30 0a1.15 1.15 0 1 1 -2.30 0zM953.91 297.16h2.45v2.30h-2.45zM955.21 298.31a1.15 1.15 0 1 1 2.30 0a1.15 1.15 0 1 1 -2.30 0zM957.51 298.31v2.45h-2.30v-2.45zM960.11 298.31a1.15 1.15 0 1 1 2.30 0a1.15 1.15 0 1 1 -2.30 0zM962.41 298.31v2.45h-2.30v-2.45zM1006.64 298.31a1.15 1.15 0 1 1 2.30 0a1.15 1.15 0 1 1 -2.30 0zM1007.79 297.16h2.45v2.30h-2.45zM1009.09 298.31a1.15 1.15 0 1 1 2.30 0a1.15 1.15 0 1 1 -2.30 0zM1010.24 297.16h2.45v2.30h-2.45zM1011.39 298.31v2.45h-2.30v-2.45zM1011.54 298.31a1.15 1.15 0 1 1 2.30 0a1.15 1.15 0 1 1 -2.30 0zM1016.44 298.31a1.15 1.15 0 1 1 2.30 0a1.15 1.15 0 1 1 -2.30 0zM1017.59 297.16h2.45v2.30h-2.45zM1018.74 298.31v2.45h-2.30v-2.45zM1018.89 298.31a1.15 1.15 0 1 1 2.30 0a1.15 1.15 0 1 1 -2.30 0zM1020.04 297.16h2.45v2.30h-2.45zM1021.19 298.31v2.45h-2.30v-2.45zM1021.33 298.31a1.15 1.15 0 1 1 2.30 0a1.15 1.15 0 1 1 -2.30 0zM1022.49 297.16h2.45v2.30h-2.45zM1023.78 298.31a1.15 1.15 0 1 1 2.30 0a1.15 1.15 0 1 1 -2.30 0zM1038.48 298.31a1.15 1.15 0 1 1 2.30 0a1.15 1.15 0 1 1 -2.30 0zM1039.63 297.16h2.45v2.30h-2.45zM1040.93 298.31a1.15 1.15 0 1 1 2.30 0a1.15 1.15 0 1 1 -2.30 0zM928.27 300.76a1.15 1.15 0 1 1 2.30 0a1.15 1.15 0 1 1 -2.30 0zM930.58 300.76v2.45h-2.30v-2.45zM933.17 300.76a1.15 1.15 0 1 1 2.30 0a1.15 1.15 0 1 1 -2.30 0zM934.32 299.60h2.45v2.30h-2.45zM935.47 300.76v2.45h-2.30v-2.45zM935.62 300.76a1.15 1.15 0 1 1 2.30 0a1.15 1.15 0 1 1 -2.30 0zM936.77 299.60h2.45v2.30h-2.45zM938.07 300.76a1.15 1.15 0 1 1 2.30 0a1.15 1.15 0 1 1 -2.30 0zM939.22 299.60h2.45v2.30h-2.45zM940.52 300.76a1.15 1.15 0 1 1 2.30 0a1.15 1.15 0 1 1 -2.30 0zM942.82 300.76v2.45h-2.30v-2.45zM945.42 300.76a1.15 1.15 0 1 1 2.30 0a1.15 1.15 0 1 1 -2.30 0zM946.57 299.60h2.45v2.30h-2.45zM947.72 300.76v2.45h-2.30v-2.45zM947.87 300.76a1.15 1.15 0 1 1 2.30 0a1.15 1.15 0 1 1 -2.30 0zM949.02 299.60h2.45v2.30h-2.45zM950.17 300.76v2.45h-2.30v-2.45zM950.31 300.76a1.15 1.15 0 1 1 2.30 0a1.15 1.15 0 1 1 -2.30 0zM952.62 300.76v2.45h-2.30v-2.45zM955.21 300.76a1.15 1.15 0 1 1 2.30 0a1.15 1.15 0 1 1 -2.30 0zM957.51 300.76v2.45h-2.30v-2.45zM960.11 300.76a1.15 1.15 0 1 1 2.30 0a1.15 1.15 0 1 1 -2.30 0zM961.26 299.60h2.45v2.30h-2.45zM962.56 300.76a1.15 1.15 0 1 1 2.30 0a1.15 1.15 0 1 1 -2.30 0zM1009.09 300.76a1.15 1.15 0 1 1 2.30 0a1.15 1.15 0 1 1 -2.30 0zM1011.39 300.76v2.45h-2.30v-2.45zM1016.44 300.76a1.15 1.15 0 1 1 2.30 0a1.15 1.15 0 1 1 -2.30 0zM1017.59 299.60h2.45v2.30h-2.45zM1018.89 300.76a1.15 1.15 0 1 1 2.30 0a1.15 1.15 0 1 1 -2.30 0zM1021.19 300.76v2.45h-2.30v-2.45zM1026.23 300.76a1.15 1.15 0 1 1 2.30 0a1.15 1.15 0 1 1 -2.30 0zM1031.13 300.76a1.15 1.15 0 1 1 2.30 0a1.15 1.15 0 1 1 -2.30 0zM1032.28 299.60h2.45v2.30h-2.45zM1033.58 300.76a1.15 1.15 0 1 1 2.30 0a1.15 1.15 0 1 1 -2.30 0zM1034.73 299.60h2.45v2.30h-2.45zM1036.03 300.76a1.15 1.15 0 1 1 2.30 0a1.15 1.15 0 1 1 -2.30 0zM928.27 303.20a1.15 1.15 0 1 1 2.30 0a1.15 1.15 0 1 1 -2.30 0zM929.42 302.05h2.45v2.30h-2.45zM930.58 303.20v2.45h-2.30v-2.45zM930.72 303.20a1.15 1.15 0 1 1 2.30 0a1.15 1.15 0 1 1 -2.30 0zM931.87 302.05h2.45v2.30h-2.45zM933.17 303.20a1.15 1.15 0 1 1 2.30 0a1.15 1.15 0 1 1 -2.30 0zM935.47 303.20v2.45h-2.30v-2.45zM940.52 303.20a1.15 1.15 0 1 1 2.30 0a1.15 1.15 0 1 1 -2.30 0zM941.67 302.05h2.45v2.30h-2.45zM942.82 303.20v2.45h-2.30v-2.45zM942.97 303.20a1.15 1.15 0 1 1 2.30 0a1.15 1.15 0 1 1 -2.30 0zM944.12 302.05h2.45v2.30h-2.45zM945.42 303.20a1.15 1.15 0 1 1 2.30 0a1.15 1.15 0 1 1 -2.30 0zM946.57 302.05h2.45v2.30h-2.45zM947.87 303.20a1.15 1.15 0 1 1 2.30 0a1.15 1.15 0 1 1 -2.30 0zM949.02 302.05h2.45v2.30h-2.45zM950.31 303.20a1.15 1.15 0 1 1 2.30 0a1.15 1.15 0 1 1 -2.30 0zM952.62 303.20v2.45h-2.30v-2.45zM955.21 303.20a1.15 1.15 0 1 1 2.30 0a1.15 1.15 0 1 1 -2.30 0zM1006.64 303.20a1.15 1.15 0 1 1 2.30 0a1.15 1.15 0 1 1 -2.30 0zM1007.79 302.05h2.45v2.30h-2.45zM1008.94 303.20v2.45h-2.30v-2.45zM1009.09 303.20a1.15 1.15 0 1 1 2.30 0a1.15 1.15 0 1 1 -2.30 0zM1010.24 302.05h2.45v2.30h-2.45zM1011.54 303.20a1.15 1.15 0 1 1 2.30 0a1.15 1.15 0 1 1 -2.30 0zM1012.69 302.05h2.45v2.30h-2.45zM1013.99 303.20a1.15 1.15 0 1 1 2.30 0a1.15 1.15 0 1 1 -2.30 0zM1016.29 303.20v2.45h-2.30v-2.45zM1018.89 303.20a1.15 1.15 0 1 1 2.30 0a1.15 1.15 0 1 1 -2.30 0zM1020.04 302.05h2.45v2.30h-2.45zM1021.33 303.20a1.15 1.15 0 1 1 2.30 0a1.15 1.15 0 1 1 -2.30 0zM1022.49 302.05h2.45v2.30h-2.45zM1023.64 303.20v2.45h-2.30v-2.45zM1023.78 303.20a1.15 1.15 0 1 1 2.30 0a1.15 1.15 0 1 1 -2.30 0zM1026.09 303.20v2.45h-2.30v-2.45zM1038.48 303.20a1.15 1.15 0 1 1 2.30 0a1.15 1.15 0 1 1 -2.30 0zM1040.78 303.20v2.45h-2.30v-2.45zM1043.38 303.20a1.15 1.15 0 1 1 2.30 0a1.15 1.15 0 1 1 -2.30 0zM1045.68 303.20v2.45h-2.30v-2.45zM928.27 305.65a1.15 1.15 0 1 1 2.30 0a1.15 1.15 0 1 1 -2.30 0zM930.58 305.65v2.45h-2.30v-2.45zM933.17 305.65a1.15 1.15 0 1 1 2.30 0a1.15 1.15 0 1 1 -2.30 0zM934.32 304.50h2.45v2.30h-2.45zM935.47 305.65v2.45h-2.30v-2.45zM935.62 305.65a1.15 1.15 0 1 1 2.30 0a1.15 1.15 0 1 1 -2.30 0zM936.77 304.50h2.45v2.30h-2.45zM938.07 305.65a1.15 1.15 0 1 1 2.30 0a1.15 1.15 0 1 1 -2.30 0zM939.22 304.50h2.45v2.30h-2.45zM940.37 305.65v2.45h-2.30v-2.45zM940.52 305.65a1.15 1.15 0 1 1 2.30 0a1.15 1.15 0 1 1 -2.30 0zM942.82 305.65v2.45h-2.30v-2.45zM950.31 305.65a1.15 1.15 0 1 1 2.30 0a1.15 1.15 0 1 1 -2.30 0zM951.47 304.50h2.45v2.30h-2.45zM952.76 305.65a1.15 1.15 0 1 1 2.30 0a1.15 1.15 0 1 1 -2.30 0zM955.07 305.65v2.45h-2.30v-2.45zM960.11 305.65a1.15 1.15 0 1 1 2.30 0a1.15 1.15 0 1 1 -2.30 0zM1006.64 305.65a1.15 1.15 0 1 1 2.30 0a1.15 1.15 0 1 1 -2.30 0zM1013.99 305.65a1.15 1.15 0 1 1 2.30 0a1.15 1.15 0 1 1 -2.30 0zM1021.33 305.65a1.15 1.15 0 1 1 2.30 0a1.15 1.15 0 1 1 -2.30 0zM1022.49 304.50h2.45v2.30h-2.45zM1023.78 305.65a1.15 1.15 0 1 1 2.30 0a1.15 1.15 0 1 1 -2.30 0zM1024.93 304.50h2.45v2.30h-2.45zM1026.09 305.65v2.45h-2.30v-2.45zM1026.23 305.65a1.15 1.15 0 1 1 2.30 0a1.15 1.15 0 1 1 -2.30 0zM1027.38 304.50h2.45v2.30h-2.45zM1028.53 305.65v2.45h-2.30v-2.45zM1028.68 305.65a1.15 1.15 0 1 1 2.30 0a1.15 1.15 0 1 1 -2.30 0zM1029.83 304.50h2.45v2.30h-2.45zM1030.98 305.65v2.45h-2.30v-2.45zM1031.13 305.65a1.15 1.15 0 1 1 2.30 0a1.15 1.15 0 1 1 -2.30 0zM1033.43 305.65v2.45h-2.30v-2.45zM1038.48 305.65a1.15 1.15 0 1 1 2.30 0a1.15 1.15 0 1 1 -2.30 0zM1039.63 304.50h2.45v2.30h-2.45zM1040.93 305.65a1.15 1.15 0 1 1 2.30 0a1.15 1.15 0 1 1 -2.30 0zM1042.08 304.50h2.45v2.30h-2.45zM1043.23 305.65v2.45h-2.30v-2.45zM1043.38 305.65a1.15 1.15 0 1 1 2.30 0a1.15 1.15 0 1 1 -2.30 0zM928.27 308.10a1.15 1.15 0 1 1 2.30 0a1.15 1.15 0 1 1 -2.30 0zM929.42 306.95h2.45v2.30h-2.45zM930.58 308.10v2.45h-2.30v-2.45zM930.72 308.10a1.15 1.15 0 1 1 2.30 0a1.15 1.15 0 1 1 -2.30 0zM931.87 306.95h2.45v2.30h-2.45zM933.02 308.10v2.45h-2.30v-2.45zM933.17 308.10a1.15 1.15 0 1 1 2.30 0a1.15 1.15 0 1 1 -2.30 0zM938.07 308.10a1.15 1.15 0 1 1 2.30 0a1.15 1.15 0 1 1 -2.30 0zM939.22 306.95h2.45v2.30h-2.45zM940.37 308.10v2.45h-2.30v-2.45zM940.52 308.10a1.15 1.15 0 1 1 2.30 0a1.15 1.15 0 1 1 -2.30 0zM941.67 306.95h2.45v2.30h-2.45zM942.97 308.10a1.15 1.15 0 1 1 2.30 0a1.15 1.15 0 1 1 -2.30 0zM944.12 306.95h2.45v2.30h-2.45zM945.42 308.10a1.15 1.15 0 1 1 2.30 0a1.15 1.15 0 1 1 -2.30 0zM946.57 306.95h2.45v2.30h-2.45zM947.87 308.10a1.15 1.15 0 1 1 2.30 0a1.15 1.15 0 1 1 -2.30 0zM950.17 308.10v2.45h-2.30v-2.45zM952.76 308.10a1.15 1.15 0 1 1 2.30 0a1.15 1.15 0 1 1 -2.30 0zM953.91 306.95h2.45v2.30h-2.45zM955.07 308.10v2.45h-2.30v-2.45zM955.21 308.10a1.15 1.15 0 1 1 2.30 0a1.15 1.15 0 1 1 -2.30 0zM956.36 306.95h2.45v2.30h-2.45zM957.66 308.10a1.15 1.15 0 1 1 2.30 0a1.15 1.15 0 1 1 -2.30 0zM959.96 308.10v2.45h-2.30v-2.45zM965.01 308.10a1.15 1.15 0 1 1 2.30 0a1.15 1.15 0 1 1 -2.30 0zM966.16 306.95h2.45v2.30h-2.45zM967.31 308.10v2.45h-2.30v-2.45zM967.46 308.10a1.15 1.15 0 1 1 2.30 0a1.15 1.15 0 1 1 -2.30 0zM1009.09 308.10a1.15 1.15 0 1 1 2.30 0a1.15 1.15 0 1 1 -2.30 0zM1010.24 306.95h2.45v2.30h-2.45zM1011.54 308.10a1.15 1.15 0 1 1 2.30 0a1.15 1.15 0 1 1 -2.30 0zM1013.84 308.10v2.45h-2.30v-2.45zM1016.44 308.10a1.15 1.15 0 1 1 2.30 0a1.15 1.15 0 1 1 -2.30 0zM1017.59 306.95h2.45v2.30h-2.45zM1018.89 308.10a1.15 1.15 0 1 1 2.30 0a1.15 1.15 0 1 1 -2.30 0zM1023.78 308.10a1.15 1.15 0 1 1 2.30 0a1.15 1.15 0 1 1 -2.30 0zM1024.93 306.95h2.45v2.30h-2.45zM1026.23 308.10a1.15 1.15 0 1 1 2.30 0a1.15 1.15 0 1 1 -2.30 0zM1027.38 306.95h2.45v2.30h-2.45zM1028.53 308.10v2.45h-2.30v-2.45zM1028.68 308.10a1.15 1.15 0 1 1 2.30 0a1.15 1.15 0 1 1 -2.30 0zM1029.83 306.95h2.45v2.30h-2.45zM1031.13 308.10a1.15 1.15 0 1 1 2.30 0a1.15 1.15 0 1 1 -2.30 0zM1032.28 306.95h2.45v2.30h-2.45zM1033.58 308.10a1.15 1.15 0 1 1 2.30 0a1.15 1.15 0 1 1 -2.30 0zM1034.73 306.95h2.45v2.30h-2.45zM1036.03 308.10a1.15 1.15 0 1 1 2.30 0a1.15 1.15 0 1 1 -2.30 0zM1038.33 308.10v2.45h-2.30v-2.45zM1040.93 308.10a1.15 1.15 0 1 1 2.30 0a1.15 1.15 0 1 1 -2.30 0zM1043.23 308.10v2.45h-2.30v-2.45zM1045.82 308.10a1.15 1.15 0 1 1 2.30 0a1.15 1.15 0 1 1 -2.30 0zM928.27 310.55a1.15 1.15 0 1 1 2.30 0a1.15 1.15 0 1 1 -2.30 0zM929.42 309.40h2.45v2.30h-2.45zM930.58 310.55v2.45h-2.30v-2.45zM930.72 310.55a1.15 1.15 0 1 1 2.30 0a1.15 1.15 0 1 1 -2.30 0zM933.02 310.55v2.45h-2.30v-2.45zM938.07 310.55a1.15 1.15 0 1 1 2.30 0a1.15 1.15 0 1 1 -2.30 0zM940.37 310.55v2.45h-2.30v-2.45zM947.87 310.55a1.15 1.15 0 1 1 2.30 0a1.15 1.15 0 1 1 -2.30 0zM950.17 310.55v2.45h-2.30v-2.45zM952.76 310.55a1.15 1.15 0 1 1 2.30 0a1.15 1.15 0 1 1 -2.30 0zM955.07 310.55v2.45h-2.30v-2.45zM957.66 310.55a1.15 1.15 0 1 1 2.30 0a1.15 1.15 0 1 1 -2.30 0zM962.56 310.55a1.15 1.15 0 1 1 2.30 0a1.15 1.15 0 1 1 -2.30 0zM963.71 309.40h2.45v2.30h-2.45zM964.86 310.55v2.45h-2.30v-2.45zM965.01 310.55a1.15 1.15 0 1 1 2.30 0a1.15 1.15 0 1 1 -2.30 0zM1006.64 310.55a1.15 1.15 0 1 1 2.30 0a1.15 1.15 0 1 1 -2.30 0zM1011.54 310.55a1.15 1.15 0 1 1 2.30 0a1.15 1.15 0 1 1 -2.30 0zM1013.84 310.55v2.45h-2.30v-2.45zM1021.33 310.55a1.15 1.15 0 1 1 2.30 0a1.15 1.15 0 1 1 -2.30 0zM1023.64 310.55v2.45h-2.30v-2.45zM1026.23 310.55a1.15 1.15 0 1 1 2.30 0a1.15 1.15 0 1 1 -2.30 0zM1028.53 310.55v2.45h-2.30v-2.45zM1036.03 310.55a1.15 1.15 0 1 1 2.30 0a1.15 1.15 0 1 1 -2.30 0zM1037.18 309.40h2.45v2.30h-2.45zM1038.33 310.55v2.45h-2.30v-2.45zM1038.48 310.55a1.15 1.15 0 1 1 2.30 0a1.15 1.15 0 1 1 -2.30 0zM1039.63 309.40h2.45v2.30h-2.45zM1040.93 310.55a1.15 1.15 0 1 1 2.30 0a1.15 1.15 0 1 1 -2.30 0zM1043.23 310.55v2.45h-2.30v-2.45zM928.27 313.00a1.15 1.15 0 1 1 2.30 0a1.15 1.15 0 1 1 -2.30 0zM929.42 311.85h2.45v2.30h-2.45zM930.58 313.00v2.45h-2.30v-2.45zM930.72 313.00a1.15 1.15 0 1 1 2.30 0a1.15 1.15 0 1 1 -2.30 0zM931.87 311.85h2.45v2.30h-2.45zM933.02 313.00v2.45h-2.30v-2.45zM933.17 313.00a1.15 1.15 0 1 1 2.30 0a1.15 1.15 0 1 1 -2.30 0zM935.47 313.00v2.45h-2.30v-2.45zM938.07 313.00a1.15 1.15 0 1 1 2.30 0a1.15 1.15 0 1 1 -2.30 0zM940.37 313.00v2.45h-2.30v-2.45zM942.97 313.00a1.15 1.15 0 1 1 2.30 0a1.15 1.15 0 1 1 -2.30 0zM947.87 313.00a1.15 1.15 0 1 1 2.30 0a1.15 1.15 0 1 1 -2.30 0zM949.02 311.85h2.45v2.30h-2.45zM950.17 313.00v2.45h-2.30v-2.45zM950.31 313.00a1.15 1.15 0 1 1 2.30 0a1.15 1.15 0 1 1 -2.30 0zM951.47 311.85h2.45v2.30h-2.45zM952.62 313.00v2.45h-2.30v-2.45zM952.76 313.00a1.15 1.15 0 1 1 2.30 0a1.15 1.15 0 1 1 -2.30 0zM953.91 311.85h2.45v2.30h-2.45zM955.21 313.00a1.15 1.15 0 1 1 2.30 0a1.15 1.15 0 1 1 -2.30 0zM957.51 313.00v2.45h-2.30v-2.45zM962.56 313.00a1.15 1.15 0 1 1 2.30 0a1.15 1.15 0 1 1 -2.30 0zM1009.09 313.00a1.15 1.15 0 1 1 2.30 0a1.15 1.15 0 1 1 -2.30 0zM1010.24 311.85h2.45v2.30h-2.45zM1011.39 313.00v2.45h-2.30v-2.45zM1011.54 313.00a1.15 1.15 0 1 1 2.30 0a1.15 1.15 0 1 1 -2.30 0zM1012.69 311.85h2.45v2.30h-2.45zM1013.99 313.00a1.15 1.15 0 1 1 2.30 0a1.15 1.15 0 1 1 -2.30 0zM1018.89 313.00a1.15 1.15 0 1 1 2.30 0a1.15 1.15 0 1 1 -2.30 0zM1020.04 311.85h2.45v2.30h-2.45zM1021.33 313.00a1.15 1.15 0 1 1 2.30 0a1.15 1.15 0 1 1 -2.30 0zM1026.23 313.00a1.15 1.15 0 1 1 2.30 0a1.15 1.15 0 1 1 -2.30 0zM1028.53 313.00v2.45h-2.30v-2.45zM1031.13 313.00a1.15 1.15 0 1 1 2.30 0a1.15 1.15 0 1 1 -2.30 0zM1036.03 313.00a1.15 1.15 0 1 1 2.30 0a1.15 1.15 0 1 1 -2.30 0zM1038.33 313.00v2.45h-2.30v-2.45zM1040.93 313.00a1.15 1.15 0 1 1 2.30 0a1.15 1.15 0 1 1 -2.30 0zM1042.08 311.85h2.45v2.30h-2.45zM1043.38 313.00a1.15 1.15 0 1 1 2.30 0a1.15 1.15 0 1 1 -2.30 0zM1044.53 311.85h2.45v2.30h-2.45zM1045.68 313.00v2.45h-2.30v-2.45zM1045.82 313.00a1.15 1.15 0 1 1 2.30 0a1.15 1.15 0 1 1 -2.30 0zM928.27 315.45a1.15 1.15 0 1 1 2.30 0a1.15 1.15 0 1 1 -2.30 0zM929.42 314.30h2.45v2.30h-2.45zM930.58 315.45v2.45h-2.30v-2.45zM930.72 315.45a1.15 1.15 0 1 1 2.30 0a1.15 1.15 0 1 1 -2.30 0zM931.87 314.30h2.45v2.30h-2.45zM933.17 315.45a1.15 1.15 0 1 1 2.30 0a1.15 1.15 0 1 1 -2.30 0zM934.32 314.30h2.45v2.30h-2.45zM935.47 315.45v2.45h-2.30v-2.45zM935.62 315.45a1.15 1.15 0 1 1 2.30 0a1.15 1.15 0 1 1 -2.30 0zM936.77 314.30h2.45v2.30h-2.45zM938.07 315.45a1.15 1.15 0 1 1 2.30 0a1.15 1.15 0 1 1 -2.30 0zM940.37 315.45v2.45h-2.30v-2.45zM947.87 315.45a1.15 1.15 0 1 1 2.30 0a1.15 1.15 0 1 1 -2.30 0zM949.02 314.30h2.45v2.30h-2.45zM950.17 315.45v2.45h-2.30v-2.45zM950.31 315.45a1.15 1.15 0 1 1 2.30 0a1.15 1.15 0 1 1 -2.30 0zM955.21 315.45a1.15 1.15 0 1 1 2.30 0a1.15 1.15 0 1 1 -2.30 0zM957.51 315.45v2.45h-2.30v-2.45zM960.11 315.45a1.15 1.15 0 1 1 2.30 0a1.15 1.15 0 1 1 -2.30 0zM962.41 315.45v2.45h-2.30v-2.45zM1009.09 315.45a1.15 1.15 0 1 1 2.30 0a1.15 1.15 0 1 1 -2.30 0zM1016.44 315.45a1.15 1.15 0 1 1 2.30 0a1.15 1.15 0 1 1 -2.30 0zM1023.78 315.45a1.15 1.15 0 1 1 2.30 0a1.15 1.15 0 1 1 -2.30 0zM1024.93 314.30h2.45v2.30h-2.45zM1026.23 315.45a1.15 1.15 0 1 1 2.30 0a1.15 1.15 0 1 1 -2.30 0zM1028.53 315.45v2.45h-2.30v-2.45zM1036.03 315.45a1.15 1.15 0 1 1 2.30 0a1.15 1.15 0 1 1 -2.30 0zM1037.18 314.30h2.45v2.30h-2.45zM1038.33 315.45v2.45h-2.30v-2.45zM1038.48 315.45a1.15 1.15 0 1 1 2.30 0a1.15 1.15 0 1 1 -2.30 0zM1040.78 315.45v2.45h-2.30v-2.45zM1043.38 315.45a1.15 1.15 0 1 1 2.30 0a1.15 1.15 0 1 1 -2.30 0zM928.27 317.90a1.15 1.15 0 1 1 2.30 0a1.15 1.15 0 1 1 -2.30 0zM933.17 317.90a1.15 1.15 0 1 1 2.30 0a1.15 1.15 0 1 1 -2.30 0zM935.47 317.90v2.45h-2.30v-2.45zM938.07 317.90a1.15 1.15 0 1 1 2.30 0a1.15 1.15 0 1 1 -2.30 0zM939.22 316.75h2.45v2.30h-2.45zM940.37 317.90v2.45h-2.30v-2.45zM940.52 317.90a1.15 1.15 0 1 1 2.30 0a1.15 1.15 0 1 1 -2.30 0zM941.67 316.75h2.45v2.30h-2.45zM942.97 317.90a1.15 1.15 0 1 1 2.30 0a1.15 1.15 0 1 1 -2.30 0zM944.12 316.75h2.45v2.30h-2.45zM945.42 317.90a1.15 1.15 0 1 1 2.30 0a1.15 1.15 0 1 1 -2.30 0zM946.57 316.75h2.45v2.30h-2.45zM947.72 317.90v2.45h-2.30v-2.45zM947.87 317.90a1.15 1.15 0 1 1 2.30 0a1.15 1.15 0 1 1 -2.30 0zM952.76 317.90a1.15 1.15 0 1 1 2.30 0a1.15 1.15 0 1 1 -2.30 0zM953.91 316.75h2.45v2.30h-2.45zM955.21 317.90a1.15 1.15 0 1 1 2.30 0a1.15 1.15 0 1 1 -2.30 0zM960.11 317.90a1.15 1.15 0 1 1 2.30 0a1.15 1.15 0 1 1 -2.30 0zM961.26 316.75h2.45v2.30h-2.45zM962.41 317.90v2.45h-2.30v-2.45zM962.56 317.90a1.15 1.15 0 1 1 2.30 0a1.15 1.15 0 1 1 -2.30 0zM963.71 316.75h2.45v2.30h-2.45zM964.86 317.90v2.45h-2.30v-2.45zM965.01 317.90a1.15 1.15 0 1 1 2.30 0a1.15 1.15 0 1 1 -2.30 0zM966.16 316.75h2.45v2.30h-2.45zM967.31 317.90v2.45h-2.30v-2.45zM967.46 317.90a1.15 1.15 0 1 1 2.30 0a1.15 1.15 0 1 1 -2.30 0zM1013.99 317.90a1.15 1.15 0 1 1 2.30 0a1.15 1.15 0 1 1 -2.30 0zM1021.33 317.90a1.15 1.15 0 1 1 2.30 0a1.15 1.15 0 1 1 -2.30 0zM1023.64 317.90v2.45h-2.30v-2.45zM1026.23 317.90a1.15 1.15 0 1 1 2.30 0a1.15 1.15 0 1 1 -2.30 0zM1027.38 316.75h2.45v2.30h-2.45zM1028.68 317.90a1.15 1.15 0 1 1 2.30 0a1.15 1.15 0 1 1 -2.30 0zM1029.83 316.75h2.45v2.30h-2.45zM1031.13 317.90a1.15 1.15 0 1 1 2.30 0a1.15 1.15 0 1 1 -2.30 0zM1032.28 316.75h2.45v2.30h-2.45zM1033.43 317.90v2.45h-2.30v-2.45zM1033.58 317.90a1.15 1.15 0 1 1 2.30 0a1.15 1.15 0 1 1 -2.30 0zM1034.73 316.75h2.45v2.30h-2.45zM1035.88 317.90v2.45h-2.30v-2.45zM1036.03 317.90a1.15 1.15 0 1 1 2.30 0a1.15 1.15 0 1 1 -2.30 0zM1037.18 316.75h2.45v2.30h-2.45zM1038.33 317.90v2.45h-2.30v-2.45zM1038.48 317.90a1.15 1.15 0 1 1 2.30 0a1.15 1.15 0 1 1 -2.30 0zM1045.82 317.90a1.15 1.15 0 1 1 2.30 0a1.15 1.15 0 1 1 -2.30 0zM930.72 320.35a1.15 1.15 0 1 1 2.30 0a1.15 1.15 0 1 1 -2.30 0zM931.87 319.20h2.45v2.30h-2.45zM933.17 320.35a1.15 1.15 0 1 1 2.30 0a1.15 1.15 0 1 1 -2.30 0zM938.07 320.35a1.15 1.15 0 1 1 2.30 0a1.15 1.15 0 1 1 -2.30 0zM945.42 320.35a1.15 1.15 0 1 1 2.30 0a1.15 1.15 0 1 1 -2.30 0zM957.66 320.35a1.15 1.15 0 1 1 2.30 0a1.15 1.15 0 1 1 -2.30 0zM958.81 319.20h2.45v2.30h-2.45zM959.96 320.35v2.45h-2.30v-2.45zM960.11 320.35a1.15 1.15 0 1 1 2.30 0a1.15 1.15 0 1 1 -2.30 0zM961.26 319.20h2.45v2.30h-2.45zM962.56 320.35a1.15 1.15 0 1 1 2.30 0a1.15 1.15 0 1 1 -2.30 0zM963.71 319.20h2.45v2.30h-2.45zM965.01 320.35a1.15 1.15 0 1 1 2.30 0a1.15 1.15 0 1 1 -2.30 0zM967.31 320.35v2.45h-2.30v-2.45zM1009.09 320.35a1.15 1.15 0 1 1 2.30 0a1.15 1.15 0 1 1 -2.30 0zM1010.24 319.20h2.45v2.30h-2.45zM1011.39 320.35v2.45h-2.30v-2.45zM1011.54 320.35a1.15 1.15 0 1 1 2.30 0a1.15 1.15 0 1 1 -2.30 0zM1013.84 320.35v2.45h-2.30v-2.45zM1016.44 320.35a1.15 1.15 0 1 1 2.30 0a1.15 1.15 0 1 1 -2.30 0zM1017.59 319.20h2.45v2.30h-2.45zM1018.74 320.35v2.45h-2.30v-2.45zM1018.89 320.35a1.15 1.15 0 1 1 2.30 0a1.15 1.15 0 1 1 -2.30 0zM1020.04 319.20h2.45v2.30h-2.45zM1021.19 320.35v2.45h-2.30v-2.45zM1021.33 320.35a1.15 1.15 0 1 1 2.30 0a1.15 1.15 0 1 1 -2.30 0zM1023.64 320.35v2.45h-2.30v-2.45zM1031.13 320.35a1.15 1.15 0 1 1 2.30 0a1.15 1.15 0 1 1 -2.30 0zM1032.28 319.20h2.45v2.30h-2.45zM1033.58 320.35a1.15 1.15 0 1 1 2.30 0a1.15 1.15 0 1 1 -2.30 0zM1034.73 319.20h2.45v2.30h-2.45zM1035.88 320.35v2.45h-2.30v-2.45zM1036.03 320.35a1.15 1.15 0 1 1 2.30 0a1.15 1.15 0 1 1 -2.30 0zM1043.38 320.35a1.15 1.15 0 1 1 2.30 0a1.15 1.15 0 1 1 -2.30 0zM928.27 322.80a1.15 1.15 0 1 1 2.30 0a1.15 1.15 0 1 1 -2.30 0zM935.62 322.80a1.15 1.15 0 1 1 2.30 0a1.15 1.15 0 1 1 -2.30 0zM940.52 322.80a1.15 1.15 0 1 1 2.30 0a1.15 1.15 0 1 1 -2.30 0zM941.67 321.64h2.45v2.30h-2.45zM942.82 322.80v2.45h-2.30v-2.45zM942.97 322.80a1.15 1.15 0 1 1 2.30 0a1.15 1.15 0 1 1 -2.30 0zM947.87 322.80a1.15 1.15 0 1 1 2.30 0a1.15 1.15 0 1 1 -2.30 0zM949.02 321.64h2.45v2.30h-2.45zM950.31 322.80a1.15 1.15 0 1 1 2.30 0a1.15 1.15 0 1 1 -2.30 0zM951.47 321.64h2.45v2.30h-2.45zM952.76 322.80a1.15 1.15 0 1 1 2.30 0a1.15 1.15 0 1 1 -2.30 0zM957.66 322.80a1.15 1.15 0 1 1 2.30 0a1.15 1.15 0 1 1 -2.30 0zM965.01 322.80a1.15 1.15 0 1 1 2.30 0a1.15 1.15 0 1 1 -2.30 0zM966.16 321.64h2.45v2.30h-2.45zM967.46 322.80a1.15 1.15 0 1 1 2.30 0a1.15 1.15 0 1 1 -2.30 0zM1009.09 322.80a1.15 1.15 0 1 1 2.30 0a1.15 1.15 0 1 1 -2.30 0zM1010.24 321.64h2.45v2.30h-2.45zM1011.39 322.80v2.45h-2.30v-2.45zM1011.54 322.80a1.15 1.15 0 1 1 2.30 0a1.15 1.15 0 1 1 -2.30 0zM1012.69 321.64h2.45v2.30h-2.45zM1013.84 322.80v2.45h-2.30v-2.45zM1013.99 322.80a1.15 1.15 0 1 1 2.30 0a1.15 1.15 0 1 1 -2.30 0zM1015.14 321.64h2.45v2.30h-2.45zM1016.44 322.80a1.15 1.15 0 1 1 2.30 0a1.15 1.15 0 1 1 -2.30 0zM1017.59 321.64h2.45v2.30h-2.45zM1018.74 322.80v2.45h-2.30v-2.45zM1018.89 322.80a1.15 1.15 0 1 1 2.30 0a1.15 1.15 0 1 1 -2.30 0zM1020.04 321.64h2.45v2.30h-2.45zM1021.19 322.80v2.45h-2.30v-2.45zM1021.33 322.80a1.15 1.15 0 1 1 2.30 0a1.15 1.15 0 1 1 -2.30 0zM1023.64 322.80v2.45h-2.30v-2.45zM1033.58 322.80a1.15 1.15 0 1 1 2.30 0a1.15 1.15 0 1 1 -2.30 0zM1038.48 322.80a1.15 1.15 0 1 1 2.30 0a1.15 1.15 0 1 1 -2.30 0zM1045.82 322.80a1.15 1.15 0 1 1 2.30 0a1.15 1.15 0 1 1 -2.30 0zM933.17 325.24a1.15 1.15 0 1 1 2.30 0a1.15 1.15 0 1 1 -2.30 0zM938.07 325.24a1.15 1.15 0 1 1 2.30 0a1.15 1.15 0 1 1 -2.30 0zM939.22 324.09h2.45v2.30h-2.45zM940.52 325.24a1.15 1.15 0 1 1 2.30 0a1.15 1.15 0 1 1 -2.30 0zM942.82 325.24v2.45h-2.30v-2.45zM945.42 325.24a1.15 1.15 0 1 1 2.30 0a1.15 1.15 0 1 1 -2.30 0zM947.72 325.24v2.45h-2.30v-2.45zM955.21 325.24a1.15 1.15 0 1 1 2.30 0a1.15 1.15 0 1 1 -2.30 0zM960.11 325.24a1.15 1.15 0 1 1 2.30 0a1.15 1.15 0 1 1 -2.30 0zM961.26 324.09h2.45v2.30h-2.45zM962.56 325.24a1.15 1.15 0 1 1 2.30 0a1.15 1.15 0 1 1 -2.30 0zM1006.64 325.24a1.15 1.15 0 1 1 2.30 0a1.15 1.15 0 1 1 -2.30 0zM1007.79 324.09h2.45v2.30h-2.45zM1008.94 325.24v2.45h-2.30v-2.45zM1009.09 325.24a1.15 1.15 0 1 1 2.30 0a1.15 1.15 0 1 1 -2.30 0zM1010.24 324.09h2.45v2.30h-2.45zM1011.39 325.24v2.45h-2.30v-2.45zM1011.54 325.24a1.15 1.15 0 1 1 2.30 0a1.15 1.15 0 1 1 -2.30 0zM1013.84 325.24v2.45h-2.30v-2.45zM1016.44 325.24a1.15 1.15 0 1 1 2.30 0a1.15 1.15 0 1 1 -2.30 0zM1017.59 324.09h2.45v2.30h-2.45zM1018.74 325.24v2.45h-2.30v-2.45zM1018.89 325.24a1.15 1.15 0 1 1 2.30 0a1.15 1.15 0 1 1 -2.30 0zM1020.04 324.09h2.45v2.30h-2.45zM1021.33 325.24a1.15 1.15 0 1 1 2.30 0a1.15 1.15 0 1 1 -2.30 0zM1022.49 324.09h2.45v2.30h-2.45zM1023.78 325.24a1.15 1.15 0 1 1 2.30 0a1.15 1.15 0 1 1 -2.30 0zM1026.09 325.24v2.45h-2.30v-2.45zM1036.03 325.24a1.15 1.15 0 1 1 2.30 0a1.15 1.15 0 1 1 -2.30 0zM1038.33 325.24v2.45h-2.30v-2.45zM1040.93 325.24a1.15 1.15 0 1 1 2.30 0a1.15 1.15 0 1 1 -2.30 0zM930.72 327.69a1.15 1.15 0 1 1 2.30 0a1.15 1.15 0 1 1 -2.30 0zM933.02 327.69v2.45h-2.30v-2.45zM940.52 327.69a1.15 1.15 0 1 1 2.30 0a1.15 1.15 0 1 1 -2.30 0zM941.67 326.54h2.45v2.30h-2.45zM942.82 327.69v2.45h-2.30v-2.45zM942.97 327.69a1.15 1.15 0 1 1 2.30 0a1.15 1.15 0 1 1 -2.30 0zM944.12 326.54h2.45v2.30h-2.45zM945.42 327.69a1.15 1.15 0 1 1 2.30 0a1.15 1.15 0 1 1 -2.30 0zM946.57 326.54h2.45v2.30h-2.45zM947.87 327.69a1.15 1.15 0 1 1 2.30 0a1.15 1.15 0 1 1 -2.30 0zM949.02 326.54h2.45v2.30h-2.45zM950.17 327.69v2.45h-2.30v-2.45zM950.31 327.69a1.15 1.15 0 1 1 2.30 0a1.15 1.15 0 1 1 -2.30 0zM965.01 327.69a1.15 1.15 0 1 1 2.30 0a1.15 1.15 0 1 1 -2.30 0zM966.16 326.54h2.45v2.30h-2.45zM967.46 327.69a1.15 1.15 0 1 1 2.30 0a1.15 1.15 0 1 1 -2.30 0zM969.76 327.69v2.45h-2.30v-2.45zM1006.64 327.69a1.15 1.15 0 1 1 2.30 0a1.15 1.15 0 1 1 -2.30 0zM1007.79 326.54h2.45v2.30h-2.45zM1008.94 327.69v2.45h-2.30v-2.45zM1009.09 327.69a1.15 1.15 0 1 1 2.30 0a1.15 1.15 0 1 1 -2.30 0zM1010.24 326.54h2.45v2.30h-2.45zM1011.54 327.69a1.15 1.15 0 1 1 2.30 0a1.15 1.15 0 1 1 -2.30 0zM1013.84 327.69v2.45h-2.30v-2.45zM1016.44 327.69a1.15 1.15 0 1 1 2.30 0a1.15 1.15 0 1 1 -2.30 0zM1023.78 327.69a1.15 1.15 0 1 1 2.30 0a1.15 1.15 0 1 1 -2.30 0zM1028.68 327.69a1.15 1.15 0 1 1 2.30 0a1.15 1.15 0 1 1 -2.30 0zM1030.98 327.69v2.45h-2.30v-2.45zM1033.58 327.69a1.15 1.15 0 1 1 2.30 0a1.15 1.15 0 1 1 -2.30 0zM1034.73 326.54h2.45v2.30h-2.45zM1036.03 327.69a1.15 1.15 0 1 1 2.30 0a1.15 1.15 0 1 1 -2.30 0zM1037.18 326.54h2.45v2.30h-2.45zM1038.48 327.69a1.15 1.15 0 1 1 2.30 0a1.15 1.15 0 1 1 -2.30 0zM1045.82 327.69a1.15 1.15 0 1 1 2.30 0a1.15 1.15 0 1 1 -2.30 0zM928.27 330.14a1.15 1.15 0 1 1 2.30 0a1.15 1.15 0 1 1 -2.30 0zM929.42 328.99h2.45v2.30h-2.45zM930.72 330.14a1.15 1.15 0 1 1 2.30 0a1.15 1.15 0 1 1 -2.30 0zM933.02 330.14v2.45h-2.30v-2.45zM935.62 330.14a1.15 1.15 0 1 1 2.30 0a1.15 1.15 0 1 1 -2.30 0zM936.77 328.99h2.45v2.30h-2.45zM938.07 330.14a1.15 1.15 0 1 1 2.30 0a1.15 1.15 0 1 1 -2.30 0zM939.22 328.99h2.45v2.30h-2.45zM940.37 330.14v2.45h-2.30v-2.45zM940.52 330.14a1.15 1.15 0 1 1 2.30 0a1.15 1.15 0 1 1 -2.30 0zM942.82 330.14v2.45h-2.30v-2.45zM947.87 330.14a1.15 1.15 0 1 1 2.30 0a1.15 1.15 0 1 1 -2.30 0zM952.76 330.14a1.15 1.15 0 1 1 2.30 0a1.15 1.15 0 1 1 -2.30 0zM953.91 328.99h2.45v2.30h-2.45zM955.07 330.14v2.45h-2.30v-2.45zM955.21 330.14a1.15 1.15 0 1 1 2.30 0a1.15 1.15 0 1 1 -2.30 0zM957.51 330.14v2.45h-2.30v-2.45zM960.11 330.14a1.15 1.15 0 1 1 2.30 0a1.15 1.15 0 1 1 -2.30 0zM961.26 328.99h2.45v2.30h-2.45zM962.41 330.14v2.45h-2.30v-2.45zM962.56 330.14a1.15 1.15 0 1 1 2.30 0a1.15 1.15 0 1 1 -2.30 0zM967.46 330.14a1.15 1.15 0 1 1 2.30 0a1.15 1.15 0 1 1 -2.30 0zM969.76 330.14v2.45h-2.30v-2.45zM1006.64 330.14a1.15 1.15 0 1 1 2.30 0a1.15 1.15 0 1 1 -2.30 0zM1008.94 330.14v2.45h-2.30v-2.45zM1011.54 330.14a1.15 1.15 0 1 1 2.30 0a1.15 1.15 0 1 1 -2.30 0zM1012.69 328.99h2.45v2.30h-2.45zM1013.84 330.14v2.45h-2.30v-2.45zM1013.99 330.14a1.15 1.15 0 1 1 2.30 0a1.15 1.15 0 1 1 -2.30 0zM1026.23 330.14a1.15 1.15 0 1 1 2.30 0a1.15 1.15 0 1 1 -2.30 0zM1027.38 328.99h2.45v2.30h-2.45zM1028.53 330.14v2.45h-2.30v-2.45zM1028.68 330.14a1.15 1.15 0 1 1 2.30 0a1.15 1.15 0 1 1 -2.30 0zM1029.83 328.99h2.45v2.30h-2.45zM1031.13 330.14a1.15 1.15 0 1 1 2.30 0a1.15 1.15 0 1 1 -2.30 0zM1033.43 330.14v2.45h-2.30v-2.45zM1040.93 330.14a1.15 1.15 0 1 1 2.30 0a1.15 1.15 0 1 1 -2.30 0zM1042.08 328.99h2.45v2.30h-2.45zM1043.38 330.14a1.15 1.15 0 1 1 2.30 0a1.15 1.15 0 1 1 -2.30 0zM930.72 332.59a1.15 1.15 0 1 1 2.30 0a1.15 1.15 0 1 1 -2.30 0zM931.87 331.44h2.45v2.30h-2.45zM933.17 332.59a1.15 1.15 0 1 1 2.30 0a1.15 1.15 0 1 1 -2.30 0zM938.07 332.59a1.15 1.15 0 1 1 2.30 0a1.15 1.15 0 1 1 -2.30 0zM939.22 331.44h2.45v2.30h-2.45zM940.52 332.59a1.15 1.15 0 1 1 2.30 0a1.15 1.15 0 1 1 -2.30 0zM941.67 331.44h2.45v2.30h-2.45zM942.97 332.59a1.15 1.15 0 1 1 2.30 0a1.15 1.15 0 1 1 -2.30 0zM944.12 331.44h2.45v2.30h-2.45zM945.42 332.59a1.15 1.15 0 1 1 2.30 0a1.15 1.15 0 1 1 -2.30 0zM952.76 332.59a1.15 1.15 0 1 1 2.30 0a1.15 1.15 0 1 1 -2.30 0zM953.91 331.44h2.45v2.30h-2.45zM955.07 332.59v2.45h-2.30v-2.45zM955.21 332.59a1.15 1.15 0 1 1 2.30 0a1.15 1.15 0 1 1 -2.30 0zM956.36 331.44h2.45v2.30h-2.45zM957.66 332.59a1.15 1.15 0 1 1 2.30 0a1.15 1.15 0 1 1 -2.30 0zM958.81 331.44h2.45v2.30h-2.45zM959.96 332.59v2.45h-2.30v-2.45zM960.11 332.59a1.15 1.15 0 1 1 2.30 0a1.15 1.15 0 1 1 -2.30 0zM962.41 332.59v2.45h-2.30v-2.45zM965.01 332.59a1.15 1.15 0 1 1 2.30 0a1.15 1.15 0 1 1 -2.30 0zM966.16 331.44h2.45v2.30h-2.45zM967.46 332.59a1.15 1.15 0 1 1 2.30 0a1.15 1.15 0 1 1 -2.30 0zM968.61 331.44h2.45v2.30h-2.45zM969.91 332.59a1.15 1.15 0 1 1 2.30 0a1.15 1.15 0 1 1 -2.30 0zM972.21 332.59v2.45h-2.30v-2.45zM977.25 332.59a1.15 1.15 0 1 1 2.30 0a1.15 1.15 0 1 1 -2.30 0zM982.15 332.59a1.15 1.15 0 1 1 2.30 0a1.15 1.15 0 1 1 -2.30 0zM983.30 331.44h2.45v2.30h-2.45zM984.60 332.59a1.15 1.15 0 1 1 2.30 0a1.15 1.15 0 1 1 -2.30 0zM994.40 332.59a1.15 1.15 0 1 1 2.30 0a1.15 1.15 0 1 1 -2.30 0zM995.55 331.44h2.45v2.30h-2.45zM996.70 332.59v2.45h-2.30v-2.45zM996.84 332.59a1.15 1.15 0 1 1 2.30 0a1.15 1.15 0 1 1 -2.30 0zM999.15 332.59v2.45h-2.30v-2.45zM1001.74 332.59a1.15 1.15 0 1 1 2.30 0a1.15 1.15 0 1 1 -2.30 0zM1002.89 331.44h2.45v2.30h-2.45zM1004.04 332.59v2.45h-2.30v-2.45zM1004.19 332.59a1.15 1.15 0 1 1 2.30 0a1.15 1.15 0 1 1 -2.30 0zM1005.34 331.44h2.45v2.30h-2.45zM1006.64 332.59a1.15 1.15 0 1 1 2.30 0a1.15 1.15 0 1 1 -2.30 0zM1007.79 331.44h2.45v2.30h-2.45zM1008.94 332.59v2.45h-2.30v-2.45zM1009.09 332.59a1.15 1.15 0 1 1 2.30 0a1.15 1.15 0 1 1 -2.30 0zM1010.24 331.44h2.45v2.30h-2.45zM1011.54 332.59a1.15 1.15 0 1 1 2.30 0a1.15 1.15 0 1 1 -2.30 0zM1023.78 332.59a1.15 1.15 0 1 1 2.30 0a1.15 1.15 0 1 1 -2.30 0zM1024.93 331.44h2.45v2.30h-2.45zM1026.23 332.59a1.15 1.15 0 1 1 2.30 0a1.15 1.15 0 1 1 -2.30 0zM1031.13 332.59a1.15 1.15 0 1 1 2.30 0a1.15 1.15 0 1 1 -2.30 0zM1038.48 332.59a1.15 1.15 0 1 1 2.30 0a1.15 1.15 0 1 1 -2.30 0zM1045.82 332.59a1.15 1.15 0 1 1 2.30 0a1.15 1.15 0 1 1 -2.30 0zM1048.13 332.59v2.45h-2.30v-2.45zM928.27 335.04a1.15 1.15 0 1 1 2.30 0a1.15 1.15 0 1 1 -2.30 0zM950.31 335.04a1.15 1.15 0 1 1 2.30 0a1.15 1.15 0 1 1 -2.30 0zM951.47 333.89h2.45v2.30h-2.45zM952.62 335.04v2.45h-2.30v-2.45zM952.76 335.04a1.15 1.15 0 1 1 2.30 0a1.15 1.15 0 1 1 -2.30 0zM955.07 335.04v2.45h-2.30v-2.45zM957.66 335.04a1.15 1.15 0 1 1 2.30 0a1.15 1.15 0 1 1 -2.30 0zM958.81 333.89h2.45v2.30h-2.45zM959.96 335.04v2.45h-2.30v-2.45zM960.11 335.04a1.15 1.15 0 1 1 2.30 0a1.15 1.15 0 1 1 -2.30 0zM962.41 335.04v2.45h-2.30v-2.45zM969.91 335.04a1.15 1.15 0 1 1 2.30 0a1.15 1.15 0 1 1 -2.30 0zM971.06 333.89h2.45v2.30h-2.45zM972.36 335.04a1.15 1.15 0 1 1 2.30 0a1.15 1.15 0 1 1 -2.30 0zM973.51 333.89h2.45v2.30h-2.45zM974.66 335.04v2.45h-2.30v-2.45zM974.80 335.04a1.15 1.15 0 1 1 2.30 0a1.15 1.15 0 1 1 -2.30 0zM979.70 335.04a1.15 1.15 0 1 1 2.30 0a1.15 1.15 0 1 1 -2.30 0zM982.00 335.04v2.45h-2.30v-2.45zM987.05 335.04a1.15 1.15 0 1 1 2.30 0a1.15 1.15 0 1 1 -2.30 0zM994.40 335.04a1.15 1.15 0 1 1 2.30 0a1.15 1.15 0 1 1 -2.30 0zM995.55 333.89h2.45v2.30h-2.45zM996.84 335.04a1.15 1.15 0 1 1 2.30 0a1.15 1.15 0 1 1 -2.30 0zM999.15 335.04v2.45h-2.30v-2.45zM1001.74 335.04a1.15 1.15 0 1 1 2.30 0a1.15 1.15 0 1 1 -2.30 0zM1004.04 335.04v2.45h-2.30v-2.45zM1006.64 335.04a1.15 1.15 0 1 1 2.30 0a1.15 1.15 0 1 1 -2.30 0zM1016.44 335.04a1.15 1.15 0 1 1 2.30 0a1.15 1.15 0 1 1 -2.30 0zM1036.03 335.04a1.15 1.15 0 1 1 2.30 0a1.15 1.15 0 1 1 -2.30 0zM1038.33 335.04v2.45h-2.30v-2.45zM1040.93 335.04a1.15 1.15 0 1 1 2.30 0a1.15 1.15 0 1 1 -2.30 0zM1043.23 335.04v2.45h-2.30v-2.45zM1045.82 335.04a1.15 1.15 0 1 1 2.30 0a1.15 1.15 0 1 1 -2.30 0zM1048.13 335.04v2.45h-2.30v-2.45zM930.72 337.49a1.15 1.15 0 1 1 2.30 0a1.15 1.15 0 1 1 -2.30 0zM933.02 337.49v2.45h-2.30v-2.45zM935.62 337.49a1.15 1.15 0 1 1 2.30 0a1.15 1.15 0 1 1 -2.30 0zM936.77 336.34h2.45v2.30h-2.45zM937.92 337.49v2.45h-2.30v-2.45zM938.07 337.49a1.15 1.15 0 1 1 2.30 0a1.15 1.15 0 1 1 -2.30 0zM939.22 336.34h2.45v2.30h-2.45zM940.52 337.49a1.15 1.15 0 1 1 2.30 0a1.15 1.15 0 1 1 -2.30 0zM941.67 336.34h2.45v2.30h-2.45zM942.97 337.49a1.15 1.15 0 1 1 2.30 0a1.15 1.15 0 1 1 -2.30 0zM944.12 336.34h2.45v2.30h-2.45zM945.42 337.49a1.15 1.15 0 1 1 2.30 0a1.15 1.15 0 1 1 -2.30 0zM946.57 336.34h2.45v2.30h-2.45zM947.72 337.49v2.45h-2.30v-2.45zM947.87 337.49a1.15 1.15 0 1 1 2.30 0a1.15 1.15 0 1 1 -2.30 0zM949.02 336.34h2.45v2.30h-2.45zM950.31 337.49a1.15 1.15 0 1 1 2.30 0a1.15 1.15 0 1 1 -2.30 0zM951.47 336.34h2.45v2.30h-2.45zM952.76 337.49a1.15 1.15 0 1 1 2.30 0a1.15 1.15 0 1 1 -2.30 0zM955.07 337.49v2.45h-2.30v-2.45zM957.66 337.49a1.15 1.15 0 1 1 2.30 0a1.15 1.15 0 1 1 -2.30 0zM958.81 336.34h2.45v2.30h-2.45zM960.11 337.49a1.15 1.15 0 1 1 2.30 0a1.15 1.15 0 1 1 -2.30 0zM961.26 336.34h2.45v2.30h-2.45zM962.56 337.49a1.15 1.15 0 1 1 2.30 0a1.15 1.15 0 1 1 -2.30 0zM964.86 337.49v2.45h-2.30v-2.45zM972.36 337.49a1.15 1.15 0 1 1 2.30 0a1.15 1.15 0 1 1 -2.30 0zM974.66 337.49v2.45h-2.30v-2.45zM977.25 337.49a1.15 1.15 0 1 1 2.30 0a1.15 1.15 0 1 1 -2.30 0zM978.40 336.34h2.45v2.30h-2.45zM979.70 337.49a1.15 1.15 0 1 1 2.30 0a1.15 1.15 0 1 1 -2.30 0zM980.85 336.34h2.45v2.30h-2.45zM982.00 337.49v2.45h-2.30v-2.45zM982.15 337.49a1.15 1.15 0 1 1 2.30 0a1.15 1.15 0 1 1 -2.30 0zM984.45 337.49v2.45h-2.30v-2.45zM991.95 337.49a1.15 1.15 0 1 1 2.30 0a1.15 1.15 0 1 1 -2.30 0zM994.25 337.49v2.45h-2.30v-2.45zM996.84 337.49a1.15 1.15 0 1 1 2.30 0a1.15 1.15 0 1 1 -2.30 0zM1001.74 337.49a1.15 1.15 0 1 1 2.30 0a1.15 1.15 0 1 1 -2.30 0zM1004.04 337.49v2.45h-2.30v-2.45zM1011.54 337.49a1.15 1.15 0 1 1 2.30 0a1.15 1.15 0 1 1 -2.30 0zM1012.69 336.34h2.45v2.30h-2.45zM1013.99 337.49a1.15 1.15 0 1 1 2.30 0a1.15 1.15 0 1 1 -2.30 0zM1018.89 337.49a1.15 1.15 0 1 1 2.30 0a1.15 1.15 0 1 1 -2.30 0zM1023.78 337.49a1.15 1.15 0 1 1 2.30 0a1.15 1.15 0 1 1 -2.30 0zM1028.68 337.49a1.15 1.15 0 1 1 2.30 0a1.15 1.15 0 1 1 -2.30 0zM1029.83 336.34h2.45v2.30h-2.45zM1031.13 337.49a1.15 1.15 0 1 1 2.30 0a1.15 1.15 0 1 1 -2.30 0zM1032.28 336.34h2.45v2.30h-2.45zM1033.43 337.49v2.45h-2.30v-2.45zM1033.58 337.49a1.15 1.15 0 1 1 2.30 0a1.15 1.15 0 1 1 -2.30 0zM1034.73 336.34h2.45v2.30h-2.45zM1036.03 337.49a1.15 1.15 0 1 1 2.30 0a1.15 1.15 0 1 1 -2.30 0zM1037.18 336.34h2.45v2.30h-2.45zM1038.48 337.49a1.15 1.15 0 1 1 2.30 0a1.15 1.15 0 1 1 -2.30 0zM1039.63 336.34h2.45v2.30h-2.45zM1040.78 337.49v2.45h-2.30v-2.45zM1040.93 337.49a1.15 1.15 0 1 1 2.30 0a1.15 1.15 0 1 1 -2.30 0zM1043.23 337.49v2.45h-2.30v-2.45zM1045.82 337.49a1.15 1.15 0 1 1 2.30 0a1.15 1.15 0 1 1 -2.30 0zM1048.13 337.49v2.45h-2.30v-2.45zM928.27 339.94a1.15 1.15 0 1 1 2.30 0a1.15 1.15 0 1 1 -2.30 0zM929.42 338.79h2.45v2.30h-2.45zM930.58 339.94v2.45h-2.30v-2.45zM930.72 339.94a1.15 1.15 0 1 1 2.30 0a1.15 1.15 0 1 1 -2.30 0zM931.87 338.79h2.45v2.30h-2.45zM933.02 339.94v2.45h-2.30v-2.45zM933.17 339.94a1.15 1.15 0 1 1 2.30 0a1.15 1.15 0 1 1 -2.30 0zM934.32 338.79h2.45v2.30h-2.45zM935.47 339.94v2.45h-2.30v-2.45zM935.62 339.94a1.15 1.15 0 1 1 2.30 0a1.15 1.15 0 1 1 -2.30 0zM937.92 339.94v2.45h-2.30v-2.45zM945.42 339.94a1.15 1.15 0 1 1 2.30 0a1.15 1.15 0 1 1 -2.30 0zM952.76 339.94a1.15 1.15 0 1 1 2.30 0a1.15 1.15 0 1 1 -2.30 0zM955.07 339.94v2.45h-2.30v-2.45zM962.56 339.94a1.15 1.15 0 1 1 2.30 0a1.15 1.15 0 1 1 -2.30 0zM964.86 339.94v2.45h-2.30v-2.45zM969.91 339.94a1.15 1.15 0 1 1 2.30 0a1.15 1.15 0 1 1 -2.30 0zM971.06 338.79h2.45v2.30h-2.45zM972.21 339.94v2.45h-2.30v-2.45zM972.36 339.94a1.15 1.15 0 1 1 2.30 0a1.15 1.15 0 1 1 -2.30 0zM979.70 339.94a1.15 1.15 0 1 1 2.30 0a1.15 1.15 0 1 1 -2.30 0zM980.85 338.79h2.45v2.30h-2.45zM982.15 339.94a1.15 1.15 0 1 1 2.30 0a1.15 1.15 0 1 1 -2.30 0zM983.30 338.79h2.45v2.30h-2.45zM984.60 339.94a1.15 1.15 0 1 1 2.30 0a1.15 1.15 0 1 1 -2.30 0zM985.75 338.79h2.45v2.30h-2.45zM987.05 339.94a1.15 1.15 0 1 1 2.30 0a1.15 1.15 0 1 1 -2.30 0zM989.35 339.94v2.45h-2.30v-2.45zM991.95 339.94a1.15 1.15 0 1 1 2.30 0a1.15 1.15 0 1 1 -2.30 0zM993.10 338.79h2.45v2.30h-2.45zM994.40 339.94a1.15 1.15 0 1 1 2.30 0a1.15 1.15 0 1 1 -2.30 0zM996.70 339.94v2.45h-2.30v-2.45zM1001.74 339.94a1.15 1.15 0 1 1 2.30 0a1.15 1.15 0 1 1 -2.30 0zM1021.33 339.94a1.15 1.15 0 1 1 2.30 0a1.15 1.15 0 1 1 -2.30 0zM1023.64 339.94v2.45h-2.30v-2.45zM1031.13 339.94a1.15 1.15 0 1 1 2.30 0a1.15 1.15 0 1 1 -2.30 0zM1038.48 339.94a1.15 1.15 0 1 1 2.30 0a1.15 1.15 0 1 1 -2.30 0zM1039.63 338.79h2.45v2.30h-2.45zM1040.78 339.94v2.45h-2.30v-2.45zM1040.93 339.94a1.15 1.15 0 1 1 2.30 0a1.15 1.15 0 1 1 -2.30 0zM1042.08 338.79h2.45v2.30h-2.45zM1043.38 339.94a1.15 1.15 0 1 1 2.30 0a1.15 1.15 0 1 1 -2.30 0zM1044.53 338.79h2.45v2.30h-2.45zM1045.68 339.94v2.45h-2.30v-2.45zM1045.82 339.94a1.15 1.15 0 1 1 2.30 0a1.15 1.15 0 1 1 -2.30 0zM928.27 342.39a1.15 1.15 0 1 1 2.30 0a1.15 1.15 0 1 1 -2.30 0zM929.42 341.24h2.45v2.30h-2.45zM930.72 342.39a1.15 1.15 0 1 1 2.30 0a1.15 1.15 0 1 1 -2.30 0zM931.87 341.24h2.45v2.30h-2.45zM933.17 342.39a1.15 1.15 0 1 1 2.30 0a1.15 1.15 0 1 1 -2.30 0zM934.32 341.24h2.45v2.30h-2.45zM935.62 342.39a1.15 1.15 0 1 1 2.30 0a1.15 1.15 0 1 1 -2.30 0zM936.77 341.24h2.45v2.30h-2.45zM937.92 342.39v2.45h-2.30v-2.45zM938.07 342.39a1.15 1.15 0 1 1 2.30 0a1.15 1.15 0 1 1 -2.30 0zM940.37 342.39v2.45h-2.30v-2.45zM942.97 342.39a1.15 1.15 0 1 1 2.30 0a1.15 1.15 0 1 1 -2.30 0zM947.87 342.39a1.15 1.15 0 1 1 2.30 0a1.15 1.15 0 1 1 -2.30 0zM952.76 342.39a1.15 1.15 0 1 1 2.30 0a1.15 1.15 0 1 1 -2.30 0zM955.07 342.39v2.45h-2.30v-2.45zM962.56 342.39a1.15 1.15 0 1 1 2.30 0a1.15 1.15 0 1 1 -2.30 0zM963.71 341.24h2.45v2.30h-2.45zM964.86 342.39v2.45h-2.30v-2.45zM965.01 342.39a1.15 1.15 0 1 1 2.30 0a1.15 1.15 0 1 1 -2.30 0zM967.31 342.39v2.45h-2.30v-2.45zM969.91 342.39a1.15 1.15 0 1 1 2.30 0a1.15 1.15 0 1 1 -2.30 0zM972.21 342.39v2.45h-2.30v-2.45zM977.25 342.39a1.15 1.15 0 1 1 2.30 0a1.15 1.15 0 1 1 -2.30 0zM987.05 342.39a1.15 1.15 0 1 1 2.30 0a1.15 1.15 0 1 1 -2.30 0zM994.40 342.39a1.15 1.15 0 1 1 2.30 0a1.15 1.15 0 1 1 -2.30 0zM999.29 342.39a1.15 1.15 0 1 1 2.30 0a1.15 1.15 0 1 1 -2.30 0zM1001.60 342.39v2.45h-2.30v-2.45zM1006.64 342.39a1.15 1.15 0 1 1 2.30 0a1.15 1.15 0 1 1 -2.30 0zM1011.54 342.39a1.15 1.15 0 1 1 2.30 0a1.15 1.15 0 1 1 -2.30 0zM1012.69 341.24h2.45v2.30h-2.45zM1013.84 342.39v2.45h-2.30v-2.45zM1013.99 342.39a1.15 1.15 0 1 1 2.30 0a1.15 1.15 0 1 1 -2.30 0zM1016.29 342.39v2.45h-2.30v-2.45zM1021.33 342.39a1.15 1.15 0 1 1 2.30 0a1.15 1.15 0 1 1 -2.30 0zM1022.49 341.24h2.45v2.30h-2.45zM1023.78 342.39a1.15 1.15 0 1 1 2.30 0a1.15 1.15 0 1 1 -2.30 0zM1024.93 341.24h2.45v2.30h-2.45zM1026.09 342.39v2.45h-2.30v-2.45zM1026.23 342.39a1.15 1.15 0 1 1 2.30 0a1.15 1.15 0 1 1 -2.30 0zM1033.58 342.39a1.15 1.15 0 1 1 2.30 0a1.15 1.15 0 1 1 -2.30 0zM1035.88 342.39v2.45h-2.30v-2.45zM1038.48 342.39a1.15 1.15 0 1 1 2.30 0a1.15 1.15 0 1 1 -2.30 0zM1040.78 342.39v2.45h-2.30v-2.45zM1043.38 342.39a1.15 1.15 0 1 1 2.30 0a1.15 1.15 0 1 1 -2.30 0zM1045.68 342.39v2.45h-2.30v-2.45zM935.62 344.84a1.15 1.15 0 1 1 2.30 0a1.15 1.15 0 1 1 -2.30 0zM936.77 343.69h2.45v2.30h-2.45zM937.92 344.84v2.45h-2.30v-2.45zM938.07 344.84a1.15 1.15 0 1 1 2.30 0a1.15 1.15 0 1 1 -2.30 0zM939.22 343.69h2.45v2.30h-2.45zM940.37 344.84v2.45h-2.30v-2.45zM940.52 344.84a1.15 1.15 0 1 1 2.30 0a1.15 1.15 0 1 1 -2.30 0zM952.76 344.84a1.15 1.15 0 1 1 2.30 0a1.15 1.15 0 1 1 -2.30 0zM955.07 344.84v2.45h-2.30v-2.45zM962.56 344.84a1.15 1.15 0 1 1 2.30 0a1.15 1.15 0 1 1 -2.30 0zM963.71 343.69h2.45v2.30h-2.45zM965.01 344.84a1.15 1.15 0 1 1 2.30 0a1.15 1.15 0 1 1 -2.30 0zM966.16 343.69h2.45v2.30h-2.45zM967.31 344.84v2.45h-2.30v-2.45zM967.46 344.84a1.15 1.15 0 1 1 2.30 0a1.15 1.15 0 1 1 -2.30 0zM968.61 343.69h2.45v2.30h-2.45zM969.76 344.84v2.45h-2.30v-2.45zM969.91 344.84a1.15 1.15 0 1 1 2.30 0a1.15 1.15 0 1 1 -2.30 0zM972.21 344.84v2.45h-2.30v-2.45zM999.29 344.84a1.15 1.15 0 1 1 2.30 0a1.15 1.15 0 1 1 -2.30 0zM1001.60 344.84v2.45h-2.30v-2.45zM1004.19 344.84a1.15 1.15 0 1 1 2.30 0a1.15 1.15 0 1 1 -2.30 0zM1006.49 344.84v2.45h-2.30v-2.45zM1009.09 344.84a1.15 1.15 0 1 1 2.30 0a1.15 1.15 0 1 1 -2.30 0zM1010.24 343.69h2.45v2.30h-2.45zM1011.39 344.84v2.45h-2.30v-2.45zM1011.54 344.84a1.15 1.15 0 1 1 2.30 0a1.15 1.15 0 1 1 -2.30 0zM1012.69 343.69h2.45v2.30h-2.45zM1013.84 344.84v2.45h-2.30v-2.45zM1013.99 344.84a1.15 1.15 0 1 1 2.30 0a1.15 1.15 0 1 1 -2.30 0zM1023.78 344.84a1.15 1.15 0 1 1 2.30 0a1.15 1.15 0 1 1 -2.30 0zM1026.09 344.84v2.45h-2.30v-2.45zM1033.58 344.84a1.15 1.15 0 1 1 2.30 0a1.15 1.15 0 1 1 -2.30 0zM1034.73 343.69h2.45v2.30h-2.45zM1036.03 344.84a1.15 1.15 0 1 1 2.30 0a1.15 1.15 0 1 1 -2.30 0zM1037.18 343.69h2.45v2.30h-2.45zM1038.33 344.84v2.45h-2.30v-2.45zM1038.48 344.84a1.15 1.15 0 1 1 2.30 0a1.15 1.15 0 1 1 -2.30 0zM1039.63 343.69h2.45v2.30h-2.45zM1040.93 344.84a1.15 1.15 0 1 1 2.30 0a1.15 1.15 0 1 1 -2.30 0zM1042.08 343.69h2.45v2.30h-2.45zM1043.38 344.84a1.15 1.15 0 1 1 2.30 0a1.15 1.15 0 1 1 -2.30 0zM1045.68 344.84v2.45h-2.30v-2.45zM930.72 347.29a1.15 1.15 0 1 1 2.30 0a1.15 1.15 0 1 1 -2.30 0zM935.62 347.29a1.15 1.15 0 1 1 2.30 0a1.15 1.15 0 1 1 -2.30 0zM936.77 346.13h2.45v2.30h-2.45zM937.92 347.29v2.45h-2.30v-2.45zM938.07 347.29a1.15 1.15 0 1 1 2.30 0a1.15 1.15 0 1 1 -2.30 0zM942.97 347.29a1.15 1.15 0 1 1 2.30 0a1.15 1.15 0 1 1 -2.30 0zM950.31 347.29a1.15 1.15 0 1 1 2.30 0a1.15 1.15 0 1 1 -2.30 0zM951.47 346.13h2.45v2.30h-2.45zM952.62 347.29v2.45h-2.30v-2.45zM952.76 347.29a1.15 1.15 0 1 1 2.30 0a1.15 1.15 0 1 1 -2.30 0zM953.91 346.13h2.45v2.30h-2.45zM955.07 347.29v2.45h-2.30v-2.45zM955.21 347.29a1.15 1.15 0 1 1 2.30 0a1.15 1.15 0 1 1 -2.30 0zM965.01 347.29a1.15 1.15 0 1 1 2.30 0a1.15 1.15 0 1 1 -2.30 0zM966.16 346.13h2.45v2.30h-2.45zM967.46 347.29a1.15 1.15 0 1 1 2.30 0a1.15 1.15 0 1 1 -2.30 0zM968.61 346.13h2.45v2.30h-2.45zM969.76 347.29v2.45h-2.30v-2.45zM969.91 347.29a1.15 1.15 0 1 1 2.30 0a1.15 1.15 0 1 1 -2.30 0zM974.80 347.29a1.15 1.15 0 1 1 2.30 0a1.15 1.15 0 1 1 -2.30 0zM975.96 346.13h2.45v2.30h-2.45zM977.11 347.29v2.45h-2.30v-2.45zM977.25 347.29a1.15 1.15 0 1 1 2.30 0a1.15 1.15 0 1 1 -2.30 0zM978.40 346.13h2.45v2.30h-2.45zM979.56 347.29v2.45h-2.30v-2.45zM979.70 347.29a1.15 1.15 0 1 1 2.30 0a1.15 1.15 0 1 1 -2.30 0zM980.85 346.13h2.45v2.30h-2.45zM982.15 347.29a1.15 1.15 0 1 1 2.30 0a1.15 1.15 0 1 1 -2.30 0zM987.05 347.29a1.15 1.15 0 1 1 2.30 0a1.15 1.15 0 1 1 -2.30 0zM991.95 347.29a1.15 1.15 0 1 1 2.30 0a1.15 1.15 0 1 1 -2.30 0zM994.25 347.29v2.45h-2.30v-2.45zM996.84 347.29a1.15 1.15 0 1 1 2.30 0a1.15 1.15 0 1 1 -2.30 0zM998.00 346.13h2.45v2.30h-2.45zM999.29 347.29a1.15 1.15 0 1 1 2.30 0a1.15 1.15 0 1 1 -2.30 0zM1004.19 347.29a1.15 1.15 0 1 1 2.30 0a1.15 1.15 0 1 1 -2.30 0zM1009.09 347.29a1.15 1.15 0 1 1 2.30 0a1.15 1.15 0 1 1 -2.30 0zM1010.24 346.13h2.45v2.30h-2.45zM1011.54 347.29a1.15 1.15 0 1 1 2.30 0a1.15 1.15 0 1 1 -2.30 0zM1023.78 347.29a1.15 1.15 0 1 1 2.30 0a1.15 1.15 0 1 1 -2.30 0zM1031.13 347.29a1.15 1.15 0 1 1 2.30 0a1.15 1.15 0 1 1 -2.30 0zM1036.03 347.29a1.15 1.15 0 1 1 2.30 0a1.15 1.15 0 1 1 -2.30 0zM1038.33 347.29v2.45h-2.30v-2.45zM1043.38 347.29a1.15 1.15 0 1 1 2.30 0a1.15 1.15 0 1 1 -2.30 0zM1044.53 346.13h2.45v2.30h-2.45zM1045.82 347.29a1.15 1.15 0 1 1 2.30 0a1.15 1.15 0 1 1 -2.30 0zM933.17 349.73a1.15 1.15 0 1 1 2.30 0a1.15 1.15 0 1 1 -2.30 0zM934.32 348.58h2.45v2.30h-2.45zM935.62 349.73a1.15 1.15 0 1 1 2.30 0a1.15 1.15 0 1 1 -2.30 0zM940.52 349.73a1.15 1.15 0 1 1 2.30 0a1.15 1.15 0 1 1 -2.30 0zM947.87 349.73a1.15 1.15 0 1 1 2.30 0a1.15 1.15 0 1 1 -2.30 0zM949.02 348.58h2.45v2.30h-2.45zM950.31 349.73a1.15 1.15 0 1 1 2.30 0a1.15 1.15 0 1 1 -2.30 0zM951.47 348.58h2.45v2.30h-2.45zM952.76 349.73a1.15 1.15 0 1 1 2.30 0a1.15 1.15 0 1 1 -2.30 0zM957.66 349.73a1.15 1.15 0 1 1 2.30 0a1.15 1.15 0 1 1 -2.30 0zM959.96 349.73v2.45h-2.30v-2.45zM962.56 349.73a1.15 1.15 0 1 1 2.30 0a1.15 1.15 0 1 1 -2.30 0zM967.46 349.73a1.15 1.15 0 1 1 2.30 0a1.15 1.15 0 1 1 -2.30 0zM969.76 349.73v2.45h-2.30v-2.45zM974.80 349.73a1.15 1.15 0 1 1 2.30 0a1.15 1.15 0 1 1 -2.30 0zM975.96 348.58h2.45v2.30h-2.45zM977.11 349.73v2.45h-2.30v-2.45zM977.25 349.73a1.15 1.15 0 1 1 2.30 0a1.15 1.15 0 1 1 -2.30 0zM989.50 349.73a1.15 1.15 0 1 1 2.30 0a1.15 1.15 0 1 1 -2.30 0zM990.65 348.58h2.45v2.30h-2.45zM991.80 349.73v2.45h-2.30v-2.45zM991.95 349.73a1.15 1.15 0 1 1 2.30 0a1.15 1.15 0 1 1 -2.30 0zM994.25 349.73v2.45h-2.30v-2.45zM1001.74 349.73a1.15 1.15 0 1 1 2.30 0a1.15 1.15 0 1 1 -2.30 0zM1013.99 349.73a1.15 1.15 0 1 1 2.30 0a1.15 1.15 0 1 1 -2.30 0zM1015.14 348.58h2.45v2.30h-2.45zM1016.44 349.73a1.15 1.15 0 1 1 2.30 0a1.15 1.15 0 1 1 -2.30 0zM1018.74 349.73v2.45h-2.30v-2.45zM1021.33 349.73a1.15 1.15 0 1 1 2.30 0a1.15 1.15 0 1 1 -2.30 0zM1033.58 349.73a1.15 1.15 0 1 1 2.30 0a1.15 1.15 0 1 1 -2.30 0zM1034.73 348.58h2.45v2.30h-2.45zM1035.88 349.73v2.45h-2.30v-2.45zM1036.03 349.73a1.15 1.15 0 1 1 2.30 0a1.15 1.15 0 1 1 -2.30 0zM1037.18 348.58h2.45v2.30h-2.45zM1038.33 349.73v2.45h-2.30v-2.45zM1038.48 349.73a1.15 1.15 0 1 1 2.30 0a1.15 1.15 0 1 1 -2.30 0zM1039.63 348.58h2.45v2.30h-2.45zM1040.93 349.73a1.15 1.15 0 1 1 2.30 0a1.15 1.15 0 1 1 -2.30 0zM1043.23 349.73v2.45h-2.30v-2.45zM930.72 352.18a1.15 1.15 0 1 1 2.30 0a1.15 1.15 0 1 1 -2.30 0zM942.97 352.18a1.15 1.15 0 1 1 2.30 0a1.15 1.15 0 1 1 -2.30 0zM944.12 351.03h2.45v2.30h-2.45zM945.42 352.18a1.15 1.15 0 1 1 2.30 0a1.15 1.15 0 1 1 -2.30 0zM957.66 352.18a1.15 1.15 0 1 1 2.30 0a1.15 1.15 0 1 1 -2.30 0zM958.81 351.03h2.45v2.30h-2.45zM960.11 352.18a1.15 1.15 0 1 1 2.30 0a1.15 1.15 0 1 1 -2.30 0zM962.41 352.18v2.45h-2.30v-2.45zM967.46 352.18a1.15 1.15 0 1 1 2.30 0a1.15 1.15 0 1 1 -2.30 0zM969.76 352.18v2.45h-2.30v-2.45zM974.80 352.18a1.15 1.15 0 1 1 2.30 0a1.15 1.15 0 1 1 -2.30 0zM977.11 352.18v2.45h-2.30v-2.45zM982.15 352.18a1.15 1.15 0 1 1 2.30 0a1.15 1.15 0 1 1 -2.30 0zM983.30 351.03h2.45v2.30h-2.45zM984.45 352.18v2.45h-2.30v-2.45zM984.60 352.18a1.15 1.15 0 1 1 2.30 0a1.15 1.15 0 1 1 -2.30 0zM985.75 351.03h2.45v2.30h-2.45zM987.05 352.18a1.15 1.15 0 1 1 2.30 0a1.15 1.15 0 1 1 -2.30 0zM988.20 351.03h2.45v2.30h-2.45zM989.50 352.18a1.15 1.15 0 1 1 2.30 0a1.15 1.15 0 1 1 -2.30 0zM990.65 351.03h2.45v2.30h-2.45zM991.95 352.18a1.15 1.15 0 1 1 2.30 0a1.15 1.15 0 1 1 -2.30 0zM993.10 351.03h2.45v2.30h-2.45zM994.25 352.18v2.45h-2.30v-2.45zM994.40 352.18a1.15 1.15 0 1 1 2.30 0a1.15 1.15 0 1 1 -2.30 0zM995.55 351.03h2.45v2.30h-2.45zM996.70 352.18v2.45h-2.30v-2.45zM996.84 352.18a1.15 1.15 0 1 1 2.30 0a1.15 1.15 0 1 1 -2.30 0zM998.00 351.03h2.45v2.30h-2.45zM999.29 352.18a1.15 1.15 0 1 1 2.30 0a1.15 1.15 0 1 1 -2.30 0zM1001.60 352.18v2.45h-2.30v-2.45zM1006.64 352.18a1.15 1.15 0 1 1 2.30 0a1.15 1.15 0 1 1 -2.30 0zM1007.79 351.03h2.45v2.30h-2.45zM1008.94 352.18v2.45h-2.30v-2.45zM1009.09 352.18a1.15 1.15 0 1 1 2.30 0a1.15 1.15 0 1 1 -2.30 0zM1016.44 352.18a1.15 1.15 0 1 1 2.30 0a1.15 1.15 0 1 1 -2.30 0zM1026.23 352.18a1.15 1.15 0 1 1 2.30 0a1.15 1.15 0 1 1 -2.30 0zM1027.38 351.03h2.45v2.30h-2.45zM1028.53 352.18v2.45h-2.30v-2.45zM1028.68 352.18a1.15 1.15 0 1 1 2.30 0a1.15 1.15 0 1 1 -2.30 0zM1029.83 351.03h2.45v2.30h-2.45zM1031.13 352.18a1.15 1.15 0 1 1 2.30 0a1.15 1.15 0 1 1 -2.30 0zM1032.28 351.03h2.45v2.30h-2.45zM1033.58 352.18a1.15 1.15 0 1 1 2.30 0a1.15 1.15 0 1 1 -2.30 0zM1034.73 351.03h2.45v2.30h-2.45zM1036.03 352.18a1.15 1.15 0 1 1 2.30 0a1.15 1.15 0 1 1 -2.30 0zM1038.33 352.18v2.45h-2.30v-2.45zM1040.93 352.18a1.15 1.15 0 1 1 2.30 0a1.15 1.15 0 1 1 -2.30 0zM1045.82 352.18a1.15 1.15 0 1 1 2.30 0a1.15 1.15 0 1 1 -2.30 0zM947.87 354.63a1.15 1.15 0 1 1 2.30 0a1.15 1.15 0 1 1 -2.30 0zM949.02 353.48h2.45v2.30h-2.45zM950.17 354.63v2.45h-2.30v-2.45zM950.31 354.63a1.15 1.15 0 1 1 2.30 0a1.15 1.15 0 1 1 -2.30 0zM952.62 354.63v2.45h-2.30v-2.45zM955.21 354.63a1.15 1.15 0 1 1 2.30 0a1.15 1.15 0 1 1 -2.30 0zM957.51 354.63v2.45h-2.30v-2.45zM960.11 354.63a1.15 1.15 0 1 1 2.30 0a1.15 1.15 0 1 1 -2.30 0zM962.41 354.63v2.45h-2.30v-2.45zM965.01 354.63a1.15 1.15 0 1 1 2.30 0a1.15 1.15 0 1 1 -2.30 0zM966.16 353.48h2.45v2.30h-2.45zM967.46 354.63a1.15 1.15 0 1 1 2.30 0a1.15 1.15 0 1 1 -2.30 0zM969.76 354.63v2.45h-2.30v-2.45zM972.36 354.63a1.15 1.15 0 1 1 2.30 0a1.15 1.15 0 1 1 -2.30 0zM973.51 353.48h2.45v2.30h-2.45zM974.80 354.63a1.15 1.15 0 1 1 2.30 0a1.15 1.15 0 1 1 -2.30 0zM977.11 354.63v2.45h-2.30v-2.45zM982.15 354.63a1.15 1.15 0 1 1 2.30 0a1.15 1.15 0 1 1 -2.30 0zM984.45 354.63v2.45h-2.30v-2.45zM991.95 354.63a1.15 1.15 0 1 1 2.30 0a1.15 1.15 0 1 1 -2.30 0zM993.10 353.48h2.45v2.30h-2.45zM994.25 354.63v2.45h-2.30v-2.45zM994.40 354.63a1.15 1.15 0 1 1 2.30 0a1.15 1.15 0 1 1 -2.30 0zM996.70 354.63v2.45h-2.30v-2.45zM999.29 354.63a1.15 1.15 0 1 1 2.30 0a1.15 1.15 0 1 1 -2.30 0zM1001.60 354.63v2.45h-2.30v-2.45zM1004.19 354.63a1.15 1.15 0 1 1 2.30 0a1.15 1.15 0 1 1 -2.30 0zM1005.34 353.48h2.45v2.30h-2.45zM1006.64 354.63a1.15 1.15 0 1 1 2.30 0a1.15 1.15 0 1 1 -2.30 0zM1013.99 354.63a1.15 1.15 0 1 1 2.30 0a1.15 1.15 0 1 1 -2.30 0zM1016.29 354.63v2.45h-2.30v-2.45zM1018.89 354.63a1.15 1.15 0 1 1 2.30 0a1.15 1.15 0 1 1 -2.30 0zM1023.78 354.63a1.15 1.15 0 1 1 2.30 0a1.15 1.15 0 1 1 -2.30 0zM1024.93 353.48h2.45v2.30h-2.45zM1026.09 354.63v2.45h-2.30v-2.45zM1026.23 354.63a1.15 1.15 0 1 1 2.30 0a1.15 1.15 0 1 1 -2.30 0zM1028.53 354.63v2.45h-2.30v-2.45zM1036.03 354.63a1.15 1.15 0 1 1 2.30 0a1.15 1.15 0 1 1 -2.30 0zM1038.33 354.63v2.45h-2.30v-2.45zM947.87 357.08a1.15 1.15 0 1 1 2.30 0a1.15 1.15 0 1 1 -2.30 0zM949.02 355.93h2.45v2.30h-2.45zM950.31 357.08a1.15 1.15 0 1 1 2.30 0a1.15 1.15 0 1 1 -2.30 0zM951.47 355.93h2.45v2.30h-2.45zM952.76 357.08a1.15 1.15 0 1 1 2.30 0a1.15 1.15 0 1 1 -2.30 0zM953.91 355.93h2.45v2.30h-2.45zM955.07 357.08v2.45h-2.30v-2.45zM955.21 357.08a1.15 1.15 0 1 1 2.30 0a1.15 1.15 0 1 1 -2.30 0zM956.36 355.93h2.45v2.30h-2.45zM957.66 357.08a1.15 1.15 0 1 1 2.30 0a1.15 1.15 0 1 1 -2.30 0zM958.81 355.93h2.45v2.30h-2.45zM960.11 357.08a1.15 1.15 0 1 1 2.30 0a1.15 1.15 0 1 1 -2.30 0zM967.46 357.08a1.15 1.15 0 1 1 2.30 0a1.15 1.15 0 1 1 -2.30 0zM969.76 357.08v2.45h-2.30v-2.45zM974.80 357.08a1.15 1.15 0 1 1 2.30 0a1.15 1.15 0 1 1 -2.30 0zM979.70 357.08a1.15 1.15 0 1 1 2.30 0a1.15 1.15 0 1 1 -2.30 0zM980.85 355.93h2.45v2.30h-2.45zM982.15 357.08a1.15 1.15 0 1 1 2.30 0a1.15 1.15 0 1 1 -2.30 0zM984.45 357.08v2.45h-2.30v-2.45zM987.05 357.08a1.15 1.15 0 1 1 2.30 0a1.15 1.15 0 1 1 -2.30 0zM991.95 357.08a1.15 1.15 0 1 1 2.30 0a1.15 1.15 0 1 1 -2.30 0zM993.10 355.93h2.45v2.30h-2.45zM994.25 357.08v2.45h-2.30v-2.45zM994.40 357.08a1.15 1.15 0 1 1 2.30 0a1.15 1.15 0 1 1 -2.30 0zM999.29 357.08a1.15 1.15 0 1 1 2.30 0a1.15 1.15 0 1 1 -2.30 0zM1001.60 357.08v2.45h-2.30v-2.45zM1011.54 357.08a1.15 1.15 0 1 1 2.30 0a1.15 1.15 0 1 1 -2.30 0zM1012.69 355.93h2.45v2.30h-2.45zM1013.84 357.08v2.45h-2.30v-2.45zM1013.99 357.08a1.15 1.15 0 1 1 2.30 0a1.15 1.15 0 1 1 -2.30 0zM1015.14 355.93h2.45v2.30h-2.45zM1016.29 357.08v2.45h-2.30v-2.45zM1016.44 357.08a1.15 1.15 0 1 1 2.30 0a1.15 1.15 0 1 1 -2.30 0zM1023.78 357.08a1.15 1.15 0 1 1 2.30 0a1.15 1.15 0 1 1 -2.30 0zM1024.93 355.93h2.45v2.30h-2.45zM1026.09 357.08v2.45h-2.30v-2.45zM1026.23 357.08a1.15 1.15 0 1 1 2.30 0a1.15 1.15 0 1 1 -2.30 0zM1028.53 357.08v2.45h-2.30v-2.45zM1031.13 357.08a1.15 1.15 0 1 1 2.30 0a1.15 1.15 0 1 1 -2.30 0zM1036.03 357.08a1.15 1.15 0 1 1 2.30 0a1.15 1.15 0 1 1 -2.30 0zM1037.18 355.93h2.45v2.30h-2.45zM1038.33 357.08v2.45h-2.30v-2.45zM1038.48 357.08a1.15 1.15 0 1 1 2.30 0a1.15 1.15 0 1 1 -2.30 0zM1039.63 355.93h2.45v2.30h-2.45zM1040.78 357.08v2.45h-2.30v-2.45zM1040.93 357.08a1.15 1.15 0 1 1 2.30 0a1.15 1.15 0 1 1 -2.30 0zM1042.08 355.93h2.45v2.30h-2.45zM1043.38 357.08a1.15 1.15 0 1 1 2.30 0a1.15 1.15 0 1 1 -2.30 0zM1045.68 357.08v2.45h-2.30v-2.45zM952.76 359.53a1.15 1.15 0 1 1 2.30 0a1.15 1.15 0 1 1 -2.30 0zM955.07 359.53v2.45h-2.30v-2.45zM965.01 359.53a1.15 1.15 0 1 1 2.30 0a1.15 1.15 0 1 1 -2.30 0zM966.16 358.38h2.45v2.30h-2.45zM967.46 359.53a1.15 1.15 0 1 1 2.30 0a1.15 1.15 0 1 1 -2.30 0zM969.76 359.53v2.45h-2.30v-2.45zM977.25 359.53a1.15 1.15 0 1 1 2.30 0a1.15 1.15 0 1 1 -2.30 0zM982.15 359.53a1.15 1.15 0 1 1 2.30 0a1.15 1.15 0 1 1 -2.30 0zM984.45 359.53v2.45h-2.30v-2.45zM991.95 359.53a1.15 1.15 0 1 1 2.30 0a1.15 1.15 0 1 1 -2.30 0zM994.25 359.53v2.45h-2.30v-2.45zM996.84 359.53a1.15 1.15 0 1 1 2.30 0a1.15 1.15 0 1 1 -2.30 0zM998.00 358.38h2.45v2.30h-2.45zM999.15 359.53v2.45h-2.30v-2.45zM999.29 359.53a1.15 1.15 0 1 1 2.30 0a1.15 1.15 0 1 1 -2.30 0zM1000.44 358.38h2.45v2.30h-2.45zM1001.74 359.53a1.15 1.15 0 1 1 2.30 0a1.15 1.15 0 1 1 -2.30 0zM1002.89 358.38h2.45v2.30h-2.45zM1004.19 359.53a1.15 1.15 0 1 1 2.30 0a1.15 1.15 0 1 1 -2.30 0zM1005.34 358.38h2.45v2.30h-2.45zM1006.49 359.53v2.45h-2.30v-2.45zM1006.64 359.53a1.15 1.15 0 1 1 2.30 0a1.15 1.15 0 1 1 -2.30 0zM1007.79 358.38h2.45v2.30h-2.45zM1009.09 359.53a1.15 1.15 0 1 1 2.30 0a1.15 1.15 0 1 1 -2.30 0zM1010.24 358.38h2.45v2.30h-2.45zM1011.39 359.53v2.45h-2.30v-2.45zM1011.54 359.53a1.15 1.15 0 1 1 2.30 0a1.15 1.15 0 1 1 -2.30 0zM1012.69 358.38h2.45v2.30h-2.45zM1013.84 359.53v2.45h-2.30v-2.45zM1013.99 359.53a1.15 1.15 0 1 1 2.30 0a1.15 1.15 0 1 1 -2.30 0zM1016.29 359.53v2.45h-2.30v-2.45zM1018.89 359.53a1.15 1.15 0 1 1 2.30 0a1.15 1.15 0 1 1 -2.30 0zM1023.78 359.53a1.15 1.15 0 1 1 2.30 0a1.15 1.15 0 1 1 -2.30 0zM1024.93 358.38h2.45v2.30h-2.45zM1026.09 359.53v2.45h-2.30v-2.45zM1026.23 359.53a1.15 1.15 0 1 1 2.30 0a1.15 1.15 0 1 1 -2.30 0zM1028.53 359.53v2.45h-2.30v-2.45zM1036.03 359.53a1.15 1.15 0 1 1 2.30 0a1.15 1.15 0 1 1 -2.30 0zM1037.18 358.38h2.45v2.30h-2.45zM1038.33 359.53v2.45h-2.30v-2.45zM1038.48 359.53a1.15 1.15 0 1 1 2.30 0a1.15 1.15 0 1 1 -2.30 0zM1040.78 359.53v2.45h-2.30v-2.45zM1043.38 359.53a1.15 1.15 0 1 1 2.30 0a1.15 1.15 0 1 1 -2.30 0zM952.76 361.98a1.15 1.15 0 1 1 2.30 0a1.15 1.15 0 1 1 -2.30 0zM953.91 360.83h2.45v2.30h-2.45zM955.21 361.98a1.15 1.15 0 1 1 2.30 0a1.15 1.15 0 1 1 -2.30 0zM956.36 360.83h2.45v2.30h-2.45zM957.66 361.98a1.15 1.15 0 1 1 2.30 0a1.15 1.15 0 1 1 -2.30 0zM959.96 361.98v2.45h-2.30v-2.45zM967.46 361.98a1.15 1.15 0 1 1 2.30 0a1.15 1.15 0 1 1 -2.30 0zM968.61 360.83h2.45v2.30h-2.45zM969.76 361.98v2.45h-2.30v-2.45zM969.91 361.98a1.15 1.15 0 1 1 2.30 0a1.15 1.15 0 1 1 -2.30 0zM972.21 361.98v2.45h-2.30v-2.45zM974.80 361.98a1.15 1.15 0 1 1 2.30 0a1.15 1.15 0 1 1 -2.30 0zM979.70 361.98a1.15 1.15 0 1 1 2.30 0a1.15 1.15 0 1 1 -2.30 0zM980.85 360.83h2.45v2.30h-2.45zM982.00 361.98v2.45h-2.30v-2.45zM982.15 361.98a1.15 1.15 0 1 1 2.30 0a1.15 1.15 0 1 1 -2.30 0zM983.30 360.83h2.45v2.30h-2.45zM984.45 361.98v2.45h-2.30v-2.45zM984.60 361.98a1.15 1.15 0 1 1 2.30 0a1.15 1.15 0 1 1 -2.30 0zM985.75 360.83h2.45v2.30h-2.45zM987.05 361.98a1.15 1.15 0 1 1 2.30 0a1.15 1.15 0 1 1 -2.30 0zM988.20 360.83h2.45v2.30h-2.45zM989.35 361.98v2.45h-2.30v-2.45zM989.50 361.98a1.15 1.15 0 1 1 2.30 0a1.15 1.15 0 1 1 -2.30 0zM990.65 360.83h2.45v2.30h-2.45zM991.95 361.98a1.15 1.15 0 1 1 2.30 0a1.15 1.15 0 1 1 -2.30 0zM993.10 360.83h2.45v2.30h-2.45zM994.25 361.98v2.45h-2.30v-2.45zM994.40 361.98a1.15 1.15 0 1 1 2.30 0a1.15 1.15 0 1 1 -2.30 0zM995.55 360.83h2.45v2.30h-2.45zM996.84 361.98a1.15 1.15 0 1 1 2.30 0a1.15 1.15 0 1 1 -2.30 0zM999.15 361.98v2.45h-2.30v-2.45zM1004.19 361.98a1.15 1.15 0 1 1 2.30 0a1.15 1.15 0 1 1 -2.30 0zM1006.49 361.98v2.45h-2.30v-2.45zM1009.09 361.98a1.15 1.15 0 1 1 2.30 0a1.15 1.15 0 1 1 -2.30 0zM1010.24 360.83h2.45v2.30h-2.45zM1011.54 361.98a1.15 1.15 0 1 1 2.30 0a1.15 1.15 0 1 1 -2.30 0zM1012.69 360.83h2.45v2.30h-2.45zM1013.99 361.98a1.15 1.15 0 1 1 2.30 0a1.15 1.15 0 1 1 -2.30 0zM1015.14 360.83h2.45v2.30h-2.45zM1016.29 361.98v2.45h-2.30v-2.45zM1016.44 361.98a1.15 1.15 0 1 1 2.30 0a1.15 1.15 0 1 1 -2.30 0zM1018.74 361.98v2.45h-2.30v-2.45zM1021.33 361.98a1.15 1.15 0 1 1 2.30 0a1.15 1.15 0 1 1 -2.30 0zM1022.49 360.83h2.45v2.30h-2.45zM1023.64 361.98v2.45h-2.30v-2.45zM1023.78 361.98a1.15 1.15 0 1 1 2.30 0a1.15 1.15 0 1 1 -2.30 0zM1024.93 360.83h2.45v2.30h-2.45zM1026.23 361.98a1.15 1.15 0 1 1 2.30 0a1.15 1.15 0 1 1 -2.30 0zM1027.38 360.83h2.45v2.30h-2.45zM1028.53 361.98v2.45h-2.30v-2.45zM1028.68 361.98a1.15 1.15 0 1 1 2.30 0a1.15 1.15 0 1 1 -2.30 0zM1029.83 360.83h2.45v2.30h-2.45zM1030.98 361.98v2.45h-2.30v-2.45zM1031.13 361.98a1.15 1.15 0 1 1 2.30 0a1.15 1.15 0 1 1 -2.30 0zM1032.28 360.83h2.45v2.30h-2.45zM1033.58 361.98a1.15 1.15 0 1 1 2.30 0a1.15 1.15 0 1 1 -2.30 0zM1034.73 360.83h2.45v2.30h-2.45zM1036.03 361.98a1.15 1.15 0 1 1 2.30 0a1.15 1.15 0 1 1 -2.30 0zM1037.18 360.83h2.45v2.30h-2.45zM1038.33 361.98v2.45h-2.30v-2.45zM1038.48 361.98a1.15 1.15 0 1 1 2.30 0a1.15 1.15 0 1 1 -2.30 0zM1039.63 360.83h2.45v2.30h-2.45zM1040.78 361.98v2.45h-2.30v-2.45zM1040.93 361.98a1.15 1.15 0 1 1 2.30 0a1.15 1.15 0 1 1 -2.30 0zM1043.23 361.98v2.45h-2.30v-2.45zM1045.82 361.98a1.15 1.15 0 1 1 2.30 0a1.15 1.15 0 1 1 -2.30 0zM1048.13 361.98v2.45h-2.30v-2.45zM950.31 364.43a1.15 1.15 0 1 1 2.30 0a1.15 1.15 0 1 1 -2.30 0zM952.62 364.43v2.45h-2.30v-2.45zM957.66 364.43a1.15 1.15 0 1 1 2.30 0a1.15 1.15 0 1 1 -2.30 0zM958.81 363.28h2.45v2.30h-2.45zM960.11 364.43a1.15 1.15 0 1 1 2.30 0a1.15 1.15 0 1 1 -2.30 0zM961.26 363.28h2.45v2.30h-2.45zM962.56 364.43a1.15 1.15 0 1 1 2.30 0a1.15 1.15 0 1 1 -2.30 0zM963.71 363.28h2.45v2.30h-2.45zM964.86 364.43v2.45h-2.30v-2.45zM965.01 364.43a1.15 1.15 0 1 1 2.30 0a1.15 1.15 0 1 1 -2.30 0zM966.16 363.28h2.45v2.30h-2.45zM967.31 364.43v2.45h-2.30v-2.45zM967.46 364.43a1.15 1.15 0 1 1 2.30 0a1.15 1.15 0 1 1 -2.30 0zM968.61 363.28h2.45v2.30h-2.45zM969.91 364.43a1.15 1.15 0 1 1 2.30 0a1.15 1.15 0 1 1 -2.30 0zM972.21 364.43v2.45h-2.30v-2.45zM979.70 364.43a1.15 1.15 0 1 1 2.30 0a1.15 1.15 0 1 1 -2.30 0zM980.85 363.28h2.45v2.30h-2.45zM982.00 364.43v2.45h-2.30v-2.45zM982.15 364.43a1.15 1.15 0 1 1 2.30 0a1.15 1.15 0 1 1 -2.30 0zM987.05 364.43a1.15 1.15 0 1 1 2.30 0a1.15 1.15 0 1 1 -2.30 0zM989.35 364.43v2.45h-2.30v-2.45zM991.95 364.43a1.15 1.15 0 1 1 2.30 0a1.15 1.15 0 1 1 -2.30 0zM996.84 364.43a1.15 1.15 0 1 1 2.30 0a1.15 1.15 0 1 1 -2.30 0zM1001.74 364.43a1.15 1.15 0 1 1 2.30 0a1.15 1.15 0 1 1 -2.30 0zM1002.89 363.28h2.45v2.30h-2.45zM1004.04 364.43v2.45h-2.30v-2.45zM1004.19 364.43a1.15 1.15 0 1 1 2.30 0a1.15 1.15 0 1 1 -2.30 0zM1005.34 363.28h2.45v2.30h-2.45zM1006.64 364.43a1.15 1.15 0 1 1 2.30 0a1.15 1.15 0 1 1 -2.30 0zM1008.94 364.43v2.45h-2.30v-2.45zM1013.99 364.43a1.15 1.15 0 1 1 2.30 0a1.15 1.15 0 1 1 -2.30 0zM1015.14 363.28h2.45v2.30h-2.45zM1016.44 364.43a1.15 1.15 0 1 1 2.30 0a1.15 1.15 0 1 1 -2.30 0zM1018.74 364.43v2.45h-2.30v-2.45zM1021.33 364.43a1.15 1.15 0 1 1 2.30 0a1.15 1.15 0 1 1 -2.30 0zM1023.64 364.43v2.45h-2.30v-2.45zM1026.23 364.43a1.15 1.15 0 1 1 2.30 0a1.15 1.15 0 1 1 -2.30 0zM1027.38 363.28h2.45v2.30h-2.45zM1028.53 364.43v2.45h-2.30v-2.45zM1028.68 364.43a1.15 1.15 0 1 1 2.30 0a1.15 1.15 0 1 1 -2.30 0zM1036.03 364.43a1.15 1.15 0 1 1 2.30 0a1.15 1.15 0 1 1 -2.30 0zM1037.18 363.28h2.45v2.30h-2.45zM1038.33 364.43v2.45h-2.30v-2.45zM1038.48 364.43a1.15 1.15 0 1 1 2.30 0a1.15 1.15 0 1 1 -2.30 0zM1039.63 363.28h2.45v2.30h-2.45zM1040.93 364.43a1.15 1.15 0 1 1 2.30 0a1.15 1.15 0 1 1 -2.30 0zM1043.23 364.43v2.45h-2.30v-2.45zM1045.82 364.43a1.15 1.15 0 1 1 2.30 0a1.15 1.15 0 1 1 -2.30 0zM1048.13 364.43v2.45h-2.30v-2.45zM947.87 366.88a1.15 1.15 0 1 1 2.30 0a1.15 1.15 0 1 1 -2.30 0zM949.02 365.73h2.45v2.30h-2.45zM950.31 366.88a1.15 1.15 0 1 1 2.30 0a1.15 1.15 0 1 1 -2.30 0zM962.56 366.88a1.15 1.15 0 1 1 2.30 0a1.15 1.15 0 1 1 -2.30 0zM963.71 365.73h2.45v2.30h-2.45zM964.86 366.88v2.45h-2.30v-2.45zM965.01 366.88a1.15 1.15 0 1 1 2.30 0a1.15 1.15 0 1 1 -2.30 0zM969.91 366.88a1.15 1.15 0 1 1 2.30 0a1.15 1.15 0 1 1 -2.30 0zM972.21 366.88v2.45h-2.30v-2.45zM974.80 366.88a1.15 1.15 0 1 1 2.30 0a1.15 1.15 0 1 1 -2.30 0zM977.11 366.88v2.45h-2.30v-2.45zM979.70 366.88a1.15 1.15 0 1 1 2.30 0a1.15 1.15 0 1 1 -2.30 0zM982.00 366.88v2.45h-2.30v-2.45zM987.05 366.88a1.15 1.15 0 1 1 2.30 0a1.15 1.15 0 1 1 -2.30 0zM988.20 365.73h2.45v2.30h-2.45zM989.35 366.88v2.45h-2.30v-2.45zM989.50 366.88a1.15 1.15 0 1 1 2.30 0a1.15 1.15 0 1 1 -2.30 0zM991.80 366.88v2.45h-2.30v-2.45zM994.40 366.88a1.15 1.15 0 1 1 2.30 0a1.15 1.15 0 1 1 -2.30 0zM999.29 366.88a1.15 1.15 0 1 1 2.30 0a1.15 1.15 0 1 1 -2.30 0zM1000.44 365.73h2.45v2.30h-2.45zM1001.74 366.88a1.15 1.15 0 1 1 2.30 0a1.15 1.15 0 1 1 -2.30 0zM1004.04 366.88v2.45h-2.30v-2.45zM1006.64 366.88a1.15 1.15 0 1 1 2.30 0a1.15 1.15 0 1 1 -2.30 0zM1007.79 365.73h2.45v2.30h-2.45zM1009.09 366.88a1.15 1.15 0 1 1 2.30 0a1.15 1.15 0 1 1 -2.30 0zM1010.24 365.73h2.45v2.30h-2.45zM1011.39 366.88v2.45h-2.30v-2.45zM1011.54 366.88a1.15 1.15 0 1 1 2.30 0a1.15 1.15 0 1 1 -2.30 0zM1013.84 366.88v2.45h-2.30v-2.45zM1016.44 366.88a1.15 1.15 0 1 1 2.30 0a1.15 1.15 0 1 1 -2.30 0zM1021.33 366.88a1.15 1.15 0 1 1 2.30 0a1.15 1.15 0 1 1 -2.30 0zM1023.64 366.88v2.45h-2.30v-2.45zM1026.23 366.88a1.15 1.15 0 1 1 2.30 0a1.15 1.15 0 1 1 -2.30 0zM1028.53 366.88v2.45h-2.30v-2.45zM1036.03 366.88a1.15 1.15 0 1 1 2.30 0a1.15 1.15 0 1 1 -2.30 0zM1040.93 366.88a1.15 1.15 0 1 1 2.30 0a1.15 1.15 0 1 1 -2.30 0zM1043.23 366.88v2.45h-2.30v-2.45zM1045.82 366.88a1.15 1.15 0 1 1 2.30 0a1.15 1.15 0 1 1 -2.30 0zM952.76 369.33a1.15 1.15 0 1 1 2.30 0a1.15 1.15 0 1 1 -2.30 0zM962.56 369.33a1.15 1.15 0 1 1 2.30 0a1.15 1.15 0 1 1 -2.30 0zM967.46 369.33a1.15 1.15 0 1 1 2.30 0a1.15 1.15 0 1 1 -2.30 0zM968.61 368.18h2.45v2.30h-2.45zM969.76 369.33v2.45h-2.30v-2.45zM969.91 369.33a1.15 1.15 0 1 1 2.30 0a1.15 1.15 0 1 1 -2.30 0zM971.06 368.18h2.45v2.30h-2.45zM972.21 369.33v2.45h-2.30v-2.45zM972.36 369.33a1.15 1.15 0 1 1 2.30 0a1.15 1.15 0 1 1 -2.30 0zM973.51 368.18h2.45v2.30h-2.45zM974.66 369.33v2.45h-2.30v-2.45zM974.80 369.33a1.15 1.15 0 1 1 2.30 0a1.15 1.15 0 1 1 -2.30 0zM979.70 369.33a1.15 1.15 0 1 1 2.30 0a1.15 1.15 0 1 1 -2.30 0zM980.85 368.18h2.45v2.30h-2.45zM982.15 369.33a1.15 1.15 0 1 1 2.30 0a1.15 1.15 0 1 1 -2.30 0zM987.05 369.33a1.15 1.15 0 1 1 2.30 0a1.15 1.15 0 1 1 -2.30 0zM988.20 368.18h2.45v2.30h-2.45zM989.35 369.33v2.45h-2.30v-2.45zM989.50 369.33a1.15 1.15 0 1 1 2.30 0a1.15 1.15 0 1 1 -2.30 0zM1001.74 369.33a1.15 1.15 0 1 1 2.30 0a1.15 1.15 0 1 1 -2.30 0zM1009.09 369.33a1.15 1.15 0 1 1 2.30 0a1.15 1.15 0 1 1 -2.30 0zM1010.24 368.18h2.45v2.30h-2.45zM1011.39 369.33v2.45h-2.30v-2.45zM1011.54 369.33a1.15 1.15 0 1 1 2.30 0a1.15 1.15 0 1 1 -2.30 0zM1012.69 368.18h2.45v2.30h-2.45zM1013.84 369.33v2.45h-2.30v-2.45zM1013.99 369.33a1.15 1.15 0 1 1 2.30 0a1.15 1.15 0 1 1 -2.30 0zM1018.89 369.33a1.15 1.15 0 1 1 2.30 0a1.15 1.15 0 1 1 -2.30 0zM1020.04 368.18h2.45v2.30h-2.45zM1021.19 369.33v2.45h-2.30v-2.45zM1021.33 369.33a1.15 1.15 0 1 1 2.30 0a1.15 1.15 0 1 1 -2.30 0zM1022.49 368.18h2.45v2.30h-2.45zM1023.78 369.33a1.15 1.15 0 1 1 2.30 0a1.15 1.15 0 1 1 -2.30 0zM1024.93 368.18h2.45v2.30h-2.45zM1026.23 369.33a1.15 1.15 0 1 1 2.30 0a1.15 1.15 0 1 1 -2.30 0zM1033.58 369.33a1.15 1.15 0 1 1 2.30 0a1.15 1.15 0 1 1 -2.30 0zM1040.93 369.33a1.15 1.15 0 1 1 2.30 0a1.15 1.15 0 1 1 -2.30 0zM947.87 371.78a1.15 1.15 0 1 1 2.30 0a1.15 1.15 0 1 1 -2.30 0zM949.02 370.62h2.45v2.30h-2.45zM950.31 371.78a1.15 1.15 0 1 1 2.30 0a1.15 1.15 0 1 1 -2.30 0zM957.66 371.78a1.15 1.15 0 1 1 2.30 0a1.15 1.15 0 1 1 -2.30 0zM965.01 371.78a1.15 1.15 0 1 1 2.30 0a1.15 1.15 0 1 1 -2.30 0zM966.16 370.62h2.45v2.30h-2.45zM967.46 371.78a1.15 1.15 0 1 1 2.30 0a1.15 1.15 0 1 1 -2.30 0zM968.61 370.62h2.45v2.30h-2.45zM969.91 371.78a1.15 1.15 0 1 1 2.30 0a1.15 1.15 0 1 1 -2.30 0zM971.06 370.62h2.45v2.30h-2.45zM972.36 371.78a1.15 1.15 0 1 1 2.30 0a1.15 1.15 0 1 1 -2.30 0zM987.05 371.78a1.15 1.15 0 1 1 2.30 0a1.15 1.15 0 1 1 -2.30 0zM996.84 371.78a1.15 1.15 0 1 1 2.30 0a1.15 1.15 0 1 1 -2.30 0zM998.00 370.62h2.45v2.30h-2.45zM999.29 371.78a1.15 1.15 0 1 1 2.30 0a1.15 1.15 0 1 1 -2.30 0zM1004.19 371.78a1.15 1.15 0 1 1 2.30 0a1.15 1.15 0 1 1 -2.30 0zM1009.09 371.78a1.15 1.15 0 1 1 2.30 0a1.15 1.15 0 1 1 -2.30 0zM1010.24 370.62h2.45v2.30h-2.45zM1011.54 371.78a1.15 1.15 0 1 1 2.30 0a1.15 1.15 0 1 1 -2.30 0zM1016.44 371.78a1.15 1.15 0 1 1 2.30 0a1.15 1.15 0 1 1 -2.30 0zM1017.59 370.62h2.45v2.30h-2.45zM1018.89 371.78a1.15 1.15 0 1 1 2.30 0a1.15 1.15 0 1 1 -2.30 0zM1038.48 371.78a1.15 1.15 0 1 1 2.30 0a1.15 1.15 0 1 1 -2.30 0zM1043.38 371.78a1.15 1.15 0 1 1 2.30 0a1.15 1.15 0 1 1 -2.30 0z" fill="#000" fill-rule="nonzero"/><rect x="929.42" y="254.22" width="14.69" height="14.69" rx="3.92" fill="none" stroke="#000" stroke-width="2.45"/><rect x="933.10" y="257.90" width="7.35" height="7.35" rx="1.96" fill="#000"/><rect x="1032.28" y="254.22" width="14.69" height="14.69" rx="3.92" fill="none" stroke="#000" stroke-width="2.45"/><rect x="1035.96" y="257.90" width="7.35" height="7.35" rx="1.96" fill="#000"/><rect x="929.42" y="357.08" width="14.69" height="14.69" rx="3.92" fill="none" stroke="#000" stroke-width="2.45"/><rect x="933.10" y="360.76" width="7.35" height="7.35" rx="1.96" fill="#000"/><rect x="970.8" y="295.5" width="34.3" height="34.6" rx="3" fill="#3f5ad6"/><path d="M978.3 300.9H997.6V305.3H990.5V325H985.4V305.3H978.3Z" fill="#fff"/><path d="M980.8 313.5Q982.8 313.8 982.4 316.5Q982.6 319.8 985.2 322.6" fill="none" stroke="#a6d43a" stroke-width="2.8" stroke-linecap="round"/></svg><svg style="left:0;top:0" width="1160" height="826"><rect x="53.9" y="245.7" width="12.4" height="12.2" rx="1.6" fill="none" stroke="#041e49" stroke-width="1.7"/><path d="M56.4 248.9H63.8M56.4 251.8H63.8M56.4 254.8H61.8" stroke="#041e49" stroke-width="1.4"/><circle cx="252.8" cy="246.8" r="1.5" fill="#041e49"/><circle cx="252.8" cy="251.8" r="1.5" fill="#041e49"/><circle cx="252.8" cy="256.8" r="1.5" fill="#041e49"/><rect x="95.3" y="463" width="14.2" height="14.5" fill="#fff" stroke="#cfd8dc" stroke-width="0.8"/><rect x="97" y="469" width="2.4" height="8" fill="#8bc34a"/><rect x="101.3" y="472" width="2.4" height="5" fill="#e53935"/><rect x="105.6" y="465" width="2.4" height="12" fill="#1e88e5"/><defs><linearGradient id="pg" x1="0" y1="0" x2="0" y2="1"><stop offset="0" stop-color="#c0dc2a"/><stop offset="1" stop-color="#14a03c"/></linearGradient></defs><g transform="rotate(30 102.6 506.3)"><rect x="98.2" y="501.9" width="8.8" height="8.8" rx="1" fill="url(#pg)"/><circle cx="102.6" cy="500.9" r="2.3" fill="url(#pg)"/><circle cx="108" cy="506.3" r="2.3" fill="url(#pg)"/><circle cx="102.6" cy="511.7" r="2.3" fill="url(#pg)"/><circle cx="97.2" cy="506.3" r="2.3" fill="url(#pg)"/></g><rect x="95.3" y="535.4" width="12.5" height="14.2" fill="#fff" stroke="#b0bec5" stroke-width="0.8"/><path d="M97 539H104M97 542H104M97 545H103" stroke="#90a4ae" stroke-width="0.7"/><path d="M108.8 535.5L110.6 537.3L102.5 545.6L100.2 546.4L101 544Z" fill="#fbc02d"/><path d="M108.8 535.5L110.6 537.3L109.5 538.4L107.7 536.6Z" fill="#e57373"/></svg><svg style="left:0;top:0" width="1160" height="826"><g class="ic"><circle cx="41.2" cy="80.8" r="4.6"/><path d="M44.6 84.2L49.8 89.4"/><path d="M138.1 88.4H144.1A3.45 3.45 0 0 0 144.1 81.5H137"/><path d="M140.2 78.3L136.9 81.5L140.2 84.8"/><path d="M177.7 88.4H171.7A3.45 3.45 0 0 1 171.7 81.5H178.8"/><path d="M175.6 78.3L178.9 81.5L175.6 84.8"/><path d="M201.9 79.8V77H210V79.8"/><path d="M201.9 86.9H198.9V82.2Q198.9 80.7 200.4 80.7H211.6Q213.1 80.7 213.1 82.2V86.9H210"/><rect x="201.9" y="84.5" width="8.1" height="4.6"/><circle cx="210.6" cy="82.6" r="0.6" fill="#444746" stroke="none"/><path d="M231.8 84.6L235.6 75.4L239.4 84.6M233.2 81.2H238" stroke-width="1.6"/><path d="M236.6 86.4L239.5 89.1L244.3 84.3" stroke-width="1.6"/><rect x="266" y="75.6" width="9.6" height="3.8" rx="1" stroke-width="1.6"/><path d="M266 77.5H263.2V82.1H270.4V86.6" stroke-width="1.6"/><rect x="268.7" y="86.6" width="3.5" height="4.6" rx="0.6" stroke-width="1.6"/><path d="M345 80.8H353L349.0 84.8Z" fill="#444746" stroke="none"/><path d="M474 80.8H482L478.0 84.8Z" fill="#444746" stroke="none"/><path d="M580 80.8H588L584.0 84.8Z" fill="#444746" stroke="none"/><path d="M1008.3 80.8H1015.8L1012.05 84.8Z" fill="#444746" stroke="none"/><path d="M1088 80.8H1096L1092.0 84.8Z" fill="#444746" stroke="none"/><path d="M1132 80.8H1140L1136.0 84.8Z" fill="#444746" stroke="none"/><path d="M614.8 81.8H624.6"/><path d="M678.6 81.9H689M683.8 76.8V87"/><path d="M717 78.1H720.4Q722.9 78.1 722.9 80.3Q722.9 82.4 720.4 82.4H717ZM717 82.4H720.9Q723.3 82.4 723.3 84.6Q723.3 86.8 720.9 86.8H717Z" stroke-width="2.2" stroke-linejoin="round"/><path d="M750 77.8H756.8M747 88.2H753.8M753.2 77.8L749.8 88.2" stroke-width="1.7"/><path d="M780 76.2V82.2Q780 86.6 784 86.6Q788 86.6 788 82.2V76.2" stroke-width="1.7"/><path d="M778.2 89.3H789.7" stroke-width="1.1"/><path d="M812.7 84.6L817.1 75.4L821.1 84.6M814.2 81.2H819.8" stroke-width="1.6"/><rect x="806" y="88.2" width="22.1" height="3.6" fill="#000" stroke="none"/><path d="M854.6 73.1L858 76.4L849.5 84.5L846.1 81.2Z" fill="#444746" stroke="#444746" stroke-width="0.6" stroke-linejoin="round"/><path d="M850.6 78.7L852.15 80.2L849.4 82.8L847.9 81.3Z" fill="#eef1f6" stroke="none"/><path d="M844.2 84.7L846.4 82.3L848.7 84.7Z" fill="#444746" stroke="none"/><path d="M889.7 79.95H887A2.95 2.95 0 0 0 887 85.85H889.7M892.1 79.95H895.2A2.95 2.95 0 0 1 895.2 85.85H892.1" stroke-width="1.7"/><path d="M888.2 83H893.8" stroke-width="1.4"/><path d="M916.3 90V76.9Q916.3 75.9 917.3 75.9H929.2Q930.2 75.9 930.2 76.9V85.9Q930.2 86.9 929.2 86.9H919.4Z" stroke="#a8abae" stroke-width="1.4" stroke-linejoin="round"/><path d="M922.9 78.1V84.6M919.6 81.4H926.2" stroke="#a8abae" stroke-width="1.4"/><rect x="949.9" y="76.6" width="12.5" height="12.6" rx="1" stroke-width="1.5"/><path d="M952.1 86.9L954.3 84.3L956.3 86.9ZM955.1 86.9L957.9 82.6L960.5 86.9Z" fill="#444746" stroke="none"/><path d="M987.1 76.5H1001M987.1 79.8H996.9M987.1 82.9H1001M987.1 86.2H996.9M987.1 89.1H1001" stroke-width="1.7"/><path d="M1032.8 78.5V87.8" stroke-width="1.7"/><path d="M1030 80.2L1032.8 77.2L1035.6 80.2ZM1030 86.2L1032.8 89.2L1035.6 86.2Z" fill="#444746" stroke="#444746" stroke-width="0.8"/><path d="M1038.2 78.5H1046M1038.2 82.9H1046M1038.2 87.2H1046" stroke-width="1.5"/><path d="M1063.3 79L1065.9 81.3L1069.9 76.8M1063.3 86L1065.9 88.3L1069.9 83.8" stroke-width="1.6"/><path d="M1072.5 79.4H1079.1M1072.5 86H1079.1" stroke-width="1.5"/><circle cx="1109.5" cy="78.6" r="1.5" fill="#444746" stroke="none"/><circle cx="1109.5" cy="83" r="1.5" fill="#444746" stroke="none"/><circle cx="1109.5" cy="87.2" r="1.5" fill="#444746" stroke="none"/><path d="M1113 78.6H1122M1113 83H1122M1113 87.2H1122" stroke-width="1.7"/><path d="M1152.6 76.4L1153.8 76V79.6M1152.2 81.2H1154.4V83H1152.4V84.8H1154.6M1152.2 86.4H1154.4V90H1152.2M1152.6 88.2H1154.4" stroke-width="1"/><path d="M1156.6 78.4H1161M1156.6 83H1161M1156.6 87.6H1161" stroke-width="1.5"/><path d="M259.1 14.2L261.2 19L266 19.5L262.4 22.8L263.4 27.4L259.1 25L254.8 27.4L255.8 22.8L252.2 19.5L257 19Z" stroke-width="1.5" stroke-linejoin="round"/><path d="M283.9 26.3V15.8H289.2L290.8 17.4H298.2V26.3Z" stroke-width="1.6" stroke-linejoin="round"/><path d="M283.9 17.6H298" stroke-width="1.3"/><path d="M287.5 21.9H291.3" stroke-width="1.6"/><path d="M290.3 19.6L293.2 21.9L290.3 24.2Z" fill="#444746" stroke="#444746" stroke-width="0.8"/><path d="M318.5 26H328.5Q331.4 26 331.4 23Q331.4 20.2 328.4 19.9Q327.6 16 323.5 16Q320.1 16 318.9 19.3Q315 19.6 315 22.8Q315 26 318.5 26Z" stroke-width="1.6"/><path d="M320.7 21.8L322.6 23.6L326.2 20" stroke-width="1.6"/><path d="M57.1 154H42.6M49.2 146.8L42 154L49.2 161.2" stroke-width="2" /><path d="M247.8 206.2H258.2M253 201V211.4" stroke-width="1.7"/></g></svg></body></html>
